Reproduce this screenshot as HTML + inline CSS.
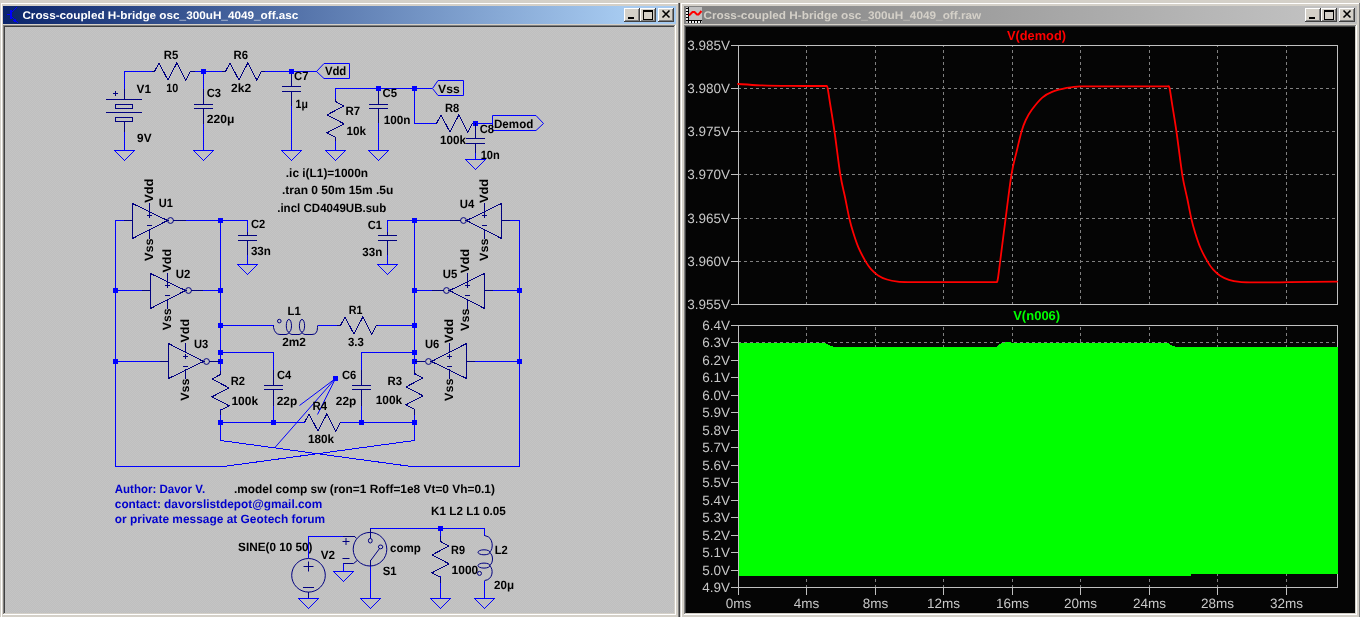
<!DOCTYPE html><html><head><meta charset="utf-8"><style>html,body{margin:0;padding:0;background:#d4d0c8;overflow:hidden}svg{will-change:transform} svg text{text-rendering:geometricPrecision}</style></head><body><svg width="1360" height="617" viewBox="0 0 1360 617" shape-rendering="crispEdges" style="display:block">
<rect x="0" y="0" width="1360" height="617" fill="#d4d0c8"/>
<rect x="1" y="3" width="679" height="1" fill="#ffffff"/>
<rect x="1" y="3" width="1" height="615" fill="#ffffff"/>
<rect x="678" y="3" width="1" height="615" fill="#808080"/>
<rect x="679" y="3" width="1" height="615" fill="#404040"/>
<defs><pattern id="dith" x="0" y="0" width="2" height="2" patternUnits="userSpaceOnUse"><rect width="2" height="2" fill="#bfbfbf"/><rect width="1" height="1" fill="#c4c4c4"/><rect x="1" y="1" width="1" height="1" fill="#c4c4c4"/></pattern><linearGradient id="ga" gradientUnits="userSpaceOnUse" x1="3" x2="622" y1="0" y2="0"><stop offset="0" stop-color="#0a246a"/><stop offset="1" stop-color="#a6caf0"/></linearGradient><linearGradient id="gi" gradientUnits="userSpaceOnUse" x1="684" x2="1303" y1="0" y2="0"><stop offset="0" stop-color="#808080"/><stop offset="1" stop-color="#c0c0c0"/></linearGradient></defs>
<rect x="3" y="6" width="673" height="18" fill="url(#ga)"/>
<rect x="3" y="25" width="673" height="1" fill="#808080"/>
<rect x="3" y="25" width="1" height="590" fill="#808080"/>
<rect x="4" y="26" width="671" height="1" fill="#404040"/>
<rect x="4" y="26" width="1" height="588" fill="#404040"/>
<rect x="3" y="614" width="673" height="1" fill="#ffffff"/>
<rect x="675" y="25" width="1" height="590" fill="#ffffff"/>
<rect x="4" y="613" width="671" height="1" fill="#d4d0c8"/>
<rect x="674" y="26" width="1" height="588" fill="#d4d0c8"/>
<rect x="5" y="27" width="669" height="586" fill="url(#dith)"/>
<rect x="681" y="3" width="680" height="1" fill="#ffffff"/>
<rect x="681" y="3" width="1" height="615" fill="#ffffff"/>
<rect x="684" y="6" width="673" height="18" fill="url(#gi)"/>
<rect x="684" y="25" width="673" height="1" fill="#808080"/>
<rect x="684" y="25" width="1" height="590" fill="#808080"/>
<rect x="685" y="26" width="671" height="1" fill="#404040"/>
<rect x="685" y="26" width="1" height="588" fill="#404040"/>
<rect x="684" y="614" width="673" height="1" fill="#ffffff"/>
<rect x="1356" y="25" width="1" height="590" fill="#ffffff"/>
<rect x="685" y="613" width="671" height="1" fill="#d4d0c8"/>
<rect x="1355" y="26" width="1" height="588" fill="#d4d0c8"/>
<rect x="1359" y="3" width="1" height="615" fill="#808080"/>
<rect x="686" y="27" width="669" height="586" fill="#050505"/>
<rect x="624" y="8" width="16" height="14" fill="#d4d0c8"/>
<rect x="624" y="8" width="16" height="1" fill="#ffffff"/>
<rect x="624" y="8" width="1" height="14" fill="#ffffff"/>
<rect x="624" y="21" width="16" height="1" fill="#404040"/>
<rect x="639" y="8" width="1" height="14" fill="#404040"/>
<rect x="625" y="20" width="14" height="1" fill="#808080"/>
<rect x="638" y="9" width="1" height="12" fill="#808080"/>
<rect x="628" y="17" width="6" height="2" fill="#000"/>
<rect x="640" y="8" width="16" height="14" fill="#d4d0c8"/>
<rect x="640" y="8" width="16" height="1" fill="#ffffff"/>
<rect x="640" y="8" width="1" height="14" fill="#ffffff"/>
<rect x="640" y="21" width="16" height="1" fill="#404040"/>
<rect x="655" y="8" width="1" height="14" fill="#404040"/>
<rect x="641" y="20" width="14" height="1" fill="#808080"/>
<rect x="654" y="9" width="1" height="12" fill="#808080"/>
<rect x="643" y="10" width="9" height="9" fill="none" stroke="#000" stroke-width="1" transform="translate(.5,.5)"/>
<rect x="643" y="11" width="9" height="1" fill="#000"/>
<rect x="658" y="8" width="16" height="14" fill="#d4d0c8"/>
<rect x="658" y="8" width="16" height="1" fill="#ffffff"/>
<rect x="658" y="8" width="1" height="14" fill="#ffffff"/>
<rect x="658" y="21" width="16" height="1" fill="#404040"/>
<rect x="673" y="8" width="1" height="14" fill="#404040"/>
<rect x="659" y="20" width="14" height="1" fill="#808080"/>
<rect x="672" y="9" width="1" height="12" fill="#808080"/>
<path d="M662.5,10.5 L669.5,17.5 M669.5,10.5 L662.5,17.5" stroke="#000" stroke-width="1.6" shape-rendering="geometricPrecision"/>
<rect x="1305" y="8" width="16" height="14" fill="#d4d0c8"/>
<rect x="1305" y="8" width="16" height="1" fill="#ffffff"/>
<rect x="1305" y="8" width="1" height="14" fill="#ffffff"/>
<rect x="1305" y="21" width="16" height="1" fill="#404040"/>
<rect x="1320" y="8" width="1" height="14" fill="#404040"/>
<rect x="1306" y="20" width="14" height="1" fill="#808080"/>
<rect x="1319" y="9" width="1" height="12" fill="#808080"/>
<rect x="1309" y="17" width="6" height="2" fill="#000"/>
<rect x="1321" y="8" width="16" height="14" fill="#d4d0c8"/>
<rect x="1321" y="8" width="16" height="1" fill="#ffffff"/>
<rect x="1321" y="8" width="1" height="14" fill="#ffffff"/>
<rect x="1321" y="21" width="16" height="1" fill="#404040"/>
<rect x="1336" y="8" width="1" height="14" fill="#404040"/>
<rect x="1322" y="20" width="14" height="1" fill="#808080"/>
<rect x="1335" y="9" width="1" height="12" fill="#808080"/>
<rect x="1324" y="10" width="9" height="9" fill="none" stroke="#000" stroke-width="1" transform="translate(.5,.5)"/>
<rect x="1324" y="11" width="9" height="1" fill="#000"/>
<rect x="1339" y="8" width="16" height="14" fill="#d4d0c8"/>
<rect x="1339" y="8" width="16" height="1" fill="#ffffff"/>
<rect x="1339" y="8" width="1" height="14" fill="#ffffff"/>
<rect x="1339" y="21" width="16" height="1" fill="#404040"/>
<rect x="1354" y="8" width="1" height="14" fill="#404040"/>
<rect x="1340" y="20" width="14" height="1" fill="#808080"/>
<rect x="1353" y="9" width="1" height="12" fill="#808080"/>
<path d="M1343.5,10.5 L1350.5,17.5 M1350.5,10.5 L1343.5,17.5" stroke="#000" stroke-width="1.6" shape-rendering="geometricPrecision"/>
<rect x="10" y="10" width="2" height="9" fill="#0000ff"/>
<rect x="7" y="14" width="3" height="1" fill="#0000ff"/>
<rect x="12" y="11" width="1" height="1" fill="#0000ff"/>
<rect x="13" y="10" width="1" height="1" fill="#0000ff"/>
<rect x="14" y="9" width="1" height="1" fill="#0000ff"/>
<rect x="15" y="8" width="1" height="1" fill="#0000ff"/>
<rect x="16" y="7" width="1" height="1" fill="#0000ff"/>
<rect x="12" y="17" width="1" height="1" fill="#0000ff"/>
<rect x="13" y="18" width="1" height="1" fill="#0000ff"/>
<rect x="14" y="19" width="1" height="1" fill="#0000ff"/>
<rect x="15" y="20" width="1" height="1" fill="#0000ff"/>
<rect x="16" y="21" width="1" height="1" fill="#0000ff"/>
<rect x="17" y="22" width="1" height="1" fill="#0000ff"/>
<rect x="13" y="20" width="3" height="1" fill="#0000ff"/>
<rect x="15" y="19" width="1" height="3" fill="#0000ff"/>
<rect x="14" y="21" width="2" height="1" fill="#0000ff"/>
<rect x="686" y="7" width="16" height="16" fill="#c0c0c0"/>
<rect x="688" y="7" width="1" height="16" fill="#000"/>
<rect x="686" y="20" width="16" height="1" fill="#000"/>
<rect x="686" y="8" width="3" height="1" fill="#000"/>
<rect x="686" y="11" width="3" height="1" fill="#000"/>
<rect x="686" y="14" width="3" height="1" fill="#000"/>
<rect x="686" y="17" width="3" height="1" fill="#000"/>
<rect x="686" y="9" width="2" height="2" fill="#f0f0f0"/>
<rect x="686" y="12" width="2" height="2" fill="#f0f0f0"/>
<rect x="686" y="15" width="2" height="2" fill="#f0f0f0"/>
<rect x="686" y="18" width="2" height="2" fill="#f0f0f0"/>
<rect x="688" y="21" width="1" height="2" fill="#000"/>
<rect x="691" y="21" width="1" height="2" fill="#000"/>
<rect x="694" y="21" width="1" height="2" fill="#000"/>
<rect x="697" y="21" width="1" height="2" fill="#000"/>
<rect x="700" y="21" width="1" height="2" fill="#000"/>
<rect x="689" y="21" width="2" height="2" fill="#f0f0f0"/>
<rect x="692" y="21" width="2" height="2" fill="#f0f0f0"/>
<rect x="695" y="21" width="2" height="2" fill="#f0f0f0"/>
<rect x="698" y="21" width="2" height="2" fill="#f0f0f0"/>
<polyline points="689,15.5 692.5,12 694.5,12 697,14.5 698.5,14.5 701.5,11" fill="none" stroke="#ff0000" stroke-width="2" shape-rendering="geometricPrecision"/>
<text x="22.4" y="19.3" font-family="Liberation Sans" font-size="11" font-weight="bold" fill="#ffffff" textLength="276.0" lengthAdjust="spacingAndGlyphs">Cross-coupled H-bridge osc_300uH_4049_off.asc</text>
<text x="703.5" y="19.0" font-family="Liberation Sans" font-size="11" font-weight="bold" fill="#d4d0c8" textLength="277.8" lengthAdjust="spacingAndGlyphs">Cross-coupled H-bridge osc_300uH_4049_off.raw</text>
<rect x="124" y="71" width="1" height="19" fill="#0000ff"/>
<rect x="124" y="71" width="28" height="1" fill="#0000ff"/>
<rect x="194" y="71" width="28" height="1" fill="#0000ff"/>
<rect x="203" y="71" width="1" height="19" fill="#0000ff"/>
<rect x="264" y="71" width="53" height="1" fill="#0000ff"/>
<rect x="203" y="123" width="1" height="28" fill="#0000ff"/>
<rect x="291" y="105" width="1" height="46" fill="#0000ff"/>
<rect x="124" y="131" width="1" height="20" fill="#0000ff"/>
<rect x="201" y="69" width="5" height="5" fill="#0000ff"/>
<rect x="289" y="69" width="5" height="5" fill="#0000ff"/>
<rect x="124" y="89" width="1" height="11" fill="#000080"/>
<rect x="106" y="99" width="36" height="1" fill="#000080"/>
<rect x="115.5" y="104.5" width="17" height="4" fill="none" stroke="#000080"/>
<rect x="106" y="112" width="36" height="1" fill="#000080"/>
<rect x="115.5" y="117.5" width="17" height="4" fill="none" stroke="#000080"/>
<rect x="124" y="121" width="1" height="11" fill="#000080"/>
<rect x="113" y="93" width="5" height="1" fill="#000080"/>
<rect x="115" y="91" width="1" height="5" fill="#000080"/>
<polygon points="114.5,150.5 134.5,150.5 124.5,160.5" fill="none" stroke="#0000ff" stroke-width="1"/>
<polygon points="193.5,150.5 213.5,150.5 203.5,160.5" fill="none" stroke="#0000ff" stroke-width="1"/>
<polygon points="281.5,150.5 301.5,150.5 291.5,160.5" fill="none" stroke="#0000ff" stroke-width="1"/>
<polyline points="151.5,71.5 154.5,71.5 158.97,62.9 167.91,80.1 176.85,62.9 185.79,80.1 190.26,71.5 194.5,71.5" fill="none" stroke="#000080" stroke-width="1"/>
<polyline points="221.5,71.5 225.5,71.5 229.97,62.9 238.91,80.1 247.85,62.9 256.79,80.1 261.26,71.5 264.5,71.5" fill="none" stroke="#000080" stroke-width="1"/>
<rect x="203" y="89" width="1" height="16" fill="#000080"/>
<rect x="203" y="108" width="1" height="16" fill="#000080"/>
<rect x="194" y="104" width="19" height="1" fill="#000080"/>
<rect x="194" y="108" width="19" height="1" fill="#000080"/>
<rect x="291" y="74" width="1" height="13" fill="#000080"/>
<rect x="291" y="91" width="1" height="15" fill="#000080"/>
<rect x="282" y="86" width="19" height="1" fill="#000080"/>
<rect x="282" y="91" width="19" height="1" fill="#000080"/>
<polygon points="316.5,71.5 324,63.5 349.5,63.5 349.5,78.5 324,78.5" fill="none" stroke="#0000ff" stroke-width="1" shape-rendering="geometricPrecision"/>
<rect x="335" y="88" width="1" height="11" fill="#0000ff"/>
<rect x="335" y="88" width="97" height="1" fill="#0000ff"/>
<rect x="414" y="88" width="1" height="36" fill="#0000ff"/>
<rect x="414" y="123" width="22" height="1" fill="#0000ff"/>
<rect x="376" y="86" width="5" height="5" fill="#0000ff"/>
<rect x="412" y="86" width="5" height="5" fill="#0000ff"/>
<rect x="378" y="88" width="1" height="4" fill="#0000ff"/>
<rect x="378" y="122" width="1" height="29" fill="#0000ff"/>
<rect x="335" y="140" width="1" height="11" fill="#0000ff"/>
<polyline points="335.5,98.5 335.5,101.5 344.1,105.97 326.9,114.91 344.1,123.85 326.9,132.79 335.5,137.26 335.5,140.5" fill="none" stroke="#000080" stroke-width="1"/>
<rect x="378" y="91" width="1" height="14" fill="#000080"/>
<rect x="378" y="108" width="1" height="15" fill="#000080"/>
<rect x="369" y="104" width="19" height="1" fill="#000080"/>
<rect x="369" y="108" width="19" height="1" fill="#000080"/>
<polygon points="325.5,150.5 345.5,150.5 335.5,160.5" fill="none" stroke="#0000ff" stroke-width="1"/>
<polygon points="368.5,150.5 388.5,150.5 378.5,160.5" fill="none" stroke="#0000ff" stroke-width="1"/>
<polygon points="432.5,88.5 438,80.5 463.5,80.5 463.5,95.5 438,95.5" fill="none" stroke="#0000ff" stroke-width="1" shape-rendering="geometricPrecision"/>
<polyline points="435.5,123.5 436.5,123.5 440.97,114.9 449.91,132.1 458.85,114.9 467.79,132.1 472.26,123.5 475.5,123.5" fill="none" stroke="#000080" stroke-width="1"/>
<rect x="475" y="123" width="18" height="1" fill="#0000ff"/>
<rect x="473" y="121" width="5" height="5" fill="#0000ff"/>
<rect x="475" y="123" width="1" height="16" fill="#000080"/>
<rect x="475" y="143" width="1" height="11" fill="#000080"/>
<rect x="466" y="138" width="19" height="1" fill="#000080"/>
<rect x="466" y="143" width="19" height="1" fill="#000080"/>
<rect x="475" y="153" width="1" height="7" fill="#0000ff"/>
<polygon points="465.5,159.5 485.5,159.5 475.5,169.5" fill="none" stroke="#0000ff" stroke-width="1"/>
<polygon points="492.5,115.5 536,115.5 543.5,123.5 536,130.5 492.5,130.5" fill="none" stroke="#0000ff" stroke-width="1" shape-rendering="geometricPrecision"/>
<text x="136.6" y="92.6" font-family="Liberation Sans" font-size="12" font-weight="bold" fill="#000" textLength="14.4" lengthAdjust="spacingAndGlyphs">V1</text>
<text x="137.1" y="141.6" font-family="Liberation Sans" font-size="12" font-weight="bold" fill="#000" textLength="14.4" lengthAdjust="spacingAndGlyphs">9V</text>
<text x="163.8" y="58.6" font-family="Liberation Sans" font-size="12" font-weight="bold" fill="#000" textLength="14.5" lengthAdjust="spacingAndGlyphs">R5</text>
<text x="166.3" y="91.8" font-family="Liberation Sans" font-size="12" font-weight="bold" fill="#000" textLength="12.0" lengthAdjust="spacingAndGlyphs">10</text>
<text x="206.8" y="97.4" font-family="Liberation Sans" font-size="12" font-weight="bold" fill="#000" textLength="14.3" lengthAdjust="spacingAndGlyphs">C3</text>
<text x="206.8" y="123.3" font-family="Liberation Sans" font-size="12" font-weight="bold" fill="#000" textLength="27.6" lengthAdjust="spacingAndGlyphs">220μ</text>
<text x="233.5" y="58.6" font-family="Liberation Sans" font-size="12" font-weight="bold" fill="#000" textLength="14.5" lengthAdjust="spacingAndGlyphs">R6</text>
<text x="231" y="91.8" font-family="Liberation Sans" font-size="12" font-weight="bold" fill="#000" textLength="20.1" lengthAdjust="spacingAndGlyphs">2k2</text>
<text x="294" y="79.9" font-family="Liberation Sans" font-size="12" font-weight="bold" fill="#000" textLength="14.4" lengthAdjust="spacingAndGlyphs">C7</text>
<text x="295.6" y="107.6" font-family="Liberation Sans" font-size="12" font-weight="bold" fill="#000" textLength="12.3" lengthAdjust="spacingAndGlyphs">1μ</text>
<text x="324.9" y="75.3" font-family="Liberation Sans" font-size="12" font-weight="bold" fill="#000" textLength="21.4" lengthAdjust="spacingAndGlyphs">Vdd</text>
<text x="345.5" y="114.5" font-family="Liberation Sans" font-size="12" font-weight="bold" fill="#000" textLength="14.7" lengthAdjust="spacingAndGlyphs">R7</text>
<text x="346.5" y="134.6" font-family="Liberation Sans" font-size="12" font-weight="bold" fill="#000" textLength="19.5" lengthAdjust="spacingAndGlyphs">10k</text>
<text x="382.6" y="97.3" font-family="Liberation Sans" font-size="12" font-weight="bold" fill="#000" textLength="14.5" lengthAdjust="spacingAndGlyphs">C5</text>
<text x="383.7" y="123.7" font-family="Liberation Sans" font-size="12" font-weight="bold" fill="#000" textLength="26.8" lengthAdjust="spacingAndGlyphs">100n</text>
<text x="438" y="92.5" font-family="Liberation Sans" font-size="12" font-weight="bold" fill="#000" textLength="21.7" lengthAdjust="spacingAndGlyphs">Vss</text>
<text x="444.9" y="111.6" font-family="Liberation Sans" font-size="12" font-weight="bold" fill="#000" textLength="14.2" lengthAdjust="spacingAndGlyphs">R8</text>
<text x="440" y="143.6" font-family="Liberation Sans" font-size="12" font-weight="bold" fill="#000" textLength="26.0" lengthAdjust="spacingAndGlyphs">100k</text>
<text x="479.7" y="133" font-family="Liberation Sans" font-size="12" font-weight="bold" fill="#000" textLength="14.3" lengthAdjust="spacingAndGlyphs">C8</text>
<text x="480.7" y="158.5" font-family="Liberation Sans" font-size="12" font-weight="bold" fill="#000" textLength="19.1" lengthAdjust="spacingAndGlyphs">10n</text>
<text x="494" y="127.9" font-family="Liberation Sans" font-size="12" font-weight="bold" fill="#000" textLength="39.3" lengthAdjust="spacingAndGlyphs">Demod</text>
<text x="285.8" y="176.7" font-family="Liberation Sans" font-size="12" font-weight="bold" fill="#000" textLength="82.2" lengthAdjust="spacingAndGlyphs">.ic i(L1)=1000n</text>
<text x="282" y="193.5" font-family="Liberation Sans" font-size="12" font-weight="bold" fill="#000" textLength="111.3" lengthAdjust="spacingAndGlyphs">.tran 0 50m 15m .5u</text>
<text x="277.2" y="211.6" font-family="Liberation Sans" font-size="12" font-weight="bold" fill="#000" textLength="109.0" lengthAdjust="spacingAndGlyphs">.incl CD4049UB.sub</text>
<rect x="115" y="220" width="18" height="1" fill="#0000ff"/>
<rect x="115" y="220" width="1" height="247" fill="#0000ff"/>
<rect x="115" y="466" width="109" height="1" fill="#0000ff"/>
<line x1="223.5" y1="466.5" x2="414.5" y2="440.5" stroke="#0000ff" stroke-width="1"/>
<rect x="115" y="290" width="36" height="1" fill="#0000ff"/>
<rect x="115" y="361" width="54" height="1" fill="#0000ff"/>
<rect x="113" y="288" width="5" height="5" fill="#0000ff"/>
<rect x="113" y="359" width="5" height="5" fill="#0000ff"/>
<rect x="220" y="220" width="1" height="155" fill="#0000ff"/>
<rect x="220" y="409" width="1" height="32" fill="#0000ff"/>
<line x1="220.5" y1="440.5" x2="411.5" y2="466.5" stroke="#0000ff" stroke-width="1"/>
<rect x="411" y="466" width="109" height="1" fill="#0000ff"/>
<rect x="519" y="220" width="1" height="247" fill="#0000ff"/>
<rect x="509" y="220" width="11" height="1" fill="#0000ff"/>
<rect x="492" y="290" width="28" height="1" fill="#0000ff"/>
<rect x="474" y="361" width="46" height="1" fill="#0000ff"/>
<rect x="517" y="288" width="5" height="5" fill="#0000ff"/>
<rect x="517" y="359" width="5" height="5" fill="#0000ff"/>
<rect x="185" y="220" width="63" height="1" fill="#0000ff"/>
<rect x="247" y="220" width="1" height="13" fill="#0000ff"/>
<rect x="202" y="290" width="19" height="1" fill="#0000ff"/>
<rect x="209" y="361" width="12" height="1" fill="#0000ff"/>
<rect x="387" y="220" width="64" height="1" fill="#0000ff"/>
<rect x="387" y="220" width="1" height="13" fill="#0000ff"/>
<rect x="414" y="290" width="19" height="1" fill="#0000ff"/>
<rect x="414" y="220" width="1" height="155" fill="#0000ff"/>
<rect x="414" y="409" width="1" height="32" fill="#0000ff"/>
<line x1="414.5" y1="440.5" x2="223.5" y2="466.5" stroke="#0000ff" stroke-width="1"/>
<rect x="218" y="218" width="5" height="5" fill="#0000ff"/>
<rect x="412" y="218" width="5" height="5" fill="#0000ff"/>
<rect x="218" y="288" width="5" height="5" fill="#0000ff"/>
<rect x="412" y="288" width="5" height="5" fill="#0000ff"/>
<rect x="218" y="323" width="5" height="5" fill="#0000ff"/>
<rect x="412" y="323" width="5" height="5" fill="#0000ff"/>
<rect x="218" y="350" width="5" height="5" fill="#0000ff"/>
<rect x="412" y="350" width="5" height="5" fill="#0000ff"/>
<rect x="218" y="359" width="5" height="5" fill="#0000ff"/>
<rect x="412" y="359" width="5" height="5" fill="#0000ff"/>
<rect x="218" y="420" width="5" height="5" fill="#0000ff"/>
<rect x="412" y="420" width="5" height="5" fill="#0000ff"/>
<rect x="220" y="325" width="54" height="1" fill="#0000ff"/>
<rect x="318" y="325" width="19" height="1" fill="#0000ff"/>
<rect x="377" y="325" width="38" height="1" fill="#0000ff"/>
<rect x="220" y="352" width="54" height="1" fill="#0000ff"/>
<rect x="273" y="352" width="1" height="34" fill="#0000ff"/>
<rect x="273" y="389" width="1" height="34" fill="#0000ff"/>
<rect x="361" y="352" width="54" height="1" fill="#0000ff"/>
<rect x="361" y="352" width="1" height="34" fill="#0000ff"/>
<rect x="361" y="389" width="1" height="34" fill="#0000ff"/>
<rect x="220" y="422" width="85" height="1" fill="#0000ff"/>
<rect x="340" y="422" width="75" height="1" fill="#0000ff"/>
<rect x="271" y="420" width="5" height="5" fill="#0000ff"/>
<rect x="359" y="420" width="5" height="5" fill="#0000ff"/>
<rect x="247" y="254" width="1" height="11" fill="#0000ff"/>
<polygon points="237.5,264.5 257.5,264.5 247.5,274.5" fill="none" stroke="#0000ff" stroke-width="1"/>
<rect x="387" y="254" width="1" height="11" fill="#0000ff"/>
<polygon points="377.5,264.5 397.5,264.5 387.5,274.5" fill="none" stroke="#0000ff" stroke-width="1"/>
<rect x="247" y="232" width="1" height="4" fill="#000080"/>
<rect x="247" y="240" width="1" height="15" fill="#000080"/>
<rect x="238" y="235" width="19" height="1" fill="#000080"/>
<rect x="238" y="240" width="19" height="1" fill="#000080"/>
<rect x="387" y="232" width="1" height="4" fill="#000080"/>
<rect x="387" y="240" width="1" height="15" fill="#000080"/>
<rect x="378" y="235" width="19" height="1" fill="#000080"/>
<rect x="378" y="240" width="19" height="1" fill="#000080"/>
<rect x="273" y="370" width="1" height="16" fill="#000080"/>
<rect x="273" y="389" width="1" height="17" fill="#000080"/>
<rect x="264" y="385" width="19" height="1" fill="#000080"/>
<rect x="264" y="389" width="19" height="1" fill="#000080"/>
<rect x="361" y="370" width="1" height="16" fill="#000080"/>
<rect x="361" y="389" width="1" height="17" fill="#000080"/>
<rect x="352" y="385" width="19" height="1" fill="#000080"/>
<rect x="352" y="389" width="19" height="1" fill="#000080"/>
<polygon points="132.5,203.5 167.5,220.5 132.5,238.5" fill="none" stroke="#000080" stroke-width="1"/>
<circle cx="170.5" cy="220.5" r="2.9" fill="none" stroke="#000080" stroke-width="1" shape-rendering="geometricPrecision"/>
<rect x="149" y="203" width="1" height="10" fill="#000080"/>
<rect x="149" y="229" width="1" height="10" fill="#000080"/>
<rect x="147" y="215" width="5" height="1" fill="#000080"/>
<rect x="149" y="213" width="1" height="5" fill="#000080"/>
<rect x="147" y="225" width="5" height="1" fill="#000080"/>
<polygon points="150.5,273.5 185.5,290.5 150.5,308.5" fill="none" stroke="#000080" stroke-width="1"/>
<circle cx="188.5" cy="290.5" r="2.9" fill="none" stroke="#000080" stroke-width="1" shape-rendering="geometricPrecision"/>
<rect x="167" y="273" width="1" height="10" fill="#000080"/>
<rect x="167" y="299" width="1" height="10" fill="#000080"/>
<rect x="165" y="285" width="5" height="1" fill="#000080"/>
<rect x="167" y="283" width="1" height="5" fill="#000080"/>
<rect x="165" y="295" width="5" height="1" fill="#000080"/>
<polygon points="168.5,343.5 203.5,361.5 168.5,378.5" fill="none" stroke="#000080" stroke-width="1"/>
<circle cx="206.5" cy="361.5" r="2.9" fill="none" stroke="#000080" stroke-width="1" shape-rendering="geometricPrecision"/>
<rect x="185" y="343" width="1" height="10" fill="#000080"/>
<rect x="185" y="369" width="1" height="10" fill="#000080"/>
<rect x="183" y="356" width="5" height="1" fill="#000080"/>
<rect x="185" y="354" width="1" height="5" fill="#000080"/>
<rect x="183" y="366" width="5" height="1" fill="#000080"/>
<polygon points="501.5,203.5 466.5,220.5 501.5,238.5" fill="none" stroke="#000080" stroke-width="1"/>
<circle cx="463.5" cy="220.5" r="2.9" fill="none" stroke="#000080" stroke-width="1" shape-rendering="geometricPrecision"/>
<rect x="484" y="203" width="1" height="10" fill="#000080"/>
<rect x="484" y="229" width="1" height="10" fill="#000080"/>
<rect x="482" y="215" width="5" height="1" fill="#000080"/>
<rect x="484" y="213" width="1" height="5" fill="#000080"/>
<rect x="482" y="225" width="5" height="1" fill="#000080"/>
<polygon points="484.5,273.5 449.5,290.5 484.5,308.5" fill="none" stroke="#000080" stroke-width="1"/>
<circle cx="446.5" cy="290.5" r="2.9" fill="none" stroke="#000080" stroke-width="1" shape-rendering="geometricPrecision"/>
<rect x="467" y="273" width="1" height="10" fill="#000080"/>
<rect x="467" y="299" width="1" height="10" fill="#000080"/>
<rect x="465" y="285" width="5" height="1" fill="#000080"/>
<rect x="467" y="283" width="1" height="5" fill="#000080"/>
<rect x="465" y="295" width="5" height="1" fill="#000080"/>
<polygon points="466.5,343.5 431.5,361.5 466.5,378.5" fill="none" stroke="#000080" stroke-width="1"/>
<circle cx="428.5" cy="361.5" r="2.9" fill="none" stroke="#000080" stroke-width="1" shape-rendering="geometricPrecision"/>
<rect x="449" y="343" width="1" height="10" fill="#000080"/>
<rect x="449" y="369" width="1" height="10" fill="#000080"/>
<rect x="447" y="356" width="5" height="1" fill="#000080"/>
<rect x="449" y="354" width="1" height="5" fill="#000080"/>
<rect x="447" y="366" width="5" height="1" fill="#000080"/>
<rect x="124" y="220" width="9" height="1" fill="#000080"/>
<rect x="142" y="290" width="9" height="1" fill="#000080"/>
<rect x="160" y="361" width="9" height="1" fill="#000080"/>
<rect x="173" y="220" width="13" height="1" fill="#000080"/>
<rect x="191" y="290" width="12" height="1" fill="#000080"/>
<rect x="209" y="361" width="11" height="1" fill="#000080"/>
<rect x="501" y="220" width="9" height="1" fill="#000080"/>
<rect x="484" y="290" width="9" height="1" fill="#000080"/>
<rect x="466" y="361" width="9" height="1" fill="#000080"/>
<rect x="450" y="220" width="11" height="1" fill="#000080"/>
<rect x="432" y="290" width="12" height="1" fill="#000080"/>
<rect x="415" y="361" width="10" height="1" fill="#000080"/>
<polyline points="220.5,370.5 220.5,374.5 211.9,378.97 229.1,387.91 211.9,396.85 229.1,405.79 220.5,410.26 220.5,414.5" fill="none" stroke="#000080" stroke-width="1"/>
<polyline points="414.5,369.5 414.5,373.5 423.1,377.97 405.9,386.91 423.1,395.85 405.9,404.79 414.5,409.26 414.5,414.5" fill="none" stroke="#000080" stroke-width="1"/>
<polyline points="336.5,325.5 340.5,325.5 344.97,316.9 353.91,334.1 362.85,316.9 371.79,334.1 376.26,325.5 377.5,325.5" fill="none" stroke="#000080" stroke-width="1"/>
<polyline points="304.5,422.5 304.5,422.5 308.97,413.9 317.91,431.1 326.85,413.9 335.79,431.1 340.26,422.5 340.5,422.5" fill="none" stroke="#000080" stroke-width="1"/>
<g fill="none" stroke="#000080" stroke-width="1" shape-rendering="geometricPrecision"><path d="M273.5,325.5 L273.5,327.5 Q275,334.5 280,334.5 L286,334.5 Q288,334.5 289,332.5 Q290,334.5 292,334.5 L299,334.5 Q301,334.5 302,332.5 Q303,334.5 305,334.5 L312,334.5 Q317.5,334.5 317.5,327.5 L317.5,325.5"/><ellipse cx="288.9" cy="325.8" rx="2.6" ry="6.4"/><ellipse cx="302" cy="325.8" rx="2.6" ry="6.4"/><circle cx="279.3" cy="321.1" r="1.8"/></g>
<rect x="333" y="376" width="5" height="5" fill="#0000ff"/>
<g stroke="#0000ff" stroke-width="1" shape-rendering="geometricPrecision"><line x1="335.5" y1="378.5" x2="299.5" y2="405.5"/><line x1="335.5" y1="378.5" x2="317.5" y2="414.5"/><line x1="335.5" y1="378.5" x2="274.5" y2="448"/></g>
<text transform="translate(153.1,202.7) rotate(-90)" x="0" y="0" font-family="Liberation Sans" font-size="12" font-weight="bold" fill="#000" textLength="24.1" lengthAdjust="spacingAndGlyphs">Vdd</text>
<text transform="translate(153.1,261) rotate(-90)" x="0" y="0" font-family="Liberation Sans" font-size="12" font-weight="bold" fill="#000" textLength="22.6" lengthAdjust="spacingAndGlyphs">Vss</text>
<text transform="translate(171.4,272.4) rotate(-90)" x="0" y="0" font-family="Liberation Sans" font-size="12" font-weight="bold" fill="#000" textLength="23.4" lengthAdjust="spacingAndGlyphs">Vdd</text>
<text transform="translate(171.4,330.2) rotate(-90)" x="0" y="0" font-family="Liberation Sans" font-size="12" font-weight="bold" fill="#000" textLength="21.9" lengthAdjust="spacingAndGlyphs">Vss</text>
<text transform="translate(188.6,342.4) rotate(-90)" x="0" y="0" font-family="Liberation Sans" font-size="12" font-weight="bold" fill="#000" textLength="23.4" lengthAdjust="spacingAndGlyphs">Vdd</text>
<text transform="translate(188.6,400.8) rotate(-90)" x="0" y="0" font-family="Liberation Sans" font-size="12" font-weight="bold" fill="#000" textLength="22.2" lengthAdjust="spacingAndGlyphs">Vss</text>
<text transform="translate(487.5,203.1) rotate(-90)" x="0" y="0" font-family="Liberation Sans" font-size="12" font-weight="bold" fill="#000" textLength="24.2" lengthAdjust="spacingAndGlyphs">Vdd</text>
<text transform="translate(487.5,260.9) rotate(-90)" x="0" y="0" font-family="Liberation Sans" font-size="12" font-weight="bold" fill="#000" textLength="22.4" lengthAdjust="spacingAndGlyphs">Vss</text>
<text transform="translate(469.3,273.1) rotate(-90)" x="0" y="0" font-family="Liberation Sans" font-size="12" font-weight="bold" fill="#000" textLength="24.2" lengthAdjust="spacingAndGlyphs">Vdd</text>
<text transform="translate(469.3,330.9) rotate(-90)" x="0" y="0" font-family="Liberation Sans" font-size="12" font-weight="bold" fill="#000" textLength="22.4" lengthAdjust="spacingAndGlyphs">Vss</text>
<text transform="translate(452.7,343) rotate(-90)" x="0" y="0" font-family="Liberation Sans" font-size="12" font-weight="bold" fill="#000" textLength="24.1" lengthAdjust="spacingAndGlyphs">Vdd</text>
<text transform="translate(452.7,400.9) rotate(-90)" x="0" y="0" font-family="Liberation Sans" font-size="12" font-weight="bold" fill="#000" textLength="22.3" lengthAdjust="spacingAndGlyphs">Vss</text>
<text x="158.7" y="207.4" font-family="Liberation Sans" font-size="12" font-weight="bold" fill="#000" textLength="14.1" lengthAdjust="spacingAndGlyphs">U1</text>
<text x="175.7" y="277.6" font-family="Liberation Sans" font-size="12" font-weight="bold" fill="#000" textLength="14.6" lengthAdjust="spacingAndGlyphs">U2</text>
<text x="194" y="347.6" font-family="Liberation Sans" font-size="12" font-weight="bold" fill="#000" textLength="14.3" lengthAdjust="spacingAndGlyphs">U3</text>
<text x="459.8" y="207.7" font-family="Liberation Sans" font-size="12" font-weight="bold" fill="#000" textLength="14.5" lengthAdjust="spacingAndGlyphs">U4</text>
<text x="442.8" y="277.7" font-family="Liberation Sans" font-size="12" font-weight="bold" fill="#000" textLength="14.5" lengthAdjust="spacingAndGlyphs">U5</text>
<text x="425" y="347.8" font-family="Liberation Sans" font-size="12" font-weight="bold" fill="#000" textLength="14.3" lengthAdjust="spacingAndGlyphs">U6</text>
<text x="250.9" y="228.2" font-family="Liberation Sans" font-size="12" font-weight="bold" fill="#000" textLength="14.3" lengthAdjust="spacingAndGlyphs">C2</text>
<text x="250.9" y="255.2" font-family="Liberation Sans" font-size="12" font-weight="bold" fill="#000" textLength="20.0" lengthAdjust="spacingAndGlyphs">33n</text>
<text x="367.7" y="228.8" font-family="Liberation Sans" font-size="12" font-weight="bold" fill="#000" textLength="14.2" lengthAdjust="spacingAndGlyphs">C1</text>
<text x="362.3" y="255.5" font-family="Liberation Sans" font-size="12" font-weight="bold" fill="#000" textLength="20.0" lengthAdjust="spacingAndGlyphs">33n</text>
<text x="287.5" y="315.4" font-family="Liberation Sans" font-size="12" font-weight="bold" fill="#000" textLength="13.2" lengthAdjust="spacingAndGlyphs">L1</text>
<text x="282.2" y="345.5" font-family="Liberation Sans" font-size="12" font-weight="bold" fill="#000" textLength="23.8" lengthAdjust="spacingAndGlyphs">2m2</text>
<text x="348.8" y="313.7" font-family="Liberation Sans" font-size="12" font-weight="bold" fill="#000" textLength="13.7" lengthAdjust="spacingAndGlyphs">R1</text>
<text x="348" y="345.5" font-family="Liberation Sans" font-size="12" font-weight="bold" fill="#000" textLength="15.9" lengthAdjust="spacingAndGlyphs">3.3</text>
<text x="276.9" y="379.1" font-family="Liberation Sans" font-size="12" font-weight="bold" fill="#000" textLength="14.2" lengthAdjust="spacingAndGlyphs">C4</text>
<text x="276.7" y="404.5" font-family="Liberation Sans" font-size="12" font-weight="bold" fill="#000" textLength="20.5" lengthAdjust="spacingAndGlyphs">22p</text>
<text x="342" y="378.6" font-family="Liberation Sans" font-size="12" font-weight="bold" fill="#000" textLength="14.3" lengthAdjust="spacingAndGlyphs">C6</text>
<text x="335.8" y="404.5" font-family="Liberation Sans" font-size="12" font-weight="bold" fill="#000" textLength="20.5" lengthAdjust="spacingAndGlyphs">22p</text>
<text x="230.7" y="384.6" font-family="Liberation Sans" font-size="12" font-weight="bold" fill="#000" textLength="14.3" lengthAdjust="spacingAndGlyphs">R2</text>
<text x="231.4" y="404.5" font-family="Liberation Sans" font-size="12" font-weight="bold" fill="#000" textLength="26.7" lengthAdjust="spacingAndGlyphs">100k</text>
<text x="387.6" y="384.5" font-family="Liberation Sans" font-size="12" font-weight="bold" fill="#000" textLength="14.6" lengthAdjust="spacingAndGlyphs">R3</text>
<text x="375.7" y="404.4" font-family="Liberation Sans" font-size="12" font-weight="bold" fill="#000" textLength="26.5" lengthAdjust="spacingAndGlyphs">100k</text>
<text x="312.5" y="410" font-family="Liberation Sans" font-size="12" font-weight="bold" fill="#000" textLength="14.6" lengthAdjust="spacingAndGlyphs">R4</text>
<text x="307.9" y="443" font-family="Liberation Sans" font-size="12" font-weight="bold" fill="#000" textLength="26.1" lengthAdjust="spacingAndGlyphs">180k</text>
<text x="114.8" y="492.8" font-family="Liberation Sans" font-size="12" font-weight="bold" fill="#0000cc" textLength="90.3" lengthAdjust="spacingAndGlyphs">Author: Davor V.</text>
<text x="114.8" y="507.5" font-family="Liberation Sans" font-size="12" font-weight="bold" fill="#0000cc" textLength="207.5" lengthAdjust="spacingAndGlyphs">contact: davorslistdepot@gmail.com</text>
<text x="114.8" y="523.3" font-family="Liberation Sans" font-size="12" font-weight="bold" fill="#0000cc" textLength="210.4" lengthAdjust="spacingAndGlyphs">or private message at Geotech forum</text>
<text x="233.9" y="492.8" font-family="Liberation Sans" font-size="12" font-weight="bold" fill="#000" textLength="261.0" lengthAdjust="spacingAndGlyphs">.model comp sw (ron=1 Roff=1e8 Vt=0 Vh=0.1)</text>
<text x="431.1" y="514.8" font-family="Liberation Sans" font-size="12" font-weight="bold" fill="#000" textLength="74.8" lengthAdjust="spacingAndGlyphs">K1 L2 L1 0.05</text>
<text x="238.1" y="550.8" font-family="Liberation Sans" font-size="12" font-weight="bold" fill="#000" textLength="74.4" lengthAdjust="spacingAndGlyphs">SINE(0 10 50)</text>
<text x="320.8" y="558.5" font-family="Liberation Sans" font-size="12" font-weight="bold" fill="#000" textLength="14.3" lengthAdjust="spacingAndGlyphs">V2</text>
<text x="390" y="552" font-family="Liberation Sans" font-size="12" font-weight="bold" fill="#000" textLength="30.8" lengthAdjust="spacingAndGlyphs">comp</text>
<text x="382.8" y="575.4" font-family="Liberation Sans" font-size="12" font-weight="bold" fill="#000" textLength="13.9" lengthAdjust="spacingAndGlyphs">S1</text>
<text x="451.1" y="553.6" font-family="Liberation Sans" font-size="12" font-weight="bold" fill="#000" textLength="13.9" lengthAdjust="spacingAndGlyphs">R9</text>
<text x="451.6" y="573.6" font-family="Liberation Sans" font-size="12" font-weight="bold" fill="#000" textLength="26.6" lengthAdjust="spacingAndGlyphs">1000</text>
<text x="494.7" y="553.6" font-family="Liberation Sans" font-size="12" font-weight="bold" fill="#000" textLength="13.1" lengthAdjust="spacingAndGlyphs">L2</text>
<text x="494" y="588.5" font-family="Liberation Sans" font-size="12" font-weight="bold" fill="#000" textLength="20.0" lengthAdjust="spacingAndGlyphs">20μ</text>
<rect x="308" y="536" width="1" height="22" fill="#0000ff"/>
<rect x="308" y="536" width="36" height="1" fill="#0000ff"/>
<rect x="343" y="536" width="12" height="1" fill="#000080"/>
<rect x="370" y="528" width="1" height="5" fill="#0000ff"/>
<rect x="370" y="528" width="115" height="1" fill="#0000ff"/>
<rect x="484" y="528" width="1" height="8" fill="#0000ff"/>
<rect x="438" y="526" width="5" height="5" fill="#0000ff"/>
<rect x="440" y="528" width="1" height="13" fill="#0000ff"/>
<rect x="370" y="566" width="1" height="33" fill="#0000ff"/>
<rect x="440" y="576" width="1" height="23" fill="#0000ff"/>
<rect x="484" y="581" width="1" height="18" fill="#0000ff"/>
<rect x="343" y="563" width="1" height="9" fill="#0000ff"/>
<polygon points="298.5,598.5 318.5,598.5 308.5,608.5" fill="none" stroke="#0000ff" stroke-width="1"/>
<polygon points="360.5,598.5 380.5,598.5 370.5,608.5" fill="none" stroke="#0000ff" stroke-width="1"/>
<polygon points="430.5,598.5 450.5,598.5 440.5,608.5" fill="none" stroke="#0000ff" stroke-width="1"/>
<polygon points="474.5,598.5 494.5,598.5 484.5,608.5" fill="none" stroke="#0000ff" stroke-width="1"/>
<polygon points="333.5,571.5 353.5,571.5 343.5,581.5" fill="none" stroke="#0000ff" stroke-width="1"/>
<g fill="none" stroke="#000080" stroke-width="1" shape-rendering="geometricPrecision"><circle cx="308.5" cy="575.3" r="16.8"/><path d="M303.5,566.5 L313.5,566.5 M308.5,561.5 L308.5,571.5"/><path d="M303,587.5 L314,587.5"/><path d="M308.5,592 L308.5,598"/><circle cx="370" cy="549.2" r="16.8"/><ellipse cx="370.3" cy="540.7" rx="1.9" ry="2.3"/><ellipse cx="380.6" cy="546.9" rx="2.2" ry="1.9"/><path d="M370.5,528.5 L370.5,538.3"/><path d="M370.7,560.5 L379.2,549"/><path d="M370.5,560 L370.5,566"/><path d="M342.5,541.5 L349.5,541.5 M346,538 L346,545"/><path d="M342.5,558.5 L349.5,558.5"/><path d="M354.5,536.5 L356.5,538.3"/><path d="M357,560.7 L353.6,563.5 L343.5,563.5"/></g>
<polyline points="440.5,535.5 440.5,541.5 449.1,545.97 431.9,554.91 449.1,563.85 431.9,572.79 440.5,577.26 440.5,582.5" fill="none" stroke="#000080" stroke-width="1"/>
<g fill="none" stroke="#000080" stroke-width="1" shape-rendering="geometricPrecision"><path d="M484.5,535.5 L486,536 C493,537 494,549 489.5,552.3 C493.5,555 493.5,563 489.5,565.6 C494,569 493,580 484.5,580.5"/><ellipse cx="484" cy="552.3" rx="6" ry="2.5"/><ellipse cx="484" cy="565.6" rx="6" ry="2.5"/><circle cx="479.5" cy="573.4" r="2"/></g>
<rect x="738" y="88" width="3" height="1" fill="#808080"/>
<rect x="744" y="88" width="3" height="1" fill="#808080"/>
<rect x="750" y="88" width="3" height="1" fill="#808080"/>
<rect x="756" y="88" width="3" height="1" fill="#808080"/>
<rect x="762" y="88" width="3" height="1" fill="#808080"/>
<rect x="768" y="88" width="3" height="1" fill="#808080"/>
<rect x="774" y="88" width="3" height="1" fill="#808080"/>
<rect x="780" y="88" width="3" height="1" fill="#808080"/>
<rect x="786" y="88" width="3" height="1" fill="#808080"/>
<rect x="792" y="88" width="3" height="1" fill="#808080"/>
<rect x="798" y="88" width="3" height="1" fill="#808080"/>
<rect x="804" y="88" width="3" height="1" fill="#808080"/>
<rect x="810" y="88" width="3" height="1" fill="#808080"/>
<rect x="816" y="88" width="3" height="1" fill="#808080"/>
<rect x="822" y="88" width="3" height="1" fill="#808080"/>
<rect x="828" y="88" width="3" height="1" fill="#808080"/>
<rect x="834" y="88" width="3" height="1" fill="#808080"/>
<rect x="840" y="88" width="3" height="1" fill="#808080"/>
<rect x="846" y="88" width="3" height="1" fill="#808080"/>
<rect x="852" y="88" width="3" height="1" fill="#808080"/>
<rect x="858" y="88" width="3" height="1" fill="#808080"/>
<rect x="864" y="88" width="3" height="1" fill="#808080"/>
<rect x="870" y="88" width="3" height="1" fill="#808080"/>
<rect x="876" y="88" width="3" height="1" fill="#808080"/>
<rect x="882" y="88" width="3" height="1" fill="#808080"/>
<rect x="888" y="88" width="3" height="1" fill="#808080"/>
<rect x="894" y="88" width="3" height="1" fill="#808080"/>
<rect x="900" y="88" width="3" height="1" fill="#808080"/>
<rect x="906" y="88" width="3" height="1" fill="#808080"/>
<rect x="912" y="88" width="3" height="1" fill="#808080"/>
<rect x="918" y="88" width="3" height="1" fill="#808080"/>
<rect x="924" y="88" width="3" height="1" fill="#808080"/>
<rect x="930" y="88" width="3" height="1" fill="#808080"/>
<rect x="936" y="88" width="3" height="1" fill="#808080"/>
<rect x="942" y="88" width="3" height="1" fill="#808080"/>
<rect x="948" y="88" width="3" height="1" fill="#808080"/>
<rect x="954" y="88" width="3" height="1" fill="#808080"/>
<rect x="960" y="88" width="3" height="1" fill="#808080"/>
<rect x="966" y="88" width="3" height="1" fill="#808080"/>
<rect x="972" y="88" width="3" height="1" fill="#808080"/>
<rect x="978" y="88" width="3" height="1" fill="#808080"/>
<rect x="984" y="88" width="3" height="1" fill="#808080"/>
<rect x="990" y="88" width="3" height="1" fill="#808080"/>
<rect x="996" y="88" width="3" height="1" fill="#808080"/>
<rect x="1002" y="88" width="3" height="1" fill="#808080"/>
<rect x="1008" y="88" width="3" height="1" fill="#808080"/>
<rect x="1014" y="88" width="3" height="1" fill="#808080"/>
<rect x="1020" y="88" width="3" height="1" fill="#808080"/>
<rect x="1026" y="88" width="3" height="1" fill="#808080"/>
<rect x="1032" y="88" width="3" height="1" fill="#808080"/>
<rect x="1038" y="88" width="3" height="1" fill="#808080"/>
<rect x="1044" y="88" width="3" height="1" fill="#808080"/>
<rect x="1050" y="88" width="3" height="1" fill="#808080"/>
<rect x="1056" y="88" width="3" height="1" fill="#808080"/>
<rect x="1062" y="88" width="3" height="1" fill="#808080"/>
<rect x="1068" y="88" width="3" height="1" fill="#808080"/>
<rect x="1074" y="88" width="3" height="1" fill="#808080"/>
<rect x="1080" y="88" width="3" height="1" fill="#808080"/>
<rect x="1086" y="88" width="3" height="1" fill="#808080"/>
<rect x="1092" y="88" width="3" height="1" fill="#808080"/>
<rect x="1098" y="88" width="3" height="1" fill="#808080"/>
<rect x="1104" y="88" width="3" height="1" fill="#808080"/>
<rect x="1110" y="88" width="3" height="1" fill="#808080"/>
<rect x="1116" y="88" width="3" height="1" fill="#808080"/>
<rect x="1122" y="88" width="3" height="1" fill="#808080"/>
<rect x="1128" y="88" width="3" height="1" fill="#808080"/>
<rect x="1134" y="88" width="3" height="1" fill="#808080"/>
<rect x="1140" y="88" width="3" height="1" fill="#808080"/>
<rect x="1146" y="88" width="3" height="1" fill="#808080"/>
<rect x="1152" y="88" width="3" height="1" fill="#808080"/>
<rect x="1158" y="88" width="3" height="1" fill="#808080"/>
<rect x="1164" y="88" width="3" height="1" fill="#808080"/>
<rect x="1170" y="88" width="3" height="1" fill="#808080"/>
<rect x="1176" y="88" width="3" height="1" fill="#808080"/>
<rect x="1182" y="88" width="3" height="1" fill="#808080"/>
<rect x="1188" y="88" width="3" height="1" fill="#808080"/>
<rect x="1194" y="88" width="3" height="1" fill="#808080"/>
<rect x="1200" y="88" width="3" height="1" fill="#808080"/>
<rect x="1206" y="88" width="3" height="1" fill="#808080"/>
<rect x="1212" y="88" width="3" height="1" fill="#808080"/>
<rect x="1218" y="88" width="3" height="1" fill="#808080"/>
<rect x="1224" y="88" width="3" height="1" fill="#808080"/>
<rect x="1230" y="88" width="3" height="1" fill="#808080"/>
<rect x="1236" y="88" width="3" height="1" fill="#808080"/>
<rect x="1242" y="88" width="3" height="1" fill="#808080"/>
<rect x="1248" y="88" width="3" height="1" fill="#808080"/>
<rect x="1254" y="88" width="3" height="1" fill="#808080"/>
<rect x="1260" y="88" width="3" height="1" fill="#808080"/>
<rect x="1266" y="88" width="3" height="1" fill="#808080"/>
<rect x="1272" y="88" width="3" height="1" fill="#808080"/>
<rect x="1278" y="88" width="3" height="1" fill="#808080"/>
<rect x="1284" y="88" width="3" height="1" fill="#808080"/>
<rect x="1290" y="88" width="3" height="1" fill="#808080"/>
<rect x="1296" y="88" width="3" height="1" fill="#808080"/>
<rect x="1302" y="88" width="3" height="1" fill="#808080"/>
<rect x="1308" y="88" width="3" height="1" fill="#808080"/>
<rect x="1314" y="88" width="3" height="1" fill="#808080"/>
<rect x="1320" y="88" width="3" height="1" fill="#808080"/>
<rect x="1326" y="88" width="3" height="1" fill="#808080"/>
<rect x="1332" y="88" width="3" height="1" fill="#808080"/>
<rect x="738" y="131" width="3" height="1" fill="#808080"/>
<rect x="744" y="131" width="3" height="1" fill="#808080"/>
<rect x="750" y="131" width="3" height="1" fill="#808080"/>
<rect x="756" y="131" width="3" height="1" fill="#808080"/>
<rect x="762" y="131" width="3" height="1" fill="#808080"/>
<rect x="768" y="131" width="3" height="1" fill="#808080"/>
<rect x="774" y="131" width="3" height="1" fill="#808080"/>
<rect x="780" y="131" width="3" height="1" fill="#808080"/>
<rect x="786" y="131" width="3" height="1" fill="#808080"/>
<rect x="792" y="131" width="3" height="1" fill="#808080"/>
<rect x="798" y="131" width="3" height="1" fill="#808080"/>
<rect x="804" y="131" width="3" height="1" fill="#808080"/>
<rect x="810" y="131" width="3" height="1" fill="#808080"/>
<rect x="816" y="131" width="3" height="1" fill="#808080"/>
<rect x="822" y="131" width="3" height="1" fill="#808080"/>
<rect x="828" y="131" width="3" height="1" fill="#808080"/>
<rect x="834" y="131" width="3" height="1" fill="#808080"/>
<rect x="840" y="131" width="3" height="1" fill="#808080"/>
<rect x="846" y="131" width="3" height="1" fill="#808080"/>
<rect x="852" y="131" width="3" height="1" fill="#808080"/>
<rect x="858" y="131" width="3" height="1" fill="#808080"/>
<rect x="864" y="131" width="3" height="1" fill="#808080"/>
<rect x="870" y="131" width="3" height="1" fill="#808080"/>
<rect x="876" y="131" width="3" height="1" fill="#808080"/>
<rect x="882" y="131" width="3" height="1" fill="#808080"/>
<rect x="888" y="131" width="3" height="1" fill="#808080"/>
<rect x="894" y="131" width="3" height="1" fill="#808080"/>
<rect x="900" y="131" width="3" height="1" fill="#808080"/>
<rect x="906" y="131" width="3" height="1" fill="#808080"/>
<rect x="912" y="131" width="3" height="1" fill="#808080"/>
<rect x="918" y="131" width="3" height="1" fill="#808080"/>
<rect x="924" y="131" width="3" height="1" fill="#808080"/>
<rect x="930" y="131" width="3" height="1" fill="#808080"/>
<rect x="936" y="131" width="3" height="1" fill="#808080"/>
<rect x="942" y="131" width="3" height="1" fill="#808080"/>
<rect x="948" y="131" width="3" height="1" fill="#808080"/>
<rect x="954" y="131" width="3" height="1" fill="#808080"/>
<rect x="960" y="131" width="3" height="1" fill="#808080"/>
<rect x="966" y="131" width="3" height="1" fill="#808080"/>
<rect x="972" y="131" width="3" height="1" fill="#808080"/>
<rect x="978" y="131" width="3" height="1" fill="#808080"/>
<rect x="984" y="131" width="3" height="1" fill="#808080"/>
<rect x="990" y="131" width="3" height="1" fill="#808080"/>
<rect x="996" y="131" width="3" height="1" fill="#808080"/>
<rect x="1002" y="131" width="3" height="1" fill="#808080"/>
<rect x="1008" y="131" width="3" height="1" fill="#808080"/>
<rect x="1014" y="131" width="3" height="1" fill="#808080"/>
<rect x="1020" y="131" width="3" height="1" fill="#808080"/>
<rect x="1026" y="131" width="3" height="1" fill="#808080"/>
<rect x="1032" y="131" width="3" height="1" fill="#808080"/>
<rect x="1038" y="131" width="3" height="1" fill="#808080"/>
<rect x="1044" y="131" width="3" height="1" fill="#808080"/>
<rect x="1050" y="131" width="3" height="1" fill="#808080"/>
<rect x="1056" y="131" width="3" height="1" fill="#808080"/>
<rect x="1062" y="131" width="3" height="1" fill="#808080"/>
<rect x="1068" y="131" width="3" height="1" fill="#808080"/>
<rect x="1074" y="131" width="3" height="1" fill="#808080"/>
<rect x="1080" y="131" width="3" height="1" fill="#808080"/>
<rect x="1086" y="131" width="3" height="1" fill="#808080"/>
<rect x="1092" y="131" width="3" height="1" fill="#808080"/>
<rect x="1098" y="131" width="3" height="1" fill="#808080"/>
<rect x="1104" y="131" width="3" height="1" fill="#808080"/>
<rect x="1110" y="131" width="3" height="1" fill="#808080"/>
<rect x="1116" y="131" width="3" height="1" fill="#808080"/>
<rect x="1122" y="131" width="3" height="1" fill="#808080"/>
<rect x="1128" y="131" width="3" height="1" fill="#808080"/>
<rect x="1134" y="131" width="3" height="1" fill="#808080"/>
<rect x="1140" y="131" width="3" height="1" fill="#808080"/>
<rect x="1146" y="131" width="3" height="1" fill="#808080"/>
<rect x="1152" y="131" width="3" height="1" fill="#808080"/>
<rect x="1158" y="131" width="3" height="1" fill="#808080"/>
<rect x="1164" y="131" width="3" height="1" fill="#808080"/>
<rect x="1170" y="131" width="3" height="1" fill="#808080"/>
<rect x="1176" y="131" width="3" height="1" fill="#808080"/>
<rect x="1182" y="131" width="3" height="1" fill="#808080"/>
<rect x="1188" y="131" width="3" height="1" fill="#808080"/>
<rect x="1194" y="131" width="3" height="1" fill="#808080"/>
<rect x="1200" y="131" width="3" height="1" fill="#808080"/>
<rect x="1206" y="131" width="3" height="1" fill="#808080"/>
<rect x="1212" y="131" width="3" height="1" fill="#808080"/>
<rect x="1218" y="131" width="3" height="1" fill="#808080"/>
<rect x="1224" y="131" width="3" height="1" fill="#808080"/>
<rect x="1230" y="131" width="3" height="1" fill="#808080"/>
<rect x="1236" y="131" width="3" height="1" fill="#808080"/>
<rect x="1242" y="131" width="3" height="1" fill="#808080"/>
<rect x="1248" y="131" width="3" height="1" fill="#808080"/>
<rect x="1254" y="131" width="3" height="1" fill="#808080"/>
<rect x="1260" y="131" width="3" height="1" fill="#808080"/>
<rect x="1266" y="131" width="3" height="1" fill="#808080"/>
<rect x="1272" y="131" width="3" height="1" fill="#808080"/>
<rect x="1278" y="131" width="3" height="1" fill="#808080"/>
<rect x="1284" y="131" width="3" height="1" fill="#808080"/>
<rect x="1290" y="131" width="3" height="1" fill="#808080"/>
<rect x="1296" y="131" width="3" height="1" fill="#808080"/>
<rect x="1302" y="131" width="3" height="1" fill="#808080"/>
<rect x="1308" y="131" width="3" height="1" fill="#808080"/>
<rect x="1314" y="131" width="3" height="1" fill="#808080"/>
<rect x="1320" y="131" width="3" height="1" fill="#808080"/>
<rect x="1326" y="131" width="3" height="1" fill="#808080"/>
<rect x="1332" y="131" width="3" height="1" fill="#808080"/>
<rect x="738" y="174" width="3" height="1" fill="#808080"/>
<rect x="744" y="174" width="3" height="1" fill="#808080"/>
<rect x="750" y="174" width="3" height="1" fill="#808080"/>
<rect x="756" y="174" width="3" height="1" fill="#808080"/>
<rect x="762" y="174" width="3" height="1" fill="#808080"/>
<rect x="768" y="174" width="3" height="1" fill="#808080"/>
<rect x="774" y="174" width="3" height="1" fill="#808080"/>
<rect x="780" y="174" width="3" height="1" fill="#808080"/>
<rect x="786" y="174" width="3" height="1" fill="#808080"/>
<rect x="792" y="174" width="3" height="1" fill="#808080"/>
<rect x="798" y="174" width="3" height="1" fill="#808080"/>
<rect x="804" y="174" width="3" height="1" fill="#808080"/>
<rect x="810" y="174" width="3" height="1" fill="#808080"/>
<rect x="816" y="174" width="3" height="1" fill="#808080"/>
<rect x="822" y="174" width="3" height="1" fill="#808080"/>
<rect x="828" y="174" width="3" height="1" fill="#808080"/>
<rect x="834" y="174" width="3" height="1" fill="#808080"/>
<rect x="840" y="174" width="3" height="1" fill="#808080"/>
<rect x="846" y="174" width="3" height="1" fill="#808080"/>
<rect x="852" y="174" width="3" height="1" fill="#808080"/>
<rect x="858" y="174" width="3" height="1" fill="#808080"/>
<rect x="864" y="174" width="3" height="1" fill="#808080"/>
<rect x="870" y="174" width="3" height="1" fill="#808080"/>
<rect x="876" y="174" width="3" height="1" fill="#808080"/>
<rect x="882" y="174" width="3" height="1" fill="#808080"/>
<rect x="888" y="174" width="3" height="1" fill="#808080"/>
<rect x="894" y="174" width="3" height="1" fill="#808080"/>
<rect x="900" y="174" width="3" height="1" fill="#808080"/>
<rect x="906" y="174" width="3" height="1" fill="#808080"/>
<rect x="912" y="174" width="3" height="1" fill="#808080"/>
<rect x="918" y="174" width="3" height="1" fill="#808080"/>
<rect x="924" y="174" width="3" height="1" fill="#808080"/>
<rect x="930" y="174" width="3" height="1" fill="#808080"/>
<rect x="936" y="174" width="3" height="1" fill="#808080"/>
<rect x="942" y="174" width="3" height="1" fill="#808080"/>
<rect x="948" y="174" width="3" height="1" fill="#808080"/>
<rect x="954" y="174" width="3" height="1" fill="#808080"/>
<rect x="960" y="174" width="3" height="1" fill="#808080"/>
<rect x="966" y="174" width="3" height="1" fill="#808080"/>
<rect x="972" y="174" width="3" height="1" fill="#808080"/>
<rect x="978" y="174" width="3" height="1" fill="#808080"/>
<rect x="984" y="174" width="3" height="1" fill="#808080"/>
<rect x="990" y="174" width="3" height="1" fill="#808080"/>
<rect x="996" y="174" width="3" height="1" fill="#808080"/>
<rect x="1002" y="174" width="3" height="1" fill="#808080"/>
<rect x="1008" y="174" width="3" height="1" fill="#808080"/>
<rect x="1014" y="174" width="3" height="1" fill="#808080"/>
<rect x="1020" y="174" width="3" height="1" fill="#808080"/>
<rect x="1026" y="174" width="3" height="1" fill="#808080"/>
<rect x="1032" y="174" width="3" height="1" fill="#808080"/>
<rect x="1038" y="174" width="3" height="1" fill="#808080"/>
<rect x="1044" y="174" width="3" height="1" fill="#808080"/>
<rect x="1050" y="174" width="3" height="1" fill="#808080"/>
<rect x="1056" y="174" width="3" height="1" fill="#808080"/>
<rect x="1062" y="174" width="3" height="1" fill="#808080"/>
<rect x="1068" y="174" width="3" height="1" fill="#808080"/>
<rect x="1074" y="174" width="3" height="1" fill="#808080"/>
<rect x="1080" y="174" width="3" height="1" fill="#808080"/>
<rect x="1086" y="174" width="3" height="1" fill="#808080"/>
<rect x="1092" y="174" width="3" height="1" fill="#808080"/>
<rect x="1098" y="174" width="3" height="1" fill="#808080"/>
<rect x="1104" y="174" width="3" height="1" fill="#808080"/>
<rect x="1110" y="174" width="3" height="1" fill="#808080"/>
<rect x="1116" y="174" width="3" height="1" fill="#808080"/>
<rect x="1122" y="174" width="3" height="1" fill="#808080"/>
<rect x="1128" y="174" width="3" height="1" fill="#808080"/>
<rect x="1134" y="174" width="3" height="1" fill="#808080"/>
<rect x="1140" y="174" width="3" height="1" fill="#808080"/>
<rect x="1146" y="174" width="3" height="1" fill="#808080"/>
<rect x="1152" y="174" width="3" height="1" fill="#808080"/>
<rect x="1158" y="174" width="3" height="1" fill="#808080"/>
<rect x="1164" y="174" width="3" height="1" fill="#808080"/>
<rect x="1170" y="174" width="3" height="1" fill="#808080"/>
<rect x="1176" y="174" width="3" height="1" fill="#808080"/>
<rect x="1182" y="174" width="3" height="1" fill="#808080"/>
<rect x="1188" y="174" width="3" height="1" fill="#808080"/>
<rect x="1194" y="174" width="3" height="1" fill="#808080"/>
<rect x="1200" y="174" width="3" height="1" fill="#808080"/>
<rect x="1206" y="174" width="3" height="1" fill="#808080"/>
<rect x="1212" y="174" width="3" height="1" fill="#808080"/>
<rect x="1218" y="174" width="3" height="1" fill="#808080"/>
<rect x="1224" y="174" width="3" height="1" fill="#808080"/>
<rect x="1230" y="174" width="3" height="1" fill="#808080"/>
<rect x="1236" y="174" width="3" height="1" fill="#808080"/>
<rect x="1242" y="174" width="3" height="1" fill="#808080"/>
<rect x="1248" y="174" width="3" height="1" fill="#808080"/>
<rect x="1254" y="174" width="3" height="1" fill="#808080"/>
<rect x="1260" y="174" width="3" height="1" fill="#808080"/>
<rect x="1266" y="174" width="3" height="1" fill="#808080"/>
<rect x="1272" y="174" width="3" height="1" fill="#808080"/>
<rect x="1278" y="174" width="3" height="1" fill="#808080"/>
<rect x="1284" y="174" width="3" height="1" fill="#808080"/>
<rect x="1290" y="174" width="3" height="1" fill="#808080"/>
<rect x="1296" y="174" width="3" height="1" fill="#808080"/>
<rect x="1302" y="174" width="3" height="1" fill="#808080"/>
<rect x="1308" y="174" width="3" height="1" fill="#808080"/>
<rect x="1314" y="174" width="3" height="1" fill="#808080"/>
<rect x="1320" y="174" width="3" height="1" fill="#808080"/>
<rect x="1326" y="174" width="3" height="1" fill="#808080"/>
<rect x="1332" y="174" width="3" height="1" fill="#808080"/>
<rect x="738" y="218" width="3" height="1" fill="#808080"/>
<rect x="744" y="218" width="3" height="1" fill="#808080"/>
<rect x="750" y="218" width="3" height="1" fill="#808080"/>
<rect x="756" y="218" width="3" height="1" fill="#808080"/>
<rect x="762" y="218" width="3" height="1" fill="#808080"/>
<rect x="768" y="218" width="3" height="1" fill="#808080"/>
<rect x="774" y="218" width="3" height="1" fill="#808080"/>
<rect x="780" y="218" width="3" height="1" fill="#808080"/>
<rect x="786" y="218" width="3" height="1" fill="#808080"/>
<rect x="792" y="218" width="3" height="1" fill="#808080"/>
<rect x="798" y="218" width="3" height="1" fill="#808080"/>
<rect x="804" y="218" width="3" height="1" fill="#808080"/>
<rect x="810" y="218" width="3" height="1" fill="#808080"/>
<rect x="816" y="218" width="3" height="1" fill="#808080"/>
<rect x="822" y="218" width="3" height="1" fill="#808080"/>
<rect x="828" y="218" width="3" height="1" fill="#808080"/>
<rect x="834" y="218" width="3" height="1" fill="#808080"/>
<rect x="840" y="218" width="3" height="1" fill="#808080"/>
<rect x="846" y="218" width="3" height="1" fill="#808080"/>
<rect x="852" y="218" width="3" height="1" fill="#808080"/>
<rect x="858" y="218" width="3" height="1" fill="#808080"/>
<rect x="864" y="218" width="3" height="1" fill="#808080"/>
<rect x="870" y="218" width="3" height="1" fill="#808080"/>
<rect x="876" y="218" width="3" height="1" fill="#808080"/>
<rect x="882" y="218" width="3" height="1" fill="#808080"/>
<rect x="888" y="218" width="3" height="1" fill="#808080"/>
<rect x="894" y="218" width="3" height="1" fill="#808080"/>
<rect x="900" y="218" width="3" height="1" fill="#808080"/>
<rect x="906" y="218" width="3" height="1" fill="#808080"/>
<rect x="912" y="218" width="3" height="1" fill="#808080"/>
<rect x="918" y="218" width="3" height="1" fill="#808080"/>
<rect x="924" y="218" width="3" height="1" fill="#808080"/>
<rect x="930" y="218" width="3" height="1" fill="#808080"/>
<rect x="936" y="218" width="3" height="1" fill="#808080"/>
<rect x="942" y="218" width="3" height="1" fill="#808080"/>
<rect x="948" y="218" width="3" height="1" fill="#808080"/>
<rect x="954" y="218" width="3" height="1" fill="#808080"/>
<rect x="960" y="218" width="3" height="1" fill="#808080"/>
<rect x="966" y="218" width="3" height="1" fill="#808080"/>
<rect x="972" y="218" width="3" height="1" fill="#808080"/>
<rect x="978" y="218" width="3" height="1" fill="#808080"/>
<rect x="984" y="218" width="3" height="1" fill="#808080"/>
<rect x="990" y="218" width="3" height="1" fill="#808080"/>
<rect x="996" y="218" width="3" height="1" fill="#808080"/>
<rect x="1002" y="218" width="3" height="1" fill="#808080"/>
<rect x="1008" y="218" width="3" height="1" fill="#808080"/>
<rect x="1014" y="218" width="3" height="1" fill="#808080"/>
<rect x="1020" y="218" width="3" height="1" fill="#808080"/>
<rect x="1026" y="218" width="3" height="1" fill="#808080"/>
<rect x="1032" y="218" width="3" height="1" fill="#808080"/>
<rect x="1038" y="218" width="3" height="1" fill="#808080"/>
<rect x="1044" y="218" width="3" height="1" fill="#808080"/>
<rect x="1050" y="218" width="3" height="1" fill="#808080"/>
<rect x="1056" y="218" width="3" height="1" fill="#808080"/>
<rect x="1062" y="218" width="3" height="1" fill="#808080"/>
<rect x="1068" y="218" width="3" height="1" fill="#808080"/>
<rect x="1074" y="218" width="3" height="1" fill="#808080"/>
<rect x="1080" y="218" width="3" height="1" fill="#808080"/>
<rect x="1086" y="218" width="3" height="1" fill="#808080"/>
<rect x="1092" y="218" width="3" height="1" fill="#808080"/>
<rect x="1098" y="218" width="3" height="1" fill="#808080"/>
<rect x="1104" y="218" width="3" height="1" fill="#808080"/>
<rect x="1110" y="218" width="3" height="1" fill="#808080"/>
<rect x="1116" y="218" width="3" height="1" fill="#808080"/>
<rect x="1122" y="218" width="3" height="1" fill="#808080"/>
<rect x="1128" y="218" width="3" height="1" fill="#808080"/>
<rect x="1134" y="218" width="3" height="1" fill="#808080"/>
<rect x="1140" y="218" width="3" height="1" fill="#808080"/>
<rect x="1146" y="218" width="3" height="1" fill="#808080"/>
<rect x="1152" y="218" width="3" height="1" fill="#808080"/>
<rect x="1158" y="218" width="3" height="1" fill="#808080"/>
<rect x="1164" y="218" width="3" height="1" fill="#808080"/>
<rect x="1170" y="218" width="3" height="1" fill="#808080"/>
<rect x="1176" y="218" width="3" height="1" fill="#808080"/>
<rect x="1182" y="218" width="3" height="1" fill="#808080"/>
<rect x="1188" y="218" width="3" height="1" fill="#808080"/>
<rect x="1194" y="218" width="3" height="1" fill="#808080"/>
<rect x="1200" y="218" width="3" height="1" fill="#808080"/>
<rect x="1206" y="218" width="3" height="1" fill="#808080"/>
<rect x="1212" y="218" width="3" height="1" fill="#808080"/>
<rect x="1218" y="218" width="3" height="1" fill="#808080"/>
<rect x="1224" y="218" width="3" height="1" fill="#808080"/>
<rect x="1230" y="218" width="3" height="1" fill="#808080"/>
<rect x="1236" y="218" width="3" height="1" fill="#808080"/>
<rect x="1242" y="218" width="3" height="1" fill="#808080"/>
<rect x="1248" y="218" width="3" height="1" fill="#808080"/>
<rect x="1254" y="218" width="3" height="1" fill="#808080"/>
<rect x="1260" y="218" width="3" height="1" fill="#808080"/>
<rect x="1266" y="218" width="3" height="1" fill="#808080"/>
<rect x="1272" y="218" width="3" height="1" fill="#808080"/>
<rect x="1278" y="218" width="3" height="1" fill="#808080"/>
<rect x="1284" y="218" width="3" height="1" fill="#808080"/>
<rect x="1290" y="218" width="3" height="1" fill="#808080"/>
<rect x="1296" y="218" width="3" height="1" fill="#808080"/>
<rect x="1302" y="218" width="3" height="1" fill="#808080"/>
<rect x="1308" y="218" width="3" height="1" fill="#808080"/>
<rect x="1314" y="218" width="3" height="1" fill="#808080"/>
<rect x="1320" y="218" width="3" height="1" fill="#808080"/>
<rect x="1326" y="218" width="3" height="1" fill="#808080"/>
<rect x="1332" y="218" width="3" height="1" fill="#808080"/>
<rect x="738" y="261" width="3" height="1" fill="#808080"/>
<rect x="744" y="261" width="3" height="1" fill="#808080"/>
<rect x="750" y="261" width="3" height="1" fill="#808080"/>
<rect x="756" y="261" width="3" height="1" fill="#808080"/>
<rect x="762" y="261" width="3" height="1" fill="#808080"/>
<rect x="768" y="261" width="3" height="1" fill="#808080"/>
<rect x="774" y="261" width="3" height="1" fill="#808080"/>
<rect x="780" y="261" width="3" height="1" fill="#808080"/>
<rect x="786" y="261" width="3" height="1" fill="#808080"/>
<rect x="792" y="261" width="3" height="1" fill="#808080"/>
<rect x="798" y="261" width="3" height="1" fill="#808080"/>
<rect x="804" y="261" width="3" height="1" fill="#808080"/>
<rect x="810" y="261" width="3" height="1" fill="#808080"/>
<rect x="816" y="261" width="3" height="1" fill="#808080"/>
<rect x="822" y="261" width="3" height="1" fill="#808080"/>
<rect x="828" y="261" width="3" height="1" fill="#808080"/>
<rect x="834" y="261" width="3" height="1" fill="#808080"/>
<rect x="840" y="261" width="3" height="1" fill="#808080"/>
<rect x="846" y="261" width="3" height="1" fill="#808080"/>
<rect x="852" y="261" width="3" height="1" fill="#808080"/>
<rect x="858" y="261" width="3" height="1" fill="#808080"/>
<rect x="864" y="261" width="3" height="1" fill="#808080"/>
<rect x="870" y="261" width="3" height="1" fill="#808080"/>
<rect x="876" y="261" width="3" height="1" fill="#808080"/>
<rect x="882" y="261" width="3" height="1" fill="#808080"/>
<rect x="888" y="261" width="3" height="1" fill="#808080"/>
<rect x="894" y="261" width="3" height="1" fill="#808080"/>
<rect x="900" y="261" width="3" height="1" fill="#808080"/>
<rect x="906" y="261" width="3" height="1" fill="#808080"/>
<rect x="912" y="261" width="3" height="1" fill="#808080"/>
<rect x="918" y="261" width="3" height="1" fill="#808080"/>
<rect x="924" y="261" width="3" height="1" fill="#808080"/>
<rect x="930" y="261" width="3" height="1" fill="#808080"/>
<rect x="936" y="261" width="3" height="1" fill="#808080"/>
<rect x="942" y="261" width="3" height="1" fill="#808080"/>
<rect x="948" y="261" width="3" height="1" fill="#808080"/>
<rect x="954" y="261" width="3" height="1" fill="#808080"/>
<rect x="960" y="261" width="3" height="1" fill="#808080"/>
<rect x="966" y="261" width="3" height="1" fill="#808080"/>
<rect x="972" y="261" width="3" height="1" fill="#808080"/>
<rect x="978" y="261" width="3" height="1" fill="#808080"/>
<rect x="984" y="261" width="3" height="1" fill="#808080"/>
<rect x="990" y="261" width="3" height="1" fill="#808080"/>
<rect x="996" y="261" width="3" height="1" fill="#808080"/>
<rect x="1002" y="261" width="3" height="1" fill="#808080"/>
<rect x="1008" y="261" width="3" height="1" fill="#808080"/>
<rect x="1014" y="261" width="3" height="1" fill="#808080"/>
<rect x="1020" y="261" width="3" height="1" fill="#808080"/>
<rect x="1026" y="261" width="3" height="1" fill="#808080"/>
<rect x="1032" y="261" width="3" height="1" fill="#808080"/>
<rect x="1038" y="261" width="3" height="1" fill="#808080"/>
<rect x="1044" y="261" width="3" height="1" fill="#808080"/>
<rect x="1050" y="261" width="3" height="1" fill="#808080"/>
<rect x="1056" y="261" width="3" height="1" fill="#808080"/>
<rect x="1062" y="261" width="3" height="1" fill="#808080"/>
<rect x="1068" y="261" width="3" height="1" fill="#808080"/>
<rect x="1074" y="261" width="3" height="1" fill="#808080"/>
<rect x="1080" y="261" width="3" height="1" fill="#808080"/>
<rect x="1086" y="261" width="3" height="1" fill="#808080"/>
<rect x="1092" y="261" width="3" height="1" fill="#808080"/>
<rect x="1098" y="261" width="3" height="1" fill="#808080"/>
<rect x="1104" y="261" width="3" height="1" fill="#808080"/>
<rect x="1110" y="261" width="3" height="1" fill="#808080"/>
<rect x="1116" y="261" width="3" height="1" fill="#808080"/>
<rect x="1122" y="261" width="3" height="1" fill="#808080"/>
<rect x="1128" y="261" width="3" height="1" fill="#808080"/>
<rect x="1134" y="261" width="3" height="1" fill="#808080"/>
<rect x="1140" y="261" width="3" height="1" fill="#808080"/>
<rect x="1146" y="261" width="3" height="1" fill="#808080"/>
<rect x="1152" y="261" width="3" height="1" fill="#808080"/>
<rect x="1158" y="261" width="3" height="1" fill="#808080"/>
<rect x="1164" y="261" width="3" height="1" fill="#808080"/>
<rect x="1170" y="261" width="3" height="1" fill="#808080"/>
<rect x="1176" y="261" width="3" height="1" fill="#808080"/>
<rect x="1182" y="261" width="3" height="1" fill="#808080"/>
<rect x="1188" y="261" width="3" height="1" fill="#808080"/>
<rect x="1194" y="261" width="3" height="1" fill="#808080"/>
<rect x="1200" y="261" width="3" height="1" fill="#808080"/>
<rect x="1206" y="261" width="3" height="1" fill="#808080"/>
<rect x="1212" y="261" width="3" height="1" fill="#808080"/>
<rect x="1218" y="261" width="3" height="1" fill="#808080"/>
<rect x="1224" y="261" width="3" height="1" fill="#808080"/>
<rect x="1230" y="261" width="3" height="1" fill="#808080"/>
<rect x="1236" y="261" width="3" height="1" fill="#808080"/>
<rect x="1242" y="261" width="3" height="1" fill="#808080"/>
<rect x="1248" y="261" width="3" height="1" fill="#808080"/>
<rect x="1254" y="261" width="3" height="1" fill="#808080"/>
<rect x="1260" y="261" width="3" height="1" fill="#808080"/>
<rect x="1266" y="261" width="3" height="1" fill="#808080"/>
<rect x="1272" y="261" width="3" height="1" fill="#808080"/>
<rect x="1278" y="261" width="3" height="1" fill="#808080"/>
<rect x="1284" y="261" width="3" height="1" fill="#808080"/>
<rect x="1290" y="261" width="3" height="1" fill="#808080"/>
<rect x="1296" y="261" width="3" height="1" fill="#808080"/>
<rect x="1302" y="261" width="3" height="1" fill="#808080"/>
<rect x="1308" y="261" width="3" height="1" fill="#808080"/>
<rect x="1314" y="261" width="3" height="1" fill="#808080"/>
<rect x="1320" y="261" width="3" height="1" fill="#808080"/>
<rect x="1326" y="261" width="3" height="1" fill="#808080"/>
<rect x="1332" y="261" width="3" height="1" fill="#808080"/>
<rect x="806" y="46" width="1" height="1" fill="#808080"/>
<rect x="806" y="50" width="1" height="3" fill="#808080"/>
<rect x="806" y="56" width="1" height="3" fill="#808080"/>
<rect x="806" y="62" width="1" height="3" fill="#808080"/>
<rect x="806" y="68" width="1" height="3" fill="#808080"/>
<rect x="806" y="74" width="1" height="3" fill="#808080"/>
<rect x="806" y="80" width="1" height="3" fill="#808080"/>
<rect x="806" y="86" width="1" height="3" fill="#808080"/>
<rect x="806" y="92" width="1" height="3" fill="#808080"/>
<rect x="806" y="98" width="1" height="3" fill="#808080"/>
<rect x="806" y="104" width="1" height="3" fill="#808080"/>
<rect x="806" y="110" width="1" height="3" fill="#808080"/>
<rect x="806" y="116" width="1" height="3" fill="#808080"/>
<rect x="806" y="122" width="1" height="3" fill="#808080"/>
<rect x="806" y="128" width="1" height="3" fill="#808080"/>
<rect x="806" y="134" width="1" height="3" fill="#808080"/>
<rect x="806" y="140" width="1" height="3" fill="#808080"/>
<rect x="806" y="146" width="1" height="3" fill="#808080"/>
<rect x="806" y="152" width="1" height="3" fill="#808080"/>
<rect x="806" y="158" width="1" height="3" fill="#808080"/>
<rect x="806" y="164" width="1" height="3" fill="#808080"/>
<rect x="806" y="170" width="1" height="3" fill="#808080"/>
<rect x="806" y="176" width="1" height="3" fill="#808080"/>
<rect x="806" y="182" width="1" height="3" fill="#808080"/>
<rect x="806" y="188" width="1" height="3" fill="#808080"/>
<rect x="806" y="194" width="1" height="3" fill="#808080"/>
<rect x="806" y="200" width="1" height="3" fill="#808080"/>
<rect x="806" y="206" width="1" height="3" fill="#808080"/>
<rect x="806" y="212" width="1" height="3" fill="#808080"/>
<rect x="806" y="218" width="1" height="3" fill="#808080"/>
<rect x="806" y="224" width="1" height="3" fill="#808080"/>
<rect x="806" y="230" width="1" height="3" fill="#808080"/>
<rect x="806" y="236" width="1" height="3" fill="#808080"/>
<rect x="806" y="242" width="1" height="3" fill="#808080"/>
<rect x="806" y="248" width="1" height="3" fill="#808080"/>
<rect x="806" y="254" width="1" height="3" fill="#808080"/>
<rect x="806" y="260" width="1" height="3" fill="#808080"/>
<rect x="806" y="266" width="1" height="3" fill="#808080"/>
<rect x="806" y="272" width="1" height="3" fill="#808080"/>
<rect x="806" y="278" width="1" height="3" fill="#808080"/>
<rect x="806" y="284" width="1" height="3" fill="#808080"/>
<rect x="806" y="290" width="1" height="3" fill="#808080"/>
<rect x="806" y="296" width="1" height="3" fill="#808080"/>
<rect x="806" y="302" width="1" height="2" fill="#808080"/>
<rect x="875" y="46" width="1" height="1" fill="#808080"/>
<rect x="875" y="50" width="1" height="3" fill="#808080"/>
<rect x="875" y="56" width="1" height="3" fill="#808080"/>
<rect x="875" y="62" width="1" height="3" fill="#808080"/>
<rect x="875" y="68" width="1" height="3" fill="#808080"/>
<rect x="875" y="74" width="1" height="3" fill="#808080"/>
<rect x="875" y="80" width="1" height="3" fill="#808080"/>
<rect x="875" y="86" width="1" height="3" fill="#808080"/>
<rect x="875" y="92" width="1" height="3" fill="#808080"/>
<rect x="875" y="98" width="1" height="3" fill="#808080"/>
<rect x="875" y="104" width="1" height="3" fill="#808080"/>
<rect x="875" y="110" width="1" height="3" fill="#808080"/>
<rect x="875" y="116" width="1" height="3" fill="#808080"/>
<rect x="875" y="122" width="1" height="3" fill="#808080"/>
<rect x="875" y="128" width="1" height="3" fill="#808080"/>
<rect x="875" y="134" width="1" height="3" fill="#808080"/>
<rect x="875" y="140" width="1" height="3" fill="#808080"/>
<rect x="875" y="146" width="1" height="3" fill="#808080"/>
<rect x="875" y="152" width="1" height="3" fill="#808080"/>
<rect x="875" y="158" width="1" height="3" fill="#808080"/>
<rect x="875" y="164" width="1" height="3" fill="#808080"/>
<rect x="875" y="170" width="1" height="3" fill="#808080"/>
<rect x="875" y="176" width="1" height="3" fill="#808080"/>
<rect x="875" y="182" width="1" height="3" fill="#808080"/>
<rect x="875" y="188" width="1" height="3" fill="#808080"/>
<rect x="875" y="194" width="1" height="3" fill="#808080"/>
<rect x="875" y="200" width="1" height="3" fill="#808080"/>
<rect x="875" y="206" width="1" height="3" fill="#808080"/>
<rect x="875" y="212" width="1" height="3" fill="#808080"/>
<rect x="875" y="218" width="1" height="3" fill="#808080"/>
<rect x="875" y="224" width="1" height="3" fill="#808080"/>
<rect x="875" y="230" width="1" height="3" fill="#808080"/>
<rect x="875" y="236" width="1" height="3" fill="#808080"/>
<rect x="875" y="242" width="1" height="3" fill="#808080"/>
<rect x="875" y="248" width="1" height="3" fill="#808080"/>
<rect x="875" y="254" width="1" height="3" fill="#808080"/>
<rect x="875" y="260" width="1" height="3" fill="#808080"/>
<rect x="875" y="266" width="1" height="3" fill="#808080"/>
<rect x="875" y="272" width="1" height="3" fill="#808080"/>
<rect x="875" y="278" width="1" height="3" fill="#808080"/>
<rect x="875" y="284" width="1" height="3" fill="#808080"/>
<rect x="875" y="290" width="1" height="3" fill="#808080"/>
<rect x="875" y="296" width="1" height="3" fill="#808080"/>
<rect x="875" y="302" width="1" height="2" fill="#808080"/>
<rect x="943" y="46" width="1" height="1" fill="#808080"/>
<rect x="943" y="50" width="1" height="3" fill="#808080"/>
<rect x="943" y="56" width="1" height="3" fill="#808080"/>
<rect x="943" y="62" width="1" height="3" fill="#808080"/>
<rect x="943" y="68" width="1" height="3" fill="#808080"/>
<rect x="943" y="74" width="1" height="3" fill="#808080"/>
<rect x="943" y="80" width="1" height="3" fill="#808080"/>
<rect x="943" y="86" width="1" height="3" fill="#808080"/>
<rect x="943" y="92" width="1" height="3" fill="#808080"/>
<rect x="943" y="98" width="1" height="3" fill="#808080"/>
<rect x="943" y="104" width="1" height="3" fill="#808080"/>
<rect x="943" y="110" width="1" height="3" fill="#808080"/>
<rect x="943" y="116" width="1" height="3" fill="#808080"/>
<rect x="943" y="122" width="1" height="3" fill="#808080"/>
<rect x="943" y="128" width="1" height="3" fill="#808080"/>
<rect x="943" y="134" width="1" height="3" fill="#808080"/>
<rect x="943" y="140" width="1" height="3" fill="#808080"/>
<rect x="943" y="146" width="1" height="3" fill="#808080"/>
<rect x="943" y="152" width="1" height="3" fill="#808080"/>
<rect x="943" y="158" width="1" height="3" fill="#808080"/>
<rect x="943" y="164" width="1" height="3" fill="#808080"/>
<rect x="943" y="170" width="1" height="3" fill="#808080"/>
<rect x="943" y="176" width="1" height="3" fill="#808080"/>
<rect x="943" y="182" width="1" height="3" fill="#808080"/>
<rect x="943" y="188" width="1" height="3" fill="#808080"/>
<rect x="943" y="194" width="1" height="3" fill="#808080"/>
<rect x="943" y="200" width="1" height="3" fill="#808080"/>
<rect x="943" y="206" width="1" height="3" fill="#808080"/>
<rect x="943" y="212" width="1" height="3" fill="#808080"/>
<rect x="943" y="218" width="1" height="3" fill="#808080"/>
<rect x="943" y="224" width="1" height="3" fill="#808080"/>
<rect x="943" y="230" width="1" height="3" fill="#808080"/>
<rect x="943" y="236" width="1" height="3" fill="#808080"/>
<rect x="943" y="242" width="1" height="3" fill="#808080"/>
<rect x="943" y="248" width="1" height="3" fill="#808080"/>
<rect x="943" y="254" width="1" height="3" fill="#808080"/>
<rect x="943" y="260" width="1" height="3" fill="#808080"/>
<rect x="943" y="266" width="1" height="3" fill="#808080"/>
<rect x="943" y="272" width="1" height="3" fill="#808080"/>
<rect x="943" y="278" width="1" height="3" fill="#808080"/>
<rect x="943" y="284" width="1" height="3" fill="#808080"/>
<rect x="943" y="290" width="1" height="3" fill="#808080"/>
<rect x="943" y="296" width="1" height="3" fill="#808080"/>
<rect x="943" y="302" width="1" height="2" fill="#808080"/>
<rect x="1012" y="46" width="1" height="1" fill="#808080"/>
<rect x="1012" y="50" width="1" height="3" fill="#808080"/>
<rect x="1012" y="56" width="1" height="3" fill="#808080"/>
<rect x="1012" y="62" width="1" height="3" fill="#808080"/>
<rect x="1012" y="68" width="1" height="3" fill="#808080"/>
<rect x="1012" y="74" width="1" height="3" fill="#808080"/>
<rect x="1012" y="80" width="1" height="3" fill="#808080"/>
<rect x="1012" y="86" width="1" height="3" fill="#808080"/>
<rect x="1012" y="92" width="1" height="3" fill="#808080"/>
<rect x="1012" y="98" width="1" height="3" fill="#808080"/>
<rect x="1012" y="104" width="1" height="3" fill="#808080"/>
<rect x="1012" y="110" width="1" height="3" fill="#808080"/>
<rect x="1012" y="116" width="1" height="3" fill="#808080"/>
<rect x="1012" y="122" width="1" height="3" fill="#808080"/>
<rect x="1012" y="128" width="1" height="3" fill="#808080"/>
<rect x="1012" y="134" width="1" height="3" fill="#808080"/>
<rect x="1012" y="140" width="1" height="3" fill="#808080"/>
<rect x="1012" y="146" width="1" height="3" fill="#808080"/>
<rect x="1012" y="152" width="1" height="3" fill="#808080"/>
<rect x="1012" y="158" width="1" height="3" fill="#808080"/>
<rect x="1012" y="164" width="1" height="3" fill="#808080"/>
<rect x="1012" y="170" width="1" height="3" fill="#808080"/>
<rect x="1012" y="176" width="1" height="3" fill="#808080"/>
<rect x="1012" y="182" width="1" height="3" fill="#808080"/>
<rect x="1012" y="188" width="1" height="3" fill="#808080"/>
<rect x="1012" y="194" width="1" height="3" fill="#808080"/>
<rect x="1012" y="200" width="1" height="3" fill="#808080"/>
<rect x="1012" y="206" width="1" height="3" fill="#808080"/>
<rect x="1012" y="212" width="1" height="3" fill="#808080"/>
<rect x="1012" y="218" width="1" height="3" fill="#808080"/>
<rect x="1012" y="224" width="1" height="3" fill="#808080"/>
<rect x="1012" y="230" width="1" height="3" fill="#808080"/>
<rect x="1012" y="236" width="1" height="3" fill="#808080"/>
<rect x="1012" y="242" width="1" height="3" fill="#808080"/>
<rect x="1012" y="248" width="1" height="3" fill="#808080"/>
<rect x="1012" y="254" width="1" height="3" fill="#808080"/>
<rect x="1012" y="260" width="1" height="3" fill="#808080"/>
<rect x="1012" y="266" width="1" height="3" fill="#808080"/>
<rect x="1012" y="272" width="1" height="3" fill="#808080"/>
<rect x="1012" y="278" width="1" height="3" fill="#808080"/>
<rect x="1012" y="284" width="1" height="3" fill="#808080"/>
<rect x="1012" y="290" width="1" height="3" fill="#808080"/>
<rect x="1012" y="296" width="1" height="3" fill="#808080"/>
<rect x="1012" y="302" width="1" height="2" fill="#808080"/>
<rect x="1080" y="46" width="1" height="1" fill="#808080"/>
<rect x="1080" y="50" width="1" height="3" fill="#808080"/>
<rect x="1080" y="56" width="1" height="3" fill="#808080"/>
<rect x="1080" y="62" width="1" height="3" fill="#808080"/>
<rect x="1080" y="68" width="1" height="3" fill="#808080"/>
<rect x="1080" y="74" width="1" height="3" fill="#808080"/>
<rect x="1080" y="80" width="1" height="3" fill="#808080"/>
<rect x="1080" y="86" width="1" height="3" fill="#808080"/>
<rect x="1080" y="92" width="1" height="3" fill="#808080"/>
<rect x="1080" y="98" width="1" height="3" fill="#808080"/>
<rect x="1080" y="104" width="1" height="3" fill="#808080"/>
<rect x="1080" y="110" width="1" height="3" fill="#808080"/>
<rect x="1080" y="116" width="1" height="3" fill="#808080"/>
<rect x="1080" y="122" width="1" height="3" fill="#808080"/>
<rect x="1080" y="128" width="1" height="3" fill="#808080"/>
<rect x="1080" y="134" width="1" height="3" fill="#808080"/>
<rect x="1080" y="140" width="1" height="3" fill="#808080"/>
<rect x="1080" y="146" width="1" height="3" fill="#808080"/>
<rect x="1080" y="152" width="1" height="3" fill="#808080"/>
<rect x="1080" y="158" width="1" height="3" fill="#808080"/>
<rect x="1080" y="164" width="1" height="3" fill="#808080"/>
<rect x="1080" y="170" width="1" height="3" fill="#808080"/>
<rect x="1080" y="176" width="1" height="3" fill="#808080"/>
<rect x="1080" y="182" width="1" height="3" fill="#808080"/>
<rect x="1080" y="188" width="1" height="3" fill="#808080"/>
<rect x="1080" y="194" width="1" height="3" fill="#808080"/>
<rect x="1080" y="200" width="1" height="3" fill="#808080"/>
<rect x="1080" y="206" width="1" height="3" fill="#808080"/>
<rect x="1080" y="212" width="1" height="3" fill="#808080"/>
<rect x="1080" y="218" width="1" height="3" fill="#808080"/>
<rect x="1080" y="224" width="1" height="3" fill="#808080"/>
<rect x="1080" y="230" width="1" height="3" fill="#808080"/>
<rect x="1080" y="236" width="1" height="3" fill="#808080"/>
<rect x="1080" y="242" width="1" height="3" fill="#808080"/>
<rect x="1080" y="248" width="1" height="3" fill="#808080"/>
<rect x="1080" y="254" width="1" height="3" fill="#808080"/>
<rect x="1080" y="260" width="1" height="3" fill="#808080"/>
<rect x="1080" y="266" width="1" height="3" fill="#808080"/>
<rect x="1080" y="272" width="1" height="3" fill="#808080"/>
<rect x="1080" y="278" width="1" height="3" fill="#808080"/>
<rect x="1080" y="284" width="1" height="3" fill="#808080"/>
<rect x="1080" y="290" width="1" height="3" fill="#808080"/>
<rect x="1080" y="296" width="1" height="3" fill="#808080"/>
<rect x="1080" y="302" width="1" height="2" fill="#808080"/>
<rect x="1149" y="46" width="1" height="1" fill="#808080"/>
<rect x="1149" y="50" width="1" height="3" fill="#808080"/>
<rect x="1149" y="56" width="1" height="3" fill="#808080"/>
<rect x="1149" y="62" width="1" height="3" fill="#808080"/>
<rect x="1149" y="68" width="1" height="3" fill="#808080"/>
<rect x="1149" y="74" width="1" height="3" fill="#808080"/>
<rect x="1149" y="80" width="1" height="3" fill="#808080"/>
<rect x="1149" y="86" width="1" height="3" fill="#808080"/>
<rect x="1149" y="92" width="1" height="3" fill="#808080"/>
<rect x="1149" y="98" width="1" height="3" fill="#808080"/>
<rect x="1149" y="104" width="1" height="3" fill="#808080"/>
<rect x="1149" y="110" width="1" height="3" fill="#808080"/>
<rect x="1149" y="116" width="1" height="3" fill="#808080"/>
<rect x="1149" y="122" width="1" height="3" fill="#808080"/>
<rect x="1149" y="128" width="1" height="3" fill="#808080"/>
<rect x="1149" y="134" width="1" height="3" fill="#808080"/>
<rect x="1149" y="140" width="1" height="3" fill="#808080"/>
<rect x="1149" y="146" width="1" height="3" fill="#808080"/>
<rect x="1149" y="152" width="1" height="3" fill="#808080"/>
<rect x="1149" y="158" width="1" height="3" fill="#808080"/>
<rect x="1149" y="164" width="1" height="3" fill="#808080"/>
<rect x="1149" y="170" width="1" height="3" fill="#808080"/>
<rect x="1149" y="176" width="1" height="3" fill="#808080"/>
<rect x="1149" y="182" width="1" height="3" fill="#808080"/>
<rect x="1149" y="188" width="1" height="3" fill="#808080"/>
<rect x="1149" y="194" width="1" height="3" fill="#808080"/>
<rect x="1149" y="200" width="1" height="3" fill="#808080"/>
<rect x="1149" y="206" width="1" height="3" fill="#808080"/>
<rect x="1149" y="212" width="1" height="3" fill="#808080"/>
<rect x="1149" y="218" width="1" height="3" fill="#808080"/>
<rect x="1149" y="224" width="1" height="3" fill="#808080"/>
<rect x="1149" y="230" width="1" height="3" fill="#808080"/>
<rect x="1149" y="236" width="1" height="3" fill="#808080"/>
<rect x="1149" y="242" width="1" height="3" fill="#808080"/>
<rect x="1149" y="248" width="1" height="3" fill="#808080"/>
<rect x="1149" y="254" width="1" height="3" fill="#808080"/>
<rect x="1149" y="260" width="1" height="3" fill="#808080"/>
<rect x="1149" y="266" width="1" height="3" fill="#808080"/>
<rect x="1149" y="272" width="1" height="3" fill="#808080"/>
<rect x="1149" y="278" width="1" height="3" fill="#808080"/>
<rect x="1149" y="284" width="1" height="3" fill="#808080"/>
<rect x="1149" y="290" width="1" height="3" fill="#808080"/>
<rect x="1149" y="296" width="1" height="3" fill="#808080"/>
<rect x="1149" y="302" width="1" height="2" fill="#808080"/>
<rect x="1217" y="46" width="1" height="1" fill="#808080"/>
<rect x="1217" y="50" width="1" height="3" fill="#808080"/>
<rect x="1217" y="56" width="1" height="3" fill="#808080"/>
<rect x="1217" y="62" width="1" height="3" fill="#808080"/>
<rect x="1217" y="68" width="1" height="3" fill="#808080"/>
<rect x="1217" y="74" width="1" height="3" fill="#808080"/>
<rect x="1217" y="80" width="1" height="3" fill="#808080"/>
<rect x="1217" y="86" width="1" height="3" fill="#808080"/>
<rect x="1217" y="92" width="1" height="3" fill="#808080"/>
<rect x="1217" y="98" width="1" height="3" fill="#808080"/>
<rect x="1217" y="104" width="1" height="3" fill="#808080"/>
<rect x="1217" y="110" width="1" height="3" fill="#808080"/>
<rect x="1217" y="116" width="1" height="3" fill="#808080"/>
<rect x="1217" y="122" width="1" height="3" fill="#808080"/>
<rect x="1217" y="128" width="1" height="3" fill="#808080"/>
<rect x="1217" y="134" width="1" height="3" fill="#808080"/>
<rect x="1217" y="140" width="1" height="3" fill="#808080"/>
<rect x="1217" y="146" width="1" height="3" fill="#808080"/>
<rect x="1217" y="152" width="1" height="3" fill="#808080"/>
<rect x="1217" y="158" width="1" height="3" fill="#808080"/>
<rect x="1217" y="164" width="1" height="3" fill="#808080"/>
<rect x="1217" y="170" width="1" height="3" fill="#808080"/>
<rect x="1217" y="176" width="1" height="3" fill="#808080"/>
<rect x="1217" y="182" width="1" height="3" fill="#808080"/>
<rect x="1217" y="188" width="1" height="3" fill="#808080"/>
<rect x="1217" y="194" width="1" height="3" fill="#808080"/>
<rect x="1217" y="200" width="1" height="3" fill="#808080"/>
<rect x="1217" y="206" width="1" height="3" fill="#808080"/>
<rect x="1217" y="212" width="1" height="3" fill="#808080"/>
<rect x="1217" y="218" width="1" height="3" fill="#808080"/>
<rect x="1217" y="224" width="1" height="3" fill="#808080"/>
<rect x="1217" y="230" width="1" height="3" fill="#808080"/>
<rect x="1217" y="236" width="1" height="3" fill="#808080"/>
<rect x="1217" y="242" width="1" height="3" fill="#808080"/>
<rect x="1217" y="248" width="1" height="3" fill="#808080"/>
<rect x="1217" y="254" width="1" height="3" fill="#808080"/>
<rect x="1217" y="260" width="1" height="3" fill="#808080"/>
<rect x="1217" y="266" width="1" height="3" fill="#808080"/>
<rect x="1217" y="272" width="1" height="3" fill="#808080"/>
<rect x="1217" y="278" width="1" height="3" fill="#808080"/>
<rect x="1217" y="284" width="1" height="3" fill="#808080"/>
<rect x="1217" y="290" width="1" height="3" fill="#808080"/>
<rect x="1217" y="296" width="1" height="3" fill="#808080"/>
<rect x="1217" y="302" width="1" height="2" fill="#808080"/>
<rect x="1286" y="46" width="1" height="1" fill="#808080"/>
<rect x="1286" y="50" width="1" height="3" fill="#808080"/>
<rect x="1286" y="56" width="1" height="3" fill="#808080"/>
<rect x="1286" y="62" width="1" height="3" fill="#808080"/>
<rect x="1286" y="68" width="1" height="3" fill="#808080"/>
<rect x="1286" y="74" width="1" height="3" fill="#808080"/>
<rect x="1286" y="80" width="1" height="3" fill="#808080"/>
<rect x="1286" y="86" width="1" height="3" fill="#808080"/>
<rect x="1286" y="92" width="1" height="3" fill="#808080"/>
<rect x="1286" y="98" width="1" height="3" fill="#808080"/>
<rect x="1286" y="104" width="1" height="3" fill="#808080"/>
<rect x="1286" y="110" width="1" height="3" fill="#808080"/>
<rect x="1286" y="116" width="1" height="3" fill="#808080"/>
<rect x="1286" y="122" width="1" height="3" fill="#808080"/>
<rect x="1286" y="128" width="1" height="3" fill="#808080"/>
<rect x="1286" y="134" width="1" height="3" fill="#808080"/>
<rect x="1286" y="140" width="1" height="3" fill="#808080"/>
<rect x="1286" y="146" width="1" height="3" fill="#808080"/>
<rect x="1286" y="152" width="1" height="3" fill="#808080"/>
<rect x="1286" y="158" width="1" height="3" fill="#808080"/>
<rect x="1286" y="164" width="1" height="3" fill="#808080"/>
<rect x="1286" y="170" width="1" height="3" fill="#808080"/>
<rect x="1286" y="176" width="1" height="3" fill="#808080"/>
<rect x="1286" y="182" width="1" height="3" fill="#808080"/>
<rect x="1286" y="188" width="1" height="3" fill="#808080"/>
<rect x="1286" y="194" width="1" height="3" fill="#808080"/>
<rect x="1286" y="200" width="1" height="3" fill="#808080"/>
<rect x="1286" y="206" width="1" height="3" fill="#808080"/>
<rect x="1286" y="212" width="1" height="3" fill="#808080"/>
<rect x="1286" y="218" width="1" height="3" fill="#808080"/>
<rect x="1286" y="224" width="1" height="3" fill="#808080"/>
<rect x="1286" y="230" width="1" height="3" fill="#808080"/>
<rect x="1286" y="236" width="1" height="3" fill="#808080"/>
<rect x="1286" y="242" width="1" height="3" fill="#808080"/>
<rect x="1286" y="248" width="1" height="3" fill="#808080"/>
<rect x="1286" y="254" width="1" height="3" fill="#808080"/>
<rect x="1286" y="260" width="1" height="3" fill="#808080"/>
<rect x="1286" y="266" width="1" height="3" fill="#808080"/>
<rect x="1286" y="272" width="1" height="3" fill="#808080"/>
<rect x="1286" y="278" width="1" height="3" fill="#808080"/>
<rect x="1286" y="284" width="1" height="3" fill="#808080"/>
<rect x="1286" y="290" width="1" height="3" fill="#808080"/>
<rect x="1286" y="296" width="1" height="3" fill="#808080"/>
<rect x="1286" y="302" width="1" height="2" fill="#808080"/>
<rect x="731" y="45" width="607" height="1" fill="#c0c0c0"/>
<rect x="738" y="304" width="600" height="1" fill="#c0c0c0"/>
<rect x="738" y="45" width="1" height="260" fill="#c0c0c0"/>
<rect x="1337" y="45" width="1" height="260" fill="#c0c0c0"/>
<rect x="731" y="45" width="8" height="1" fill="#c0c0c0"/>
<text x="730" y="50" text-anchor="end" font-family="Liberation Sans" font-size="13.5" fill="#c8c8c8">3.985V</text>
<rect x="731" y="88" width="8" height="1" fill="#c0c0c0"/>
<text x="730" y="93" text-anchor="end" font-family="Liberation Sans" font-size="13.5" fill="#c8c8c8">3.980V</text>
<rect x="731" y="131" width="8" height="1" fill="#c0c0c0"/>
<text x="730" y="136" text-anchor="end" font-family="Liberation Sans" font-size="13.5" fill="#c8c8c8">3.975V</text>
<rect x="731" y="174" width="8" height="1" fill="#c0c0c0"/>
<text x="730" y="179" text-anchor="end" font-family="Liberation Sans" font-size="13.5" fill="#c8c8c8">3.970V</text>
<rect x="731" y="218" width="8" height="1" fill="#c0c0c0"/>
<text x="730" y="223" text-anchor="end" font-family="Liberation Sans" font-size="13.5" fill="#c8c8c8">3.965V</text>
<rect x="731" y="261" width="8" height="1" fill="#c0c0c0"/>
<text x="730" y="266" text-anchor="end" font-family="Liberation Sans" font-size="13.5" fill="#c8c8c8">3.960V</text>
<rect x="731" y="304" width="8" height="1" fill="#c0c0c0"/>
<text x="730" y="309" text-anchor="end" font-family="Liberation Sans" font-size="13.5" fill="#c8c8c8">3.955V</text>
<rect x="738" y="342" width="3" height="1" fill="#808080"/>
<rect x="744" y="342" width="3" height="1" fill="#808080"/>
<rect x="750" y="342" width="3" height="1" fill="#808080"/>
<rect x="756" y="342" width="3" height="1" fill="#808080"/>
<rect x="762" y="342" width="3" height="1" fill="#808080"/>
<rect x="768" y="342" width="3" height="1" fill="#808080"/>
<rect x="774" y="342" width="3" height="1" fill="#808080"/>
<rect x="780" y="342" width="3" height="1" fill="#808080"/>
<rect x="786" y="342" width="3" height="1" fill="#808080"/>
<rect x="792" y="342" width="3" height="1" fill="#808080"/>
<rect x="798" y="342" width="3" height="1" fill="#808080"/>
<rect x="804" y="342" width="3" height="1" fill="#808080"/>
<rect x="810" y="342" width="3" height="1" fill="#808080"/>
<rect x="816" y="342" width="3" height="1" fill="#808080"/>
<rect x="822" y="342" width="3" height="1" fill="#808080"/>
<rect x="828" y="342" width="3" height="1" fill="#808080"/>
<rect x="834" y="342" width="3" height="1" fill="#808080"/>
<rect x="840" y="342" width="3" height="1" fill="#808080"/>
<rect x="846" y="342" width="3" height="1" fill="#808080"/>
<rect x="852" y="342" width="3" height="1" fill="#808080"/>
<rect x="858" y="342" width="3" height="1" fill="#808080"/>
<rect x="864" y="342" width="3" height="1" fill="#808080"/>
<rect x="870" y="342" width="3" height="1" fill="#808080"/>
<rect x="876" y="342" width="3" height="1" fill="#808080"/>
<rect x="882" y="342" width="3" height="1" fill="#808080"/>
<rect x="888" y="342" width="3" height="1" fill="#808080"/>
<rect x="894" y="342" width="3" height="1" fill="#808080"/>
<rect x="900" y="342" width="3" height="1" fill="#808080"/>
<rect x="906" y="342" width="3" height="1" fill="#808080"/>
<rect x="912" y="342" width="3" height="1" fill="#808080"/>
<rect x="918" y="342" width="3" height="1" fill="#808080"/>
<rect x="924" y="342" width="3" height="1" fill="#808080"/>
<rect x="930" y="342" width="3" height="1" fill="#808080"/>
<rect x="936" y="342" width="3" height="1" fill="#808080"/>
<rect x="942" y="342" width="3" height="1" fill="#808080"/>
<rect x="948" y="342" width="3" height="1" fill="#808080"/>
<rect x="954" y="342" width="3" height="1" fill="#808080"/>
<rect x="960" y="342" width="3" height="1" fill="#808080"/>
<rect x="966" y="342" width="3" height="1" fill="#808080"/>
<rect x="972" y="342" width="3" height="1" fill="#808080"/>
<rect x="978" y="342" width="3" height="1" fill="#808080"/>
<rect x="984" y="342" width="3" height="1" fill="#808080"/>
<rect x="990" y="342" width="3" height="1" fill="#808080"/>
<rect x="996" y="342" width="3" height="1" fill="#808080"/>
<rect x="1002" y="342" width="3" height="1" fill="#808080"/>
<rect x="1008" y="342" width="3" height="1" fill="#808080"/>
<rect x="1014" y="342" width="3" height="1" fill="#808080"/>
<rect x="1020" y="342" width="3" height="1" fill="#808080"/>
<rect x="1026" y="342" width="3" height="1" fill="#808080"/>
<rect x="1032" y="342" width="3" height="1" fill="#808080"/>
<rect x="1038" y="342" width="3" height="1" fill="#808080"/>
<rect x="1044" y="342" width="3" height="1" fill="#808080"/>
<rect x="1050" y="342" width="3" height="1" fill="#808080"/>
<rect x="1056" y="342" width="3" height="1" fill="#808080"/>
<rect x="1062" y="342" width="3" height="1" fill="#808080"/>
<rect x="1068" y="342" width="3" height="1" fill="#808080"/>
<rect x="1074" y="342" width="3" height="1" fill="#808080"/>
<rect x="1080" y="342" width="3" height="1" fill="#808080"/>
<rect x="1086" y="342" width="3" height="1" fill="#808080"/>
<rect x="1092" y="342" width="3" height="1" fill="#808080"/>
<rect x="1098" y="342" width="3" height="1" fill="#808080"/>
<rect x="1104" y="342" width="3" height="1" fill="#808080"/>
<rect x="1110" y="342" width="3" height="1" fill="#808080"/>
<rect x="1116" y="342" width="3" height="1" fill="#808080"/>
<rect x="1122" y="342" width="3" height="1" fill="#808080"/>
<rect x="1128" y="342" width="3" height="1" fill="#808080"/>
<rect x="1134" y="342" width="3" height="1" fill="#808080"/>
<rect x="1140" y="342" width="3" height="1" fill="#808080"/>
<rect x="1146" y="342" width="3" height="1" fill="#808080"/>
<rect x="1152" y="342" width="3" height="1" fill="#808080"/>
<rect x="1158" y="342" width="3" height="1" fill="#808080"/>
<rect x="1164" y="342" width="3" height="1" fill="#808080"/>
<rect x="1170" y="342" width="3" height="1" fill="#808080"/>
<rect x="1176" y="342" width="3" height="1" fill="#808080"/>
<rect x="1182" y="342" width="3" height="1" fill="#808080"/>
<rect x="1188" y="342" width="3" height="1" fill="#808080"/>
<rect x="1194" y="342" width="3" height="1" fill="#808080"/>
<rect x="1200" y="342" width="3" height="1" fill="#808080"/>
<rect x="1206" y="342" width="3" height="1" fill="#808080"/>
<rect x="1212" y="342" width="3" height="1" fill="#808080"/>
<rect x="1218" y="342" width="3" height="1" fill="#808080"/>
<rect x="1224" y="342" width="3" height="1" fill="#808080"/>
<rect x="1230" y="342" width="3" height="1" fill="#808080"/>
<rect x="1236" y="342" width="3" height="1" fill="#808080"/>
<rect x="1242" y="342" width="3" height="1" fill="#808080"/>
<rect x="1248" y="342" width="3" height="1" fill="#808080"/>
<rect x="1254" y="342" width="3" height="1" fill="#808080"/>
<rect x="1260" y="342" width="3" height="1" fill="#808080"/>
<rect x="1266" y="342" width="3" height="1" fill="#808080"/>
<rect x="1272" y="342" width="3" height="1" fill="#808080"/>
<rect x="1278" y="342" width="3" height="1" fill="#808080"/>
<rect x="1284" y="342" width="3" height="1" fill="#808080"/>
<rect x="1290" y="342" width="3" height="1" fill="#808080"/>
<rect x="1296" y="342" width="3" height="1" fill="#808080"/>
<rect x="1302" y="342" width="3" height="1" fill="#808080"/>
<rect x="1308" y="342" width="3" height="1" fill="#808080"/>
<rect x="1314" y="342" width="3" height="1" fill="#808080"/>
<rect x="1320" y="342" width="3" height="1" fill="#808080"/>
<rect x="1326" y="342" width="3" height="1" fill="#808080"/>
<rect x="1332" y="342" width="3" height="1" fill="#808080"/>
<rect x="738" y="360" width="3" height="1" fill="#808080"/>
<rect x="744" y="360" width="3" height="1" fill="#808080"/>
<rect x="750" y="360" width="3" height="1" fill="#808080"/>
<rect x="756" y="360" width="3" height="1" fill="#808080"/>
<rect x="762" y="360" width="3" height="1" fill="#808080"/>
<rect x="768" y="360" width="3" height="1" fill="#808080"/>
<rect x="774" y="360" width="3" height="1" fill="#808080"/>
<rect x="780" y="360" width="3" height="1" fill="#808080"/>
<rect x="786" y="360" width="3" height="1" fill="#808080"/>
<rect x="792" y="360" width="3" height="1" fill="#808080"/>
<rect x="798" y="360" width="3" height="1" fill="#808080"/>
<rect x="804" y="360" width="3" height="1" fill="#808080"/>
<rect x="810" y="360" width="3" height="1" fill="#808080"/>
<rect x="816" y="360" width="3" height="1" fill="#808080"/>
<rect x="822" y="360" width="3" height="1" fill="#808080"/>
<rect x="828" y="360" width="3" height="1" fill="#808080"/>
<rect x="834" y="360" width="3" height="1" fill="#808080"/>
<rect x="840" y="360" width="3" height="1" fill="#808080"/>
<rect x="846" y="360" width="3" height="1" fill="#808080"/>
<rect x="852" y="360" width="3" height="1" fill="#808080"/>
<rect x="858" y="360" width="3" height="1" fill="#808080"/>
<rect x="864" y="360" width="3" height="1" fill="#808080"/>
<rect x="870" y="360" width="3" height="1" fill="#808080"/>
<rect x="876" y="360" width="3" height="1" fill="#808080"/>
<rect x="882" y="360" width="3" height="1" fill="#808080"/>
<rect x="888" y="360" width="3" height="1" fill="#808080"/>
<rect x="894" y="360" width="3" height="1" fill="#808080"/>
<rect x="900" y="360" width="3" height="1" fill="#808080"/>
<rect x="906" y="360" width="3" height="1" fill="#808080"/>
<rect x="912" y="360" width="3" height="1" fill="#808080"/>
<rect x="918" y="360" width="3" height="1" fill="#808080"/>
<rect x="924" y="360" width="3" height="1" fill="#808080"/>
<rect x="930" y="360" width="3" height="1" fill="#808080"/>
<rect x="936" y="360" width="3" height="1" fill="#808080"/>
<rect x="942" y="360" width="3" height="1" fill="#808080"/>
<rect x="948" y="360" width="3" height="1" fill="#808080"/>
<rect x="954" y="360" width="3" height="1" fill="#808080"/>
<rect x="960" y="360" width="3" height="1" fill="#808080"/>
<rect x="966" y="360" width="3" height="1" fill="#808080"/>
<rect x="972" y="360" width="3" height="1" fill="#808080"/>
<rect x="978" y="360" width="3" height="1" fill="#808080"/>
<rect x="984" y="360" width="3" height="1" fill="#808080"/>
<rect x="990" y="360" width="3" height="1" fill="#808080"/>
<rect x="996" y="360" width="3" height="1" fill="#808080"/>
<rect x="1002" y="360" width="3" height="1" fill="#808080"/>
<rect x="1008" y="360" width="3" height="1" fill="#808080"/>
<rect x="1014" y="360" width="3" height="1" fill="#808080"/>
<rect x="1020" y="360" width="3" height="1" fill="#808080"/>
<rect x="1026" y="360" width="3" height="1" fill="#808080"/>
<rect x="1032" y="360" width="3" height="1" fill="#808080"/>
<rect x="1038" y="360" width="3" height="1" fill="#808080"/>
<rect x="1044" y="360" width="3" height="1" fill="#808080"/>
<rect x="1050" y="360" width="3" height="1" fill="#808080"/>
<rect x="1056" y="360" width="3" height="1" fill="#808080"/>
<rect x="1062" y="360" width="3" height="1" fill="#808080"/>
<rect x="1068" y="360" width="3" height="1" fill="#808080"/>
<rect x="1074" y="360" width="3" height="1" fill="#808080"/>
<rect x="1080" y="360" width="3" height="1" fill="#808080"/>
<rect x="1086" y="360" width="3" height="1" fill="#808080"/>
<rect x="1092" y="360" width="3" height="1" fill="#808080"/>
<rect x="1098" y="360" width="3" height="1" fill="#808080"/>
<rect x="1104" y="360" width="3" height="1" fill="#808080"/>
<rect x="1110" y="360" width="3" height="1" fill="#808080"/>
<rect x="1116" y="360" width="3" height="1" fill="#808080"/>
<rect x="1122" y="360" width="3" height="1" fill="#808080"/>
<rect x="1128" y="360" width="3" height="1" fill="#808080"/>
<rect x="1134" y="360" width="3" height="1" fill="#808080"/>
<rect x="1140" y="360" width="3" height="1" fill="#808080"/>
<rect x="1146" y="360" width="3" height="1" fill="#808080"/>
<rect x="1152" y="360" width="3" height="1" fill="#808080"/>
<rect x="1158" y="360" width="3" height="1" fill="#808080"/>
<rect x="1164" y="360" width="3" height="1" fill="#808080"/>
<rect x="1170" y="360" width="3" height="1" fill="#808080"/>
<rect x="1176" y="360" width="3" height="1" fill="#808080"/>
<rect x="1182" y="360" width="3" height="1" fill="#808080"/>
<rect x="1188" y="360" width="3" height="1" fill="#808080"/>
<rect x="1194" y="360" width="3" height="1" fill="#808080"/>
<rect x="1200" y="360" width="3" height="1" fill="#808080"/>
<rect x="1206" y="360" width="3" height="1" fill="#808080"/>
<rect x="1212" y="360" width="3" height="1" fill="#808080"/>
<rect x="1218" y="360" width="3" height="1" fill="#808080"/>
<rect x="1224" y="360" width="3" height="1" fill="#808080"/>
<rect x="1230" y="360" width="3" height="1" fill="#808080"/>
<rect x="1236" y="360" width="3" height="1" fill="#808080"/>
<rect x="1242" y="360" width="3" height="1" fill="#808080"/>
<rect x="1248" y="360" width="3" height="1" fill="#808080"/>
<rect x="1254" y="360" width="3" height="1" fill="#808080"/>
<rect x="1260" y="360" width="3" height="1" fill="#808080"/>
<rect x="1266" y="360" width="3" height="1" fill="#808080"/>
<rect x="1272" y="360" width="3" height="1" fill="#808080"/>
<rect x="1278" y="360" width="3" height="1" fill="#808080"/>
<rect x="1284" y="360" width="3" height="1" fill="#808080"/>
<rect x="1290" y="360" width="3" height="1" fill="#808080"/>
<rect x="1296" y="360" width="3" height="1" fill="#808080"/>
<rect x="1302" y="360" width="3" height="1" fill="#808080"/>
<rect x="1308" y="360" width="3" height="1" fill="#808080"/>
<rect x="1314" y="360" width="3" height="1" fill="#808080"/>
<rect x="1320" y="360" width="3" height="1" fill="#808080"/>
<rect x="1326" y="360" width="3" height="1" fill="#808080"/>
<rect x="1332" y="360" width="3" height="1" fill="#808080"/>
<rect x="738" y="377" width="3" height="1" fill="#808080"/>
<rect x="744" y="377" width="3" height="1" fill="#808080"/>
<rect x="750" y="377" width="3" height="1" fill="#808080"/>
<rect x="756" y="377" width="3" height="1" fill="#808080"/>
<rect x="762" y="377" width="3" height="1" fill="#808080"/>
<rect x="768" y="377" width="3" height="1" fill="#808080"/>
<rect x="774" y="377" width="3" height="1" fill="#808080"/>
<rect x="780" y="377" width="3" height="1" fill="#808080"/>
<rect x="786" y="377" width="3" height="1" fill="#808080"/>
<rect x="792" y="377" width="3" height="1" fill="#808080"/>
<rect x="798" y="377" width="3" height="1" fill="#808080"/>
<rect x="804" y="377" width="3" height="1" fill="#808080"/>
<rect x="810" y="377" width="3" height="1" fill="#808080"/>
<rect x="816" y="377" width="3" height="1" fill="#808080"/>
<rect x="822" y="377" width="3" height="1" fill="#808080"/>
<rect x="828" y="377" width="3" height="1" fill="#808080"/>
<rect x="834" y="377" width="3" height="1" fill="#808080"/>
<rect x="840" y="377" width="3" height="1" fill="#808080"/>
<rect x="846" y="377" width="3" height="1" fill="#808080"/>
<rect x="852" y="377" width="3" height="1" fill="#808080"/>
<rect x="858" y="377" width="3" height="1" fill="#808080"/>
<rect x="864" y="377" width="3" height="1" fill="#808080"/>
<rect x="870" y="377" width="3" height="1" fill="#808080"/>
<rect x="876" y="377" width="3" height="1" fill="#808080"/>
<rect x="882" y="377" width="3" height="1" fill="#808080"/>
<rect x="888" y="377" width="3" height="1" fill="#808080"/>
<rect x="894" y="377" width="3" height="1" fill="#808080"/>
<rect x="900" y="377" width="3" height="1" fill="#808080"/>
<rect x="906" y="377" width="3" height="1" fill="#808080"/>
<rect x="912" y="377" width="3" height="1" fill="#808080"/>
<rect x="918" y="377" width="3" height="1" fill="#808080"/>
<rect x="924" y="377" width="3" height="1" fill="#808080"/>
<rect x="930" y="377" width="3" height="1" fill="#808080"/>
<rect x="936" y="377" width="3" height="1" fill="#808080"/>
<rect x="942" y="377" width="3" height="1" fill="#808080"/>
<rect x="948" y="377" width="3" height="1" fill="#808080"/>
<rect x="954" y="377" width="3" height="1" fill="#808080"/>
<rect x="960" y="377" width="3" height="1" fill="#808080"/>
<rect x="966" y="377" width="3" height="1" fill="#808080"/>
<rect x="972" y="377" width="3" height="1" fill="#808080"/>
<rect x="978" y="377" width="3" height="1" fill="#808080"/>
<rect x="984" y="377" width="3" height="1" fill="#808080"/>
<rect x="990" y="377" width="3" height="1" fill="#808080"/>
<rect x="996" y="377" width="3" height="1" fill="#808080"/>
<rect x="1002" y="377" width="3" height="1" fill="#808080"/>
<rect x="1008" y="377" width="3" height="1" fill="#808080"/>
<rect x="1014" y="377" width="3" height="1" fill="#808080"/>
<rect x="1020" y="377" width="3" height="1" fill="#808080"/>
<rect x="1026" y="377" width="3" height="1" fill="#808080"/>
<rect x="1032" y="377" width="3" height="1" fill="#808080"/>
<rect x="1038" y="377" width="3" height="1" fill="#808080"/>
<rect x="1044" y="377" width="3" height="1" fill="#808080"/>
<rect x="1050" y="377" width="3" height="1" fill="#808080"/>
<rect x="1056" y="377" width="3" height="1" fill="#808080"/>
<rect x="1062" y="377" width="3" height="1" fill="#808080"/>
<rect x="1068" y="377" width="3" height="1" fill="#808080"/>
<rect x="1074" y="377" width="3" height="1" fill="#808080"/>
<rect x="1080" y="377" width="3" height="1" fill="#808080"/>
<rect x="1086" y="377" width="3" height="1" fill="#808080"/>
<rect x="1092" y="377" width="3" height="1" fill="#808080"/>
<rect x="1098" y="377" width="3" height="1" fill="#808080"/>
<rect x="1104" y="377" width="3" height="1" fill="#808080"/>
<rect x="1110" y="377" width="3" height="1" fill="#808080"/>
<rect x="1116" y="377" width="3" height="1" fill="#808080"/>
<rect x="1122" y="377" width="3" height="1" fill="#808080"/>
<rect x="1128" y="377" width="3" height="1" fill="#808080"/>
<rect x="1134" y="377" width="3" height="1" fill="#808080"/>
<rect x="1140" y="377" width="3" height="1" fill="#808080"/>
<rect x="1146" y="377" width="3" height="1" fill="#808080"/>
<rect x="1152" y="377" width="3" height="1" fill="#808080"/>
<rect x="1158" y="377" width="3" height="1" fill="#808080"/>
<rect x="1164" y="377" width="3" height="1" fill="#808080"/>
<rect x="1170" y="377" width="3" height="1" fill="#808080"/>
<rect x="1176" y="377" width="3" height="1" fill="#808080"/>
<rect x="1182" y="377" width="3" height="1" fill="#808080"/>
<rect x="1188" y="377" width="3" height="1" fill="#808080"/>
<rect x="1194" y="377" width="3" height="1" fill="#808080"/>
<rect x="1200" y="377" width="3" height="1" fill="#808080"/>
<rect x="1206" y="377" width="3" height="1" fill="#808080"/>
<rect x="1212" y="377" width="3" height="1" fill="#808080"/>
<rect x="1218" y="377" width="3" height="1" fill="#808080"/>
<rect x="1224" y="377" width="3" height="1" fill="#808080"/>
<rect x="1230" y="377" width="3" height="1" fill="#808080"/>
<rect x="1236" y="377" width="3" height="1" fill="#808080"/>
<rect x="1242" y="377" width="3" height="1" fill="#808080"/>
<rect x="1248" y="377" width="3" height="1" fill="#808080"/>
<rect x="1254" y="377" width="3" height="1" fill="#808080"/>
<rect x="1260" y="377" width="3" height="1" fill="#808080"/>
<rect x="1266" y="377" width="3" height="1" fill="#808080"/>
<rect x="1272" y="377" width="3" height="1" fill="#808080"/>
<rect x="1278" y="377" width="3" height="1" fill="#808080"/>
<rect x="1284" y="377" width="3" height="1" fill="#808080"/>
<rect x="1290" y="377" width="3" height="1" fill="#808080"/>
<rect x="1296" y="377" width="3" height="1" fill="#808080"/>
<rect x="1302" y="377" width="3" height="1" fill="#808080"/>
<rect x="1308" y="377" width="3" height="1" fill="#808080"/>
<rect x="1314" y="377" width="3" height="1" fill="#808080"/>
<rect x="1320" y="377" width="3" height="1" fill="#808080"/>
<rect x="1326" y="377" width="3" height="1" fill="#808080"/>
<rect x="1332" y="377" width="3" height="1" fill="#808080"/>
<rect x="738" y="395" width="3" height="1" fill="#808080"/>
<rect x="744" y="395" width="3" height="1" fill="#808080"/>
<rect x="750" y="395" width="3" height="1" fill="#808080"/>
<rect x="756" y="395" width="3" height="1" fill="#808080"/>
<rect x="762" y="395" width="3" height="1" fill="#808080"/>
<rect x="768" y="395" width="3" height="1" fill="#808080"/>
<rect x="774" y="395" width="3" height="1" fill="#808080"/>
<rect x="780" y="395" width="3" height="1" fill="#808080"/>
<rect x="786" y="395" width="3" height="1" fill="#808080"/>
<rect x="792" y="395" width="3" height="1" fill="#808080"/>
<rect x="798" y="395" width="3" height="1" fill="#808080"/>
<rect x="804" y="395" width="3" height="1" fill="#808080"/>
<rect x="810" y="395" width="3" height="1" fill="#808080"/>
<rect x="816" y="395" width="3" height="1" fill="#808080"/>
<rect x="822" y="395" width="3" height="1" fill="#808080"/>
<rect x="828" y="395" width="3" height="1" fill="#808080"/>
<rect x="834" y="395" width="3" height="1" fill="#808080"/>
<rect x="840" y="395" width="3" height="1" fill="#808080"/>
<rect x="846" y="395" width="3" height="1" fill="#808080"/>
<rect x="852" y="395" width="3" height="1" fill="#808080"/>
<rect x="858" y="395" width="3" height="1" fill="#808080"/>
<rect x="864" y="395" width="3" height="1" fill="#808080"/>
<rect x="870" y="395" width="3" height="1" fill="#808080"/>
<rect x="876" y="395" width="3" height="1" fill="#808080"/>
<rect x="882" y="395" width="3" height="1" fill="#808080"/>
<rect x="888" y="395" width="3" height="1" fill="#808080"/>
<rect x="894" y="395" width="3" height="1" fill="#808080"/>
<rect x="900" y="395" width="3" height="1" fill="#808080"/>
<rect x="906" y="395" width="3" height="1" fill="#808080"/>
<rect x="912" y="395" width="3" height="1" fill="#808080"/>
<rect x="918" y="395" width="3" height="1" fill="#808080"/>
<rect x="924" y="395" width="3" height="1" fill="#808080"/>
<rect x="930" y="395" width="3" height="1" fill="#808080"/>
<rect x="936" y="395" width="3" height="1" fill="#808080"/>
<rect x="942" y="395" width="3" height="1" fill="#808080"/>
<rect x="948" y="395" width="3" height="1" fill="#808080"/>
<rect x="954" y="395" width="3" height="1" fill="#808080"/>
<rect x="960" y="395" width="3" height="1" fill="#808080"/>
<rect x="966" y="395" width="3" height="1" fill="#808080"/>
<rect x="972" y="395" width="3" height="1" fill="#808080"/>
<rect x="978" y="395" width="3" height="1" fill="#808080"/>
<rect x="984" y="395" width="3" height="1" fill="#808080"/>
<rect x="990" y="395" width="3" height="1" fill="#808080"/>
<rect x="996" y="395" width="3" height="1" fill="#808080"/>
<rect x="1002" y="395" width="3" height="1" fill="#808080"/>
<rect x="1008" y="395" width="3" height="1" fill="#808080"/>
<rect x="1014" y="395" width="3" height="1" fill="#808080"/>
<rect x="1020" y="395" width="3" height="1" fill="#808080"/>
<rect x="1026" y="395" width="3" height="1" fill="#808080"/>
<rect x="1032" y="395" width="3" height="1" fill="#808080"/>
<rect x="1038" y="395" width="3" height="1" fill="#808080"/>
<rect x="1044" y="395" width="3" height="1" fill="#808080"/>
<rect x="1050" y="395" width="3" height="1" fill="#808080"/>
<rect x="1056" y="395" width="3" height="1" fill="#808080"/>
<rect x="1062" y="395" width="3" height="1" fill="#808080"/>
<rect x="1068" y="395" width="3" height="1" fill="#808080"/>
<rect x="1074" y="395" width="3" height="1" fill="#808080"/>
<rect x="1080" y="395" width="3" height="1" fill="#808080"/>
<rect x="1086" y="395" width="3" height="1" fill="#808080"/>
<rect x="1092" y="395" width="3" height="1" fill="#808080"/>
<rect x="1098" y="395" width="3" height="1" fill="#808080"/>
<rect x="1104" y="395" width="3" height="1" fill="#808080"/>
<rect x="1110" y="395" width="3" height="1" fill="#808080"/>
<rect x="1116" y="395" width="3" height="1" fill="#808080"/>
<rect x="1122" y="395" width="3" height="1" fill="#808080"/>
<rect x="1128" y="395" width="3" height="1" fill="#808080"/>
<rect x="1134" y="395" width="3" height="1" fill="#808080"/>
<rect x="1140" y="395" width="3" height="1" fill="#808080"/>
<rect x="1146" y="395" width="3" height="1" fill="#808080"/>
<rect x="1152" y="395" width="3" height="1" fill="#808080"/>
<rect x="1158" y="395" width="3" height="1" fill="#808080"/>
<rect x="1164" y="395" width="3" height="1" fill="#808080"/>
<rect x="1170" y="395" width="3" height="1" fill="#808080"/>
<rect x="1176" y="395" width="3" height="1" fill="#808080"/>
<rect x="1182" y="395" width="3" height="1" fill="#808080"/>
<rect x="1188" y="395" width="3" height="1" fill="#808080"/>
<rect x="1194" y="395" width="3" height="1" fill="#808080"/>
<rect x="1200" y="395" width="3" height="1" fill="#808080"/>
<rect x="1206" y="395" width="3" height="1" fill="#808080"/>
<rect x="1212" y="395" width="3" height="1" fill="#808080"/>
<rect x="1218" y="395" width="3" height="1" fill="#808080"/>
<rect x="1224" y="395" width="3" height="1" fill="#808080"/>
<rect x="1230" y="395" width="3" height="1" fill="#808080"/>
<rect x="1236" y="395" width="3" height="1" fill="#808080"/>
<rect x="1242" y="395" width="3" height="1" fill="#808080"/>
<rect x="1248" y="395" width="3" height="1" fill="#808080"/>
<rect x="1254" y="395" width="3" height="1" fill="#808080"/>
<rect x="1260" y="395" width="3" height="1" fill="#808080"/>
<rect x="1266" y="395" width="3" height="1" fill="#808080"/>
<rect x="1272" y="395" width="3" height="1" fill="#808080"/>
<rect x="1278" y="395" width="3" height="1" fill="#808080"/>
<rect x="1284" y="395" width="3" height="1" fill="#808080"/>
<rect x="1290" y="395" width="3" height="1" fill="#808080"/>
<rect x="1296" y="395" width="3" height="1" fill="#808080"/>
<rect x="1302" y="395" width="3" height="1" fill="#808080"/>
<rect x="1308" y="395" width="3" height="1" fill="#808080"/>
<rect x="1314" y="395" width="3" height="1" fill="#808080"/>
<rect x="1320" y="395" width="3" height="1" fill="#808080"/>
<rect x="1326" y="395" width="3" height="1" fill="#808080"/>
<rect x="1332" y="395" width="3" height="1" fill="#808080"/>
<rect x="738" y="412" width="3" height="1" fill="#808080"/>
<rect x="744" y="412" width="3" height="1" fill="#808080"/>
<rect x="750" y="412" width="3" height="1" fill="#808080"/>
<rect x="756" y="412" width="3" height="1" fill="#808080"/>
<rect x="762" y="412" width="3" height="1" fill="#808080"/>
<rect x="768" y="412" width="3" height="1" fill="#808080"/>
<rect x="774" y="412" width="3" height="1" fill="#808080"/>
<rect x="780" y="412" width="3" height="1" fill="#808080"/>
<rect x="786" y="412" width="3" height="1" fill="#808080"/>
<rect x="792" y="412" width="3" height="1" fill="#808080"/>
<rect x="798" y="412" width="3" height="1" fill="#808080"/>
<rect x="804" y="412" width="3" height="1" fill="#808080"/>
<rect x="810" y="412" width="3" height="1" fill="#808080"/>
<rect x="816" y="412" width="3" height="1" fill="#808080"/>
<rect x="822" y="412" width="3" height="1" fill="#808080"/>
<rect x="828" y="412" width="3" height="1" fill="#808080"/>
<rect x="834" y="412" width="3" height="1" fill="#808080"/>
<rect x="840" y="412" width="3" height="1" fill="#808080"/>
<rect x="846" y="412" width="3" height="1" fill="#808080"/>
<rect x="852" y="412" width="3" height="1" fill="#808080"/>
<rect x="858" y="412" width="3" height="1" fill="#808080"/>
<rect x="864" y="412" width="3" height="1" fill="#808080"/>
<rect x="870" y="412" width="3" height="1" fill="#808080"/>
<rect x="876" y="412" width="3" height="1" fill="#808080"/>
<rect x="882" y="412" width="3" height="1" fill="#808080"/>
<rect x="888" y="412" width="3" height="1" fill="#808080"/>
<rect x="894" y="412" width="3" height="1" fill="#808080"/>
<rect x="900" y="412" width="3" height="1" fill="#808080"/>
<rect x="906" y="412" width="3" height="1" fill="#808080"/>
<rect x="912" y="412" width="3" height="1" fill="#808080"/>
<rect x="918" y="412" width="3" height="1" fill="#808080"/>
<rect x="924" y="412" width="3" height="1" fill="#808080"/>
<rect x="930" y="412" width="3" height="1" fill="#808080"/>
<rect x="936" y="412" width="3" height="1" fill="#808080"/>
<rect x="942" y="412" width="3" height="1" fill="#808080"/>
<rect x="948" y="412" width="3" height="1" fill="#808080"/>
<rect x="954" y="412" width="3" height="1" fill="#808080"/>
<rect x="960" y="412" width="3" height="1" fill="#808080"/>
<rect x="966" y="412" width="3" height="1" fill="#808080"/>
<rect x="972" y="412" width="3" height="1" fill="#808080"/>
<rect x="978" y="412" width="3" height="1" fill="#808080"/>
<rect x="984" y="412" width="3" height="1" fill="#808080"/>
<rect x="990" y="412" width="3" height="1" fill="#808080"/>
<rect x="996" y="412" width="3" height="1" fill="#808080"/>
<rect x="1002" y="412" width="3" height="1" fill="#808080"/>
<rect x="1008" y="412" width="3" height="1" fill="#808080"/>
<rect x="1014" y="412" width="3" height="1" fill="#808080"/>
<rect x="1020" y="412" width="3" height="1" fill="#808080"/>
<rect x="1026" y="412" width="3" height="1" fill="#808080"/>
<rect x="1032" y="412" width="3" height="1" fill="#808080"/>
<rect x="1038" y="412" width="3" height="1" fill="#808080"/>
<rect x="1044" y="412" width="3" height="1" fill="#808080"/>
<rect x="1050" y="412" width="3" height="1" fill="#808080"/>
<rect x="1056" y="412" width="3" height="1" fill="#808080"/>
<rect x="1062" y="412" width="3" height="1" fill="#808080"/>
<rect x="1068" y="412" width="3" height="1" fill="#808080"/>
<rect x="1074" y="412" width="3" height="1" fill="#808080"/>
<rect x="1080" y="412" width="3" height="1" fill="#808080"/>
<rect x="1086" y="412" width="3" height="1" fill="#808080"/>
<rect x="1092" y="412" width="3" height="1" fill="#808080"/>
<rect x="1098" y="412" width="3" height="1" fill="#808080"/>
<rect x="1104" y="412" width="3" height="1" fill="#808080"/>
<rect x="1110" y="412" width="3" height="1" fill="#808080"/>
<rect x="1116" y="412" width="3" height="1" fill="#808080"/>
<rect x="1122" y="412" width="3" height="1" fill="#808080"/>
<rect x="1128" y="412" width="3" height="1" fill="#808080"/>
<rect x="1134" y="412" width="3" height="1" fill="#808080"/>
<rect x="1140" y="412" width="3" height="1" fill="#808080"/>
<rect x="1146" y="412" width="3" height="1" fill="#808080"/>
<rect x="1152" y="412" width="3" height="1" fill="#808080"/>
<rect x="1158" y="412" width="3" height="1" fill="#808080"/>
<rect x="1164" y="412" width="3" height="1" fill="#808080"/>
<rect x="1170" y="412" width="3" height="1" fill="#808080"/>
<rect x="1176" y="412" width="3" height="1" fill="#808080"/>
<rect x="1182" y="412" width="3" height="1" fill="#808080"/>
<rect x="1188" y="412" width="3" height="1" fill="#808080"/>
<rect x="1194" y="412" width="3" height="1" fill="#808080"/>
<rect x="1200" y="412" width="3" height="1" fill="#808080"/>
<rect x="1206" y="412" width="3" height="1" fill="#808080"/>
<rect x="1212" y="412" width="3" height="1" fill="#808080"/>
<rect x="1218" y="412" width="3" height="1" fill="#808080"/>
<rect x="1224" y="412" width="3" height="1" fill="#808080"/>
<rect x="1230" y="412" width="3" height="1" fill="#808080"/>
<rect x="1236" y="412" width="3" height="1" fill="#808080"/>
<rect x="1242" y="412" width="3" height="1" fill="#808080"/>
<rect x="1248" y="412" width="3" height="1" fill="#808080"/>
<rect x="1254" y="412" width="3" height="1" fill="#808080"/>
<rect x="1260" y="412" width="3" height="1" fill="#808080"/>
<rect x="1266" y="412" width="3" height="1" fill="#808080"/>
<rect x="1272" y="412" width="3" height="1" fill="#808080"/>
<rect x="1278" y="412" width="3" height="1" fill="#808080"/>
<rect x="1284" y="412" width="3" height="1" fill="#808080"/>
<rect x="1290" y="412" width="3" height="1" fill="#808080"/>
<rect x="1296" y="412" width="3" height="1" fill="#808080"/>
<rect x="1302" y="412" width="3" height="1" fill="#808080"/>
<rect x="1308" y="412" width="3" height="1" fill="#808080"/>
<rect x="1314" y="412" width="3" height="1" fill="#808080"/>
<rect x="1320" y="412" width="3" height="1" fill="#808080"/>
<rect x="1326" y="412" width="3" height="1" fill="#808080"/>
<rect x="1332" y="412" width="3" height="1" fill="#808080"/>
<rect x="738" y="430" width="3" height="1" fill="#808080"/>
<rect x="744" y="430" width="3" height="1" fill="#808080"/>
<rect x="750" y="430" width="3" height="1" fill="#808080"/>
<rect x="756" y="430" width="3" height="1" fill="#808080"/>
<rect x="762" y="430" width="3" height="1" fill="#808080"/>
<rect x="768" y="430" width="3" height="1" fill="#808080"/>
<rect x="774" y="430" width="3" height="1" fill="#808080"/>
<rect x="780" y="430" width="3" height="1" fill="#808080"/>
<rect x="786" y="430" width="3" height="1" fill="#808080"/>
<rect x="792" y="430" width="3" height="1" fill="#808080"/>
<rect x="798" y="430" width="3" height="1" fill="#808080"/>
<rect x="804" y="430" width="3" height="1" fill="#808080"/>
<rect x="810" y="430" width="3" height="1" fill="#808080"/>
<rect x="816" y="430" width="3" height="1" fill="#808080"/>
<rect x="822" y="430" width="3" height="1" fill="#808080"/>
<rect x="828" y="430" width="3" height="1" fill="#808080"/>
<rect x="834" y="430" width="3" height="1" fill="#808080"/>
<rect x="840" y="430" width="3" height="1" fill="#808080"/>
<rect x="846" y="430" width="3" height="1" fill="#808080"/>
<rect x="852" y="430" width="3" height="1" fill="#808080"/>
<rect x="858" y="430" width="3" height="1" fill="#808080"/>
<rect x="864" y="430" width="3" height="1" fill="#808080"/>
<rect x="870" y="430" width="3" height="1" fill="#808080"/>
<rect x="876" y="430" width="3" height="1" fill="#808080"/>
<rect x="882" y="430" width="3" height="1" fill="#808080"/>
<rect x="888" y="430" width="3" height="1" fill="#808080"/>
<rect x="894" y="430" width="3" height="1" fill="#808080"/>
<rect x="900" y="430" width="3" height="1" fill="#808080"/>
<rect x="906" y="430" width="3" height="1" fill="#808080"/>
<rect x="912" y="430" width="3" height="1" fill="#808080"/>
<rect x="918" y="430" width="3" height="1" fill="#808080"/>
<rect x="924" y="430" width="3" height="1" fill="#808080"/>
<rect x="930" y="430" width="3" height="1" fill="#808080"/>
<rect x="936" y="430" width="3" height="1" fill="#808080"/>
<rect x="942" y="430" width="3" height="1" fill="#808080"/>
<rect x="948" y="430" width="3" height="1" fill="#808080"/>
<rect x="954" y="430" width="3" height="1" fill="#808080"/>
<rect x="960" y="430" width="3" height="1" fill="#808080"/>
<rect x="966" y="430" width="3" height="1" fill="#808080"/>
<rect x="972" y="430" width="3" height="1" fill="#808080"/>
<rect x="978" y="430" width="3" height="1" fill="#808080"/>
<rect x="984" y="430" width="3" height="1" fill="#808080"/>
<rect x="990" y="430" width="3" height="1" fill="#808080"/>
<rect x="996" y="430" width="3" height="1" fill="#808080"/>
<rect x="1002" y="430" width="3" height="1" fill="#808080"/>
<rect x="1008" y="430" width="3" height="1" fill="#808080"/>
<rect x="1014" y="430" width="3" height="1" fill="#808080"/>
<rect x="1020" y="430" width="3" height="1" fill="#808080"/>
<rect x="1026" y="430" width="3" height="1" fill="#808080"/>
<rect x="1032" y="430" width="3" height="1" fill="#808080"/>
<rect x="1038" y="430" width="3" height="1" fill="#808080"/>
<rect x="1044" y="430" width="3" height="1" fill="#808080"/>
<rect x="1050" y="430" width="3" height="1" fill="#808080"/>
<rect x="1056" y="430" width="3" height="1" fill="#808080"/>
<rect x="1062" y="430" width="3" height="1" fill="#808080"/>
<rect x="1068" y="430" width="3" height="1" fill="#808080"/>
<rect x="1074" y="430" width="3" height="1" fill="#808080"/>
<rect x="1080" y="430" width="3" height="1" fill="#808080"/>
<rect x="1086" y="430" width="3" height="1" fill="#808080"/>
<rect x="1092" y="430" width="3" height="1" fill="#808080"/>
<rect x="1098" y="430" width="3" height="1" fill="#808080"/>
<rect x="1104" y="430" width="3" height="1" fill="#808080"/>
<rect x="1110" y="430" width="3" height="1" fill="#808080"/>
<rect x="1116" y="430" width="3" height="1" fill="#808080"/>
<rect x="1122" y="430" width="3" height="1" fill="#808080"/>
<rect x="1128" y="430" width="3" height="1" fill="#808080"/>
<rect x="1134" y="430" width="3" height="1" fill="#808080"/>
<rect x="1140" y="430" width="3" height="1" fill="#808080"/>
<rect x="1146" y="430" width="3" height="1" fill="#808080"/>
<rect x="1152" y="430" width="3" height="1" fill="#808080"/>
<rect x="1158" y="430" width="3" height="1" fill="#808080"/>
<rect x="1164" y="430" width="3" height="1" fill="#808080"/>
<rect x="1170" y="430" width="3" height="1" fill="#808080"/>
<rect x="1176" y="430" width="3" height="1" fill="#808080"/>
<rect x="1182" y="430" width="3" height="1" fill="#808080"/>
<rect x="1188" y="430" width="3" height="1" fill="#808080"/>
<rect x="1194" y="430" width="3" height="1" fill="#808080"/>
<rect x="1200" y="430" width="3" height="1" fill="#808080"/>
<rect x="1206" y="430" width="3" height="1" fill="#808080"/>
<rect x="1212" y="430" width="3" height="1" fill="#808080"/>
<rect x="1218" y="430" width="3" height="1" fill="#808080"/>
<rect x="1224" y="430" width="3" height="1" fill="#808080"/>
<rect x="1230" y="430" width="3" height="1" fill="#808080"/>
<rect x="1236" y="430" width="3" height="1" fill="#808080"/>
<rect x="1242" y="430" width="3" height="1" fill="#808080"/>
<rect x="1248" y="430" width="3" height="1" fill="#808080"/>
<rect x="1254" y="430" width="3" height="1" fill="#808080"/>
<rect x="1260" y="430" width="3" height="1" fill="#808080"/>
<rect x="1266" y="430" width="3" height="1" fill="#808080"/>
<rect x="1272" y="430" width="3" height="1" fill="#808080"/>
<rect x="1278" y="430" width="3" height="1" fill="#808080"/>
<rect x="1284" y="430" width="3" height="1" fill="#808080"/>
<rect x="1290" y="430" width="3" height="1" fill="#808080"/>
<rect x="1296" y="430" width="3" height="1" fill="#808080"/>
<rect x="1302" y="430" width="3" height="1" fill="#808080"/>
<rect x="1308" y="430" width="3" height="1" fill="#808080"/>
<rect x="1314" y="430" width="3" height="1" fill="#808080"/>
<rect x="1320" y="430" width="3" height="1" fill="#808080"/>
<rect x="1326" y="430" width="3" height="1" fill="#808080"/>
<rect x="1332" y="430" width="3" height="1" fill="#808080"/>
<rect x="738" y="447" width="3" height="1" fill="#808080"/>
<rect x="744" y="447" width="3" height="1" fill="#808080"/>
<rect x="750" y="447" width="3" height="1" fill="#808080"/>
<rect x="756" y="447" width="3" height="1" fill="#808080"/>
<rect x="762" y="447" width="3" height="1" fill="#808080"/>
<rect x="768" y="447" width="3" height="1" fill="#808080"/>
<rect x="774" y="447" width="3" height="1" fill="#808080"/>
<rect x="780" y="447" width="3" height="1" fill="#808080"/>
<rect x="786" y="447" width="3" height="1" fill="#808080"/>
<rect x="792" y="447" width="3" height="1" fill="#808080"/>
<rect x="798" y="447" width="3" height="1" fill="#808080"/>
<rect x="804" y="447" width="3" height="1" fill="#808080"/>
<rect x="810" y="447" width="3" height="1" fill="#808080"/>
<rect x="816" y="447" width="3" height="1" fill="#808080"/>
<rect x="822" y="447" width="3" height="1" fill="#808080"/>
<rect x="828" y="447" width="3" height="1" fill="#808080"/>
<rect x="834" y="447" width="3" height="1" fill="#808080"/>
<rect x="840" y="447" width="3" height="1" fill="#808080"/>
<rect x="846" y="447" width="3" height="1" fill="#808080"/>
<rect x="852" y="447" width="3" height="1" fill="#808080"/>
<rect x="858" y="447" width="3" height="1" fill="#808080"/>
<rect x="864" y="447" width="3" height="1" fill="#808080"/>
<rect x="870" y="447" width="3" height="1" fill="#808080"/>
<rect x="876" y="447" width="3" height="1" fill="#808080"/>
<rect x="882" y="447" width="3" height="1" fill="#808080"/>
<rect x="888" y="447" width="3" height="1" fill="#808080"/>
<rect x="894" y="447" width="3" height="1" fill="#808080"/>
<rect x="900" y="447" width="3" height="1" fill="#808080"/>
<rect x="906" y="447" width="3" height="1" fill="#808080"/>
<rect x="912" y="447" width="3" height="1" fill="#808080"/>
<rect x="918" y="447" width="3" height="1" fill="#808080"/>
<rect x="924" y="447" width="3" height="1" fill="#808080"/>
<rect x="930" y="447" width="3" height="1" fill="#808080"/>
<rect x="936" y="447" width="3" height="1" fill="#808080"/>
<rect x="942" y="447" width="3" height="1" fill="#808080"/>
<rect x="948" y="447" width="3" height="1" fill="#808080"/>
<rect x="954" y="447" width="3" height="1" fill="#808080"/>
<rect x="960" y="447" width="3" height="1" fill="#808080"/>
<rect x="966" y="447" width="3" height="1" fill="#808080"/>
<rect x="972" y="447" width="3" height="1" fill="#808080"/>
<rect x="978" y="447" width="3" height="1" fill="#808080"/>
<rect x="984" y="447" width="3" height="1" fill="#808080"/>
<rect x="990" y="447" width="3" height="1" fill="#808080"/>
<rect x="996" y="447" width="3" height="1" fill="#808080"/>
<rect x="1002" y="447" width="3" height="1" fill="#808080"/>
<rect x="1008" y="447" width="3" height="1" fill="#808080"/>
<rect x="1014" y="447" width="3" height="1" fill="#808080"/>
<rect x="1020" y="447" width="3" height="1" fill="#808080"/>
<rect x="1026" y="447" width="3" height="1" fill="#808080"/>
<rect x="1032" y="447" width="3" height="1" fill="#808080"/>
<rect x="1038" y="447" width="3" height="1" fill="#808080"/>
<rect x="1044" y="447" width="3" height="1" fill="#808080"/>
<rect x="1050" y="447" width="3" height="1" fill="#808080"/>
<rect x="1056" y="447" width="3" height="1" fill="#808080"/>
<rect x="1062" y="447" width="3" height="1" fill="#808080"/>
<rect x="1068" y="447" width="3" height="1" fill="#808080"/>
<rect x="1074" y="447" width="3" height="1" fill="#808080"/>
<rect x="1080" y="447" width="3" height="1" fill="#808080"/>
<rect x="1086" y="447" width="3" height="1" fill="#808080"/>
<rect x="1092" y="447" width="3" height="1" fill="#808080"/>
<rect x="1098" y="447" width="3" height="1" fill="#808080"/>
<rect x="1104" y="447" width="3" height="1" fill="#808080"/>
<rect x="1110" y="447" width="3" height="1" fill="#808080"/>
<rect x="1116" y="447" width="3" height="1" fill="#808080"/>
<rect x="1122" y="447" width="3" height="1" fill="#808080"/>
<rect x="1128" y="447" width="3" height="1" fill="#808080"/>
<rect x="1134" y="447" width="3" height="1" fill="#808080"/>
<rect x="1140" y="447" width="3" height="1" fill="#808080"/>
<rect x="1146" y="447" width="3" height="1" fill="#808080"/>
<rect x="1152" y="447" width="3" height="1" fill="#808080"/>
<rect x="1158" y="447" width="3" height="1" fill="#808080"/>
<rect x="1164" y="447" width="3" height="1" fill="#808080"/>
<rect x="1170" y="447" width="3" height="1" fill="#808080"/>
<rect x="1176" y="447" width="3" height="1" fill="#808080"/>
<rect x="1182" y="447" width="3" height="1" fill="#808080"/>
<rect x="1188" y="447" width="3" height="1" fill="#808080"/>
<rect x="1194" y="447" width="3" height="1" fill="#808080"/>
<rect x="1200" y="447" width="3" height="1" fill="#808080"/>
<rect x="1206" y="447" width="3" height="1" fill="#808080"/>
<rect x="1212" y="447" width="3" height="1" fill="#808080"/>
<rect x="1218" y="447" width="3" height="1" fill="#808080"/>
<rect x="1224" y="447" width="3" height="1" fill="#808080"/>
<rect x="1230" y="447" width="3" height="1" fill="#808080"/>
<rect x="1236" y="447" width="3" height="1" fill="#808080"/>
<rect x="1242" y="447" width="3" height="1" fill="#808080"/>
<rect x="1248" y="447" width="3" height="1" fill="#808080"/>
<rect x="1254" y="447" width="3" height="1" fill="#808080"/>
<rect x="1260" y="447" width="3" height="1" fill="#808080"/>
<rect x="1266" y="447" width="3" height="1" fill="#808080"/>
<rect x="1272" y="447" width="3" height="1" fill="#808080"/>
<rect x="1278" y="447" width="3" height="1" fill="#808080"/>
<rect x="1284" y="447" width="3" height="1" fill="#808080"/>
<rect x="1290" y="447" width="3" height="1" fill="#808080"/>
<rect x="1296" y="447" width="3" height="1" fill="#808080"/>
<rect x="1302" y="447" width="3" height="1" fill="#808080"/>
<rect x="1308" y="447" width="3" height="1" fill="#808080"/>
<rect x="1314" y="447" width="3" height="1" fill="#808080"/>
<rect x="1320" y="447" width="3" height="1" fill="#808080"/>
<rect x="1326" y="447" width="3" height="1" fill="#808080"/>
<rect x="1332" y="447" width="3" height="1" fill="#808080"/>
<rect x="738" y="465" width="3" height="1" fill="#808080"/>
<rect x="744" y="465" width="3" height="1" fill="#808080"/>
<rect x="750" y="465" width="3" height="1" fill="#808080"/>
<rect x="756" y="465" width="3" height="1" fill="#808080"/>
<rect x="762" y="465" width="3" height="1" fill="#808080"/>
<rect x="768" y="465" width="3" height="1" fill="#808080"/>
<rect x="774" y="465" width="3" height="1" fill="#808080"/>
<rect x="780" y="465" width="3" height="1" fill="#808080"/>
<rect x="786" y="465" width="3" height="1" fill="#808080"/>
<rect x="792" y="465" width="3" height="1" fill="#808080"/>
<rect x="798" y="465" width="3" height="1" fill="#808080"/>
<rect x="804" y="465" width="3" height="1" fill="#808080"/>
<rect x="810" y="465" width="3" height="1" fill="#808080"/>
<rect x="816" y="465" width="3" height="1" fill="#808080"/>
<rect x="822" y="465" width="3" height="1" fill="#808080"/>
<rect x="828" y="465" width="3" height="1" fill="#808080"/>
<rect x="834" y="465" width="3" height="1" fill="#808080"/>
<rect x="840" y="465" width="3" height="1" fill="#808080"/>
<rect x="846" y="465" width="3" height="1" fill="#808080"/>
<rect x="852" y="465" width="3" height="1" fill="#808080"/>
<rect x="858" y="465" width="3" height="1" fill="#808080"/>
<rect x="864" y="465" width="3" height="1" fill="#808080"/>
<rect x="870" y="465" width="3" height="1" fill="#808080"/>
<rect x="876" y="465" width="3" height="1" fill="#808080"/>
<rect x="882" y="465" width="3" height="1" fill="#808080"/>
<rect x="888" y="465" width="3" height="1" fill="#808080"/>
<rect x="894" y="465" width="3" height="1" fill="#808080"/>
<rect x="900" y="465" width="3" height="1" fill="#808080"/>
<rect x="906" y="465" width="3" height="1" fill="#808080"/>
<rect x="912" y="465" width="3" height="1" fill="#808080"/>
<rect x="918" y="465" width="3" height="1" fill="#808080"/>
<rect x="924" y="465" width="3" height="1" fill="#808080"/>
<rect x="930" y="465" width="3" height="1" fill="#808080"/>
<rect x="936" y="465" width="3" height="1" fill="#808080"/>
<rect x="942" y="465" width="3" height="1" fill="#808080"/>
<rect x="948" y="465" width="3" height="1" fill="#808080"/>
<rect x="954" y="465" width="3" height="1" fill="#808080"/>
<rect x="960" y="465" width="3" height="1" fill="#808080"/>
<rect x="966" y="465" width="3" height="1" fill="#808080"/>
<rect x="972" y="465" width="3" height="1" fill="#808080"/>
<rect x="978" y="465" width="3" height="1" fill="#808080"/>
<rect x="984" y="465" width="3" height="1" fill="#808080"/>
<rect x="990" y="465" width="3" height="1" fill="#808080"/>
<rect x="996" y="465" width="3" height="1" fill="#808080"/>
<rect x="1002" y="465" width="3" height="1" fill="#808080"/>
<rect x="1008" y="465" width="3" height="1" fill="#808080"/>
<rect x="1014" y="465" width="3" height="1" fill="#808080"/>
<rect x="1020" y="465" width="3" height="1" fill="#808080"/>
<rect x="1026" y="465" width="3" height="1" fill="#808080"/>
<rect x="1032" y="465" width="3" height="1" fill="#808080"/>
<rect x="1038" y="465" width="3" height="1" fill="#808080"/>
<rect x="1044" y="465" width="3" height="1" fill="#808080"/>
<rect x="1050" y="465" width="3" height="1" fill="#808080"/>
<rect x="1056" y="465" width="3" height="1" fill="#808080"/>
<rect x="1062" y="465" width="3" height="1" fill="#808080"/>
<rect x="1068" y="465" width="3" height="1" fill="#808080"/>
<rect x="1074" y="465" width="3" height="1" fill="#808080"/>
<rect x="1080" y="465" width="3" height="1" fill="#808080"/>
<rect x="1086" y="465" width="3" height="1" fill="#808080"/>
<rect x="1092" y="465" width="3" height="1" fill="#808080"/>
<rect x="1098" y="465" width="3" height="1" fill="#808080"/>
<rect x="1104" y="465" width="3" height="1" fill="#808080"/>
<rect x="1110" y="465" width="3" height="1" fill="#808080"/>
<rect x="1116" y="465" width="3" height="1" fill="#808080"/>
<rect x="1122" y="465" width="3" height="1" fill="#808080"/>
<rect x="1128" y="465" width="3" height="1" fill="#808080"/>
<rect x="1134" y="465" width="3" height="1" fill="#808080"/>
<rect x="1140" y="465" width="3" height="1" fill="#808080"/>
<rect x="1146" y="465" width="3" height="1" fill="#808080"/>
<rect x="1152" y="465" width="3" height="1" fill="#808080"/>
<rect x="1158" y="465" width="3" height="1" fill="#808080"/>
<rect x="1164" y="465" width="3" height="1" fill="#808080"/>
<rect x="1170" y="465" width="3" height="1" fill="#808080"/>
<rect x="1176" y="465" width="3" height="1" fill="#808080"/>
<rect x="1182" y="465" width="3" height="1" fill="#808080"/>
<rect x="1188" y="465" width="3" height="1" fill="#808080"/>
<rect x="1194" y="465" width="3" height="1" fill="#808080"/>
<rect x="1200" y="465" width="3" height="1" fill="#808080"/>
<rect x="1206" y="465" width="3" height="1" fill="#808080"/>
<rect x="1212" y="465" width="3" height="1" fill="#808080"/>
<rect x="1218" y="465" width="3" height="1" fill="#808080"/>
<rect x="1224" y="465" width="3" height="1" fill="#808080"/>
<rect x="1230" y="465" width="3" height="1" fill="#808080"/>
<rect x="1236" y="465" width="3" height="1" fill="#808080"/>
<rect x="1242" y="465" width="3" height="1" fill="#808080"/>
<rect x="1248" y="465" width="3" height="1" fill="#808080"/>
<rect x="1254" y="465" width="3" height="1" fill="#808080"/>
<rect x="1260" y="465" width="3" height="1" fill="#808080"/>
<rect x="1266" y="465" width="3" height="1" fill="#808080"/>
<rect x="1272" y="465" width="3" height="1" fill="#808080"/>
<rect x="1278" y="465" width="3" height="1" fill="#808080"/>
<rect x="1284" y="465" width="3" height="1" fill="#808080"/>
<rect x="1290" y="465" width="3" height="1" fill="#808080"/>
<rect x="1296" y="465" width="3" height="1" fill="#808080"/>
<rect x="1302" y="465" width="3" height="1" fill="#808080"/>
<rect x="1308" y="465" width="3" height="1" fill="#808080"/>
<rect x="1314" y="465" width="3" height="1" fill="#808080"/>
<rect x="1320" y="465" width="3" height="1" fill="#808080"/>
<rect x="1326" y="465" width="3" height="1" fill="#808080"/>
<rect x="1332" y="465" width="3" height="1" fill="#808080"/>
<rect x="738" y="482" width="3" height="1" fill="#808080"/>
<rect x="744" y="482" width="3" height="1" fill="#808080"/>
<rect x="750" y="482" width="3" height="1" fill="#808080"/>
<rect x="756" y="482" width="3" height="1" fill="#808080"/>
<rect x="762" y="482" width="3" height="1" fill="#808080"/>
<rect x="768" y="482" width="3" height="1" fill="#808080"/>
<rect x="774" y="482" width="3" height="1" fill="#808080"/>
<rect x="780" y="482" width="3" height="1" fill="#808080"/>
<rect x="786" y="482" width="3" height="1" fill="#808080"/>
<rect x="792" y="482" width="3" height="1" fill="#808080"/>
<rect x="798" y="482" width="3" height="1" fill="#808080"/>
<rect x="804" y="482" width="3" height="1" fill="#808080"/>
<rect x="810" y="482" width="3" height="1" fill="#808080"/>
<rect x="816" y="482" width="3" height="1" fill="#808080"/>
<rect x="822" y="482" width="3" height="1" fill="#808080"/>
<rect x="828" y="482" width="3" height="1" fill="#808080"/>
<rect x="834" y="482" width="3" height="1" fill="#808080"/>
<rect x="840" y="482" width="3" height="1" fill="#808080"/>
<rect x="846" y="482" width="3" height="1" fill="#808080"/>
<rect x="852" y="482" width="3" height="1" fill="#808080"/>
<rect x="858" y="482" width="3" height="1" fill="#808080"/>
<rect x="864" y="482" width="3" height="1" fill="#808080"/>
<rect x="870" y="482" width="3" height="1" fill="#808080"/>
<rect x="876" y="482" width="3" height="1" fill="#808080"/>
<rect x="882" y="482" width="3" height="1" fill="#808080"/>
<rect x="888" y="482" width="3" height="1" fill="#808080"/>
<rect x="894" y="482" width="3" height="1" fill="#808080"/>
<rect x="900" y="482" width="3" height="1" fill="#808080"/>
<rect x="906" y="482" width="3" height="1" fill="#808080"/>
<rect x="912" y="482" width="3" height="1" fill="#808080"/>
<rect x="918" y="482" width="3" height="1" fill="#808080"/>
<rect x="924" y="482" width="3" height="1" fill="#808080"/>
<rect x="930" y="482" width="3" height="1" fill="#808080"/>
<rect x="936" y="482" width="3" height="1" fill="#808080"/>
<rect x="942" y="482" width="3" height="1" fill="#808080"/>
<rect x="948" y="482" width="3" height="1" fill="#808080"/>
<rect x="954" y="482" width="3" height="1" fill="#808080"/>
<rect x="960" y="482" width="3" height="1" fill="#808080"/>
<rect x="966" y="482" width="3" height="1" fill="#808080"/>
<rect x="972" y="482" width="3" height="1" fill="#808080"/>
<rect x="978" y="482" width="3" height="1" fill="#808080"/>
<rect x="984" y="482" width="3" height="1" fill="#808080"/>
<rect x="990" y="482" width="3" height="1" fill="#808080"/>
<rect x="996" y="482" width="3" height="1" fill="#808080"/>
<rect x="1002" y="482" width="3" height="1" fill="#808080"/>
<rect x="1008" y="482" width="3" height="1" fill="#808080"/>
<rect x="1014" y="482" width="3" height="1" fill="#808080"/>
<rect x="1020" y="482" width="3" height="1" fill="#808080"/>
<rect x="1026" y="482" width="3" height="1" fill="#808080"/>
<rect x="1032" y="482" width="3" height="1" fill="#808080"/>
<rect x="1038" y="482" width="3" height="1" fill="#808080"/>
<rect x="1044" y="482" width="3" height="1" fill="#808080"/>
<rect x="1050" y="482" width="3" height="1" fill="#808080"/>
<rect x="1056" y="482" width="3" height="1" fill="#808080"/>
<rect x="1062" y="482" width="3" height="1" fill="#808080"/>
<rect x="1068" y="482" width="3" height="1" fill="#808080"/>
<rect x="1074" y="482" width="3" height="1" fill="#808080"/>
<rect x="1080" y="482" width="3" height="1" fill="#808080"/>
<rect x="1086" y="482" width="3" height="1" fill="#808080"/>
<rect x="1092" y="482" width="3" height="1" fill="#808080"/>
<rect x="1098" y="482" width="3" height="1" fill="#808080"/>
<rect x="1104" y="482" width="3" height="1" fill="#808080"/>
<rect x="1110" y="482" width="3" height="1" fill="#808080"/>
<rect x="1116" y="482" width="3" height="1" fill="#808080"/>
<rect x="1122" y="482" width="3" height="1" fill="#808080"/>
<rect x="1128" y="482" width="3" height="1" fill="#808080"/>
<rect x="1134" y="482" width="3" height="1" fill="#808080"/>
<rect x="1140" y="482" width="3" height="1" fill="#808080"/>
<rect x="1146" y="482" width="3" height="1" fill="#808080"/>
<rect x="1152" y="482" width="3" height="1" fill="#808080"/>
<rect x="1158" y="482" width="3" height="1" fill="#808080"/>
<rect x="1164" y="482" width="3" height="1" fill="#808080"/>
<rect x="1170" y="482" width="3" height="1" fill="#808080"/>
<rect x="1176" y="482" width="3" height="1" fill="#808080"/>
<rect x="1182" y="482" width="3" height="1" fill="#808080"/>
<rect x="1188" y="482" width="3" height="1" fill="#808080"/>
<rect x="1194" y="482" width="3" height="1" fill="#808080"/>
<rect x="1200" y="482" width="3" height="1" fill="#808080"/>
<rect x="1206" y="482" width="3" height="1" fill="#808080"/>
<rect x="1212" y="482" width="3" height="1" fill="#808080"/>
<rect x="1218" y="482" width="3" height="1" fill="#808080"/>
<rect x="1224" y="482" width="3" height="1" fill="#808080"/>
<rect x="1230" y="482" width="3" height="1" fill="#808080"/>
<rect x="1236" y="482" width="3" height="1" fill="#808080"/>
<rect x="1242" y="482" width="3" height="1" fill="#808080"/>
<rect x="1248" y="482" width="3" height="1" fill="#808080"/>
<rect x="1254" y="482" width="3" height="1" fill="#808080"/>
<rect x="1260" y="482" width="3" height="1" fill="#808080"/>
<rect x="1266" y="482" width="3" height="1" fill="#808080"/>
<rect x="1272" y="482" width="3" height="1" fill="#808080"/>
<rect x="1278" y="482" width="3" height="1" fill="#808080"/>
<rect x="1284" y="482" width="3" height="1" fill="#808080"/>
<rect x="1290" y="482" width="3" height="1" fill="#808080"/>
<rect x="1296" y="482" width="3" height="1" fill="#808080"/>
<rect x="1302" y="482" width="3" height="1" fill="#808080"/>
<rect x="1308" y="482" width="3" height="1" fill="#808080"/>
<rect x="1314" y="482" width="3" height="1" fill="#808080"/>
<rect x="1320" y="482" width="3" height="1" fill="#808080"/>
<rect x="1326" y="482" width="3" height="1" fill="#808080"/>
<rect x="1332" y="482" width="3" height="1" fill="#808080"/>
<rect x="738" y="500" width="3" height="1" fill="#808080"/>
<rect x="744" y="500" width="3" height="1" fill="#808080"/>
<rect x="750" y="500" width="3" height="1" fill="#808080"/>
<rect x="756" y="500" width="3" height="1" fill="#808080"/>
<rect x="762" y="500" width="3" height="1" fill="#808080"/>
<rect x="768" y="500" width="3" height="1" fill="#808080"/>
<rect x="774" y="500" width="3" height="1" fill="#808080"/>
<rect x="780" y="500" width="3" height="1" fill="#808080"/>
<rect x="786" y="500" width="3" height="1" fill="#808080"/>
<rect x="792" y="500" width="3" height="1" fill="#808080"/>
<rect x="798" y="500" width="3" height="1" fill="#808080"/>
<rect x="804" y="500" width="3" height="1" fill="#808080"/>
<rect x="810" y="500" width="3" height="1" fill="#808080"/>
<rect x="816" y="500" width="3" height="1" fill="#808080"/>
<rect x="822" y="500" width="3" height="1" fill="#808080"/>
<rect x="828" y="500" width="3" height="1" fill="#808080"/>
<rect x="834" y="500" width="3" height="1" fill="#808080"/>
<rect x="840" y="500" width="3" height="1" fill="#808080"/>
<rect x="846" y="500" width="3" height="1" fill="#808080"/>
<rect x="852" y="500" width="3" height="1" fill="#808080"/>
<rect x="858" y="500" width="3" height="1" fill="#808080"/>
<rect x="864" y="500" width="3" height="1" fill="#808080"/>
<rect x="870" y="500" width="3" height="1" fill="#808080"/>
<rect x="876" y="500" width="3" height="1" fill="#808080"/>
<rect x="882" y="500" width="3" height="1" fill="#808080"/>
<rect x="888" y="500" width="3" height="1" fill="#808080"/>
<rect x="894" y="500" width="3" height="1" fill="#808080"/>
<rect x="900" y="500" width="3" height="1" fill="#808080"/>
<rect x="906" y="500" width="3" height="1" fill="#808080"/>
<rect x="912" y="500" width="3" height="1" fill="#808080"/>
<rect x="918" y="500" width="3" height="1" fill="#808080"/>
<rect x="924" y="500" width="3" height="1" fill="#808080"/>
<rect x="930" y="500" width="3" height="1" fill="#808080"/>
<rect x="936" y="500" width="3" height="1" fill="#808080"/>
<rect x="942" y="500" width="3" height="1" fill="#808080"/>
<rect x="948" y="500" width="3" height="1" fill="#808080"/>
<rect x="954" y="500" width="3" height="1" fill="#808080"/>
<rect x="960" y="500" width="3" height="1" fill="#808080"/>
<rect x="966" y="500" width="3" height="1" fill="#808080"/>
<rect x="972" y="500" width="3" height="1" fill="#808080"/>
<rect x="978" y="500" width="3" height="1" fill="#808080"/>
<rect x="984" y="500" width="3" height="1" fill="#808080"/>
<rect x="990" y="500" width="3" height="1" fill="#808080"/>
<rect x="996" y="500" width="3" height="1" fill="#808080"/>
<rect x="1002" y="500" width="3" height="1" fill="#808080"/>
<rect x="1008" y="500" width="3" height="1" fill="#808080"/>
<rect x="1014" y="500" width="3" height="1" fill="#808080"/>
<rect x="1020" y="500" width="3" height="1" fill="#808080"/>
<rect x="1026" y="500" width="3" height="1" fill="#808080"/>
<rect x="1032" y="500" width="3" height="1" fill="#808080"/>
<rect x="1038" y="500" width="3" height="1" fill="#808080"/>
<rect x="1044" y="500" width="3" height="1" fill="#808080"/>
<rect x="1050" y="500" width="3" height="1" fill="#808080"/>
<rect x="1056" y="500" width="3" height="1" fill="#808080"/>
<rect x="1062" y="500" width="3" height="1" fill="#808080"/>
<rect x="1068" y="500" width="3" height="1" fill="#808080"/>
<rect x="1074" y="500" width="3" height="1" fill="#808080"/>
<rect x="1080" y="500" width="3" height="1" fill="#808080"/>
<rect x="1086" y="500" width="3" height="1" fill="#808080"/>
<rect x="1092" y="500" width="3" height="1" fill="#808080"/>
<rect x="1098" y="500" width="3" height="1" fill="#808080"/>
<rect x="1104" y="500" width="3" height="1" fill="#808080"/>
<rect x="1110" y="500" width="3" height="1" fill="#808080"/>
<rect x="1116" y="500" width="3" height="1" fill="#808080"/>
<rect x="1122" y="500" width="3" height="1" fill="#808080"/>
<rect x="1128" y="500" width="3" height="1" fill="#808080"/>
<rect x="1134" y="500" width="3" height="1" fill="#808080"/>
<rect x="1140" y="500" width="3" height="1" fill="#808080"/>
<rect x="1146" y="500" width="3" height="1" fill="#808080"/>
<rect x="1152" y="500" width="3" height="1" fill="#808080"/>
<rect x="1158" y="500" width="3" height="1" fill="#808080"/>
<rect x="1164" y="500" width="3" height="1" fill="#808080"/>
<rect x="1170" y="500" width="3" height="1" fill="#808080"/>
<rect x="1176" y="500" width="3" height="1" fill="#808080"/>
<rect x="1182" y="500" width="3" height="1" fill="#808080"/>
<rect x="1188" y="500" width="3" height="1" fill="#808080"/>
<rect x="1194" y="500" width="3" height="1" fill="#808080"/>
<rect x="1200" y="500" width="3" height="1" fill="#808080"/>
<rect x="1206" y="500" width="3" height="1" fill="#808080"/>
<rect x="1212" y="500" width="3" height="1" fill="#808080"/>
<rect x="1218" y="500" width="3" height="1" fill="#808080"/>
<rect x="1224" y="500" width="3" height="1" fill="#808080"/>
<rect x="1230" y="500" width="3" height="1" fill="#808080"/>
<rect x="1236" y="500" width="3" height="1" fill="#808080"/>
<rect x="1242" y="500" width="3" height="1" fill="#808080"/>
<rect x="1248" y="500" width="3" height="1" fill="#808080"/>
<rect x="1254" y="500" width="3" height="1" fill="#808080"/>
<rect x="1260" y="500" width="3" height="1" fill="#808080"/>
<rect x="1266" y="500" width="3" height="1" fill="#808080"/>
<rect x="1272" y="500" width="3" height="1" fill="#808080"/>
<rect x="1278" y="500" width="3" height="1" fill="#808080"/>
<rect x="1284" y="500" width="3" height="1" fill="#808080"/>
<rect x="1290" y="500" width="3" height="1" fill="#808080"/>
<rect x="1296" y="500" width="3" height="1" fill="#808080"/>
<rect x="1302" y="500" width="3" height="1" fill="#808080"/>
<rect x="1308" y="500" width="3" height="1" fill="#808080"/>
<rect x="1314" y="500" width="3" height="1" fill="#808080"/>
<rect x="1320" y="500" width="3" height="1" fill="#808080"/>
<rect x="1326" y="500" width="3" height="1" fill="#808080"/>
<rect x="1332" y="500" width="3" height="1" fill="#808080"/>
<rect x="738" y="517" width="3" height="1" fill="#808080"/>
<rect x="744" y="517" width="3" height="1" fill="#808080"/>
<rect x="750" y="517" width="3" height="1" fill="#808080"/>
<rect x="756" y="517" width="3" height="1" fill="#808080"/>
<rect x="762" y="517" width="3" height="1" fill="#808080"/>
<rect x="768" y="517" width="3" height="1" fill="#808080"/>
<rect x="774" y="517" width="3" height="1" fill="#808080"/>
<rect x="780" y="517" width="3" height="1" fill="#808080"/>
<rect x="786" y="517" width="3" height="1" fill="#808080"/>
<rect x="792" y="517" width="3" height="1" fill="#808080"/>
<rect x="798" y="517" width="3" height="1" fill="#808080"/>
<rect x="804" y="517" width="3" height="1" fill="#808080"/>
<rect x="810" y="517" width="3" height="1" fill="#808080"/>
<rect x="816" y="517" width="3" height="1" fill="#808080"/>
<rect x="822" y="517" width="3" height="1" fill="#808080"/>
<rect x="828" y="517" width="3" height="1" fill="#808080"/>
<rect x="834" y="517" width="3" height="1" fill="#808080"/>
<rect x="840" y="517" width="3" height="1" fill="#808080"/>
<rect x="846" y="517" width="3" height="1" fill="#808080"/>
<rect x="852" y="517" width="3" height="1" fill="#808080"/>
<rect x="858" y="517" width="3" height="1" fill="#808080"/>
<rect x="864" y="517" width="3" height="1" fill="#808080"/>
<rect x="870" y="517" width="3" height="1" fill="#808080"/>
<rect x="876" y="517" width="3" height="1" fill="#808080"/>
<rect x="882" y="517" width="3" height="1" fill="#808080"/>
<rect x="888" y="517" width="3" height="1" fill="#808080"/>
<rect x="894" y="517" width="3" height="1" fill="#808080"/>
<rect x="900" y="517" width="3" height="1" fill="#808080"/>
<rect x="906" y="517" width="3" height="1" fill="#808080"/>
<rect x="912" y="517" width="3" height="1" fill="#808080"/>
<rect x="918" y="517" width="3" height="1" fill="#808080"/>
<rect x="924" y="517" width="3" height="1" fill="#808080"/>
<rect x="930" y="517" width="3" height="1" fill="#808080"/>
<rect x="936" y="517" width="3" height="1" fill="#808080"/>
<rect x="942" y="517" width="3" height="1" fill="#808080"/>
<rect x="948" y="517" width="3" height="1" fill="#808080"/>
<rect x="954" y="517" width="3" height="1" fill="#808080"/>
<rect x="960" y="517" width="3" height="1" fill="#808080"/>
<rect x="966" y="517" width="3" height="1" fill="#808080"/>
<rect x="972" y="517" width="3" height="1" fill="#808080"/>
<rect x="978" y="517" width="3" height="1" fill="#808080"/>
<rect x="984" y="517" width="3" height="1" fill="#808080"/>
<rect x="990" y="517" width="3" height="1" fill="#808080"/>
<rect x="996" y="517" width="3" height="1" fill="#808080"/>
<rect x="1002" y="517" width="3" height="1" fill="#808080"/>
<rect x="1008" y="517" width="3" height="1" fill="#808080"/>
<rect x="1014" y="517" width="3" height="1" fill="#808080"/>
<rect x="1020" y="517" width="3" height="1" fill="#808080"/>
<rect x="1026" y="517" width="3" height="1" fill="#808080"/>
<rect x="1032" y="517" width="3" height="1" fill="#808080"/>
<rect x="1038" y="517" width="3" height="1" fill="#808080"/>
<rect x="1044" y="517" width="3" height="1" fill="#808080"/>
<rect x="1050" y="517" width="3" height="1" fill="#808080"/>
<rect x="1056" y="517" width="3" height="1" fill="#808080"/>
<rect x="1062" y="517" width="3" height="1" fill="#808080"/>
<rect x="1068" y="517" width="3" height="1" fill="#808080"/>
<rect x="1074" y="517" width="3" height="1" fill="#808080"/>
<rect x="1080" y="517" width="3" height="1" fill="#808080"/>
<rect x="1086" y="517" width="3" height="1" fill="#808080"/>
<rect x="1092" y="517" width="3" height="1" fill="#808080"/>
<rect x="1098" y="517" width="3" height="1" fill="#808080"/>
<rect x="1104" y="517" width="3" height="1" fill="#808080"/>
<rect x="1110" y="517" width="3" height="1" fill="#808080"/>
<rect x="1116" y="517" width="3" height="1" fill="#808080"/>
<rect x="1122" y="517" width="3" height="1" fill="#808080"/>
<rect x="1128" y="517" width="3" height="1" fill="#808080"/>
<rect x="1134" y="517" width="3" height="1" fill="#808080"/>
<rect x="1140" y="517" width="3" height="1" fill="#808080"/>
<rect x="1146" y="517" width="3" height="1" fill="#808080"/>
<rect x="1152" y="517" width="3" height="1" fill="#808080"/>
<rect x="1158" y="517" width="3" height="1" fill="#808080"/>
<rect x="1164" y="517" width="3" height="1" fill="#808080"/>
<rect x="1170" y="517" width="3" height="1" fill="#808080"/>
<rect x="1176" y="517" width="3" height="1" fill="#808080"/>
<rect x="1182" y="517" width="3" height="1" fill="#808080"/>
<rect x="1188" y="517" width="3" height="1" fill="#808080"/>
<rect x="1194" y="517" width="3" height="1" fill="#808080"/>
<rect x="1200" y="517" width="3" height="1" fill="#808080"/>
<rect x="1206" y="517" width="3" height="1" fill="#808080"/>
<rect x="1212" y="517" width="3" height="1" fill="#808080"/>
<rect x="1218" y="517" width="3" height="1" fill="#808080"/>
<rect x="1224" y="517" width="3" height="1" fill="#808080"/>
<rect x="1230" y="517" width="3" height="1" fill="#808080"/>
<rect x="1236" y="517" width="3" height="1" fill="#808080"/>
<rect x="1242" y="517" width="3" height="1" fill="#808080"/>
<rect x="1248" y="517" width="3" height="1" fill="#808080"/>
<rect x="1254" y="517" width="3" height="1" fill="#808080"/>
<rect x="1260" y="517" width="3" height="1" fill="#808080"/>
<rect x="1266" y="517" width="3" height="1" fill="#808080"/>
<rect x="1272" y="517" width="3" height="1" fill="#808080"/>
<rect x="1278" y="517" width="3" height="1" fill="#808080"/>
<rect x="1284" y="517" width="3" height="1" fill="#808080"/>
<rect x="1290" y="517" width="3" height="1" fill="#808080"/>
<rect x="1296" y="517" width="3" height="1" fill="#808080"/>
<rect x="1302" y="517" width="3" height="1" fill="#808080"/>
<rect x="1308" y="517" width="3" height="1" fill="#808080"/>
<rect x="1314" y="517" width="3" height="1" fill="#808080"/>
<rect x="1320" y="517" width="3" height="1" fill="#808080"/>
<rect x="1326" y="517" width="3" height="1" fill="#808080"/>
<rect x="1332" y="517" width="3" height="1" fill="#808080"/>
<rect x="738" y="535" width="3" height="1" fill="#808080"/>
<rect x="744" y="535" width="3" height="1" fill="#808080"/>
<rect x="750" y="535" width="3" height="1" fill="#808080"/>
<rect x="756" y="535" width="3" height="1" fill="#808080"/>
<rect x="762" y="535" width="3" height="1" fill="#808080"/>
<rect x="768" y="535" width="3" height="1" fill="#808080"/>
<rect x="774" y="535" width="3" height="1" fill="#808080"/>
<rect x="780" y="535" width="3" height="1" fill="#808080"/>
<rect x="786" y="535" width="3" height="1" fill="#808080"/>
<rect x="792" y="535" width="3" height="1" fill="#808080"/>
<rect x="798" y="535" width="3" height="1" fill="#808080"/>
<rect x="804" y="535" width="3" height="1" fill="#808080"/>
<rect x="810" y="535" width="3" height="1" fill="#808080"/>
<rect x="816" y="535" width="3" height="1" fill="#808080"/>
<rect x="822" y="535" width="3" height="1" fill="#808080"/>
<rect x="828" y="535" width="3" height="1" fill="#808080"/>
<rect x="834" y="535" width="3" height="1" fill="#808080"/>
<rect x="840" y="535" width="3" height="1" fill="#808080"/>
<rect x="846" y="535" width="3" height="1" fill="#808080"/>
<rect x="852" y="535" width="3" height="1" fill="#808080"/>
<rect x="858" y="535" width="3" height="1" fill="#808080"/>
<rect x="864" y="535" width="3" height="1" fill="#808080"/>
<rect x="870" y="535" width="3" height="1" fill="#808080"/>
<rect x="876" y="535" width="3" height="1" fill="#808080"/>
<rect x="882" y="535" width="3" height="1" fill="#808080"/>
<rect x="888" y="535" width="3" height="1" fill="#808080"/>
<rect x="894" y="535" width="3" height="1" fill="#808080"/>
<rect x="900" y="535" width="3" height="1" fill="#808080"/>
<rect x="906" y="535" width="3" height="1" fill="#808080"/>
<rect x="912" y="535" width="3" height="1" fill="#808080"/>
<rect x="918" y="535" width="3" height="1" fill="#808080"/>
<rect x="924" y="535" width="3" height="1" fill="#808080"/>
<rect x="930" y="535" width="3" height="1" fill="#808080"/>
<rect x="936" y="535" width="3" height="1" fill="#808080"/>
<rect x="942" y="535" width="3" height="1" fill="#808080"/>
<rect x="948" y="535" width="3" height="1" fill="#808080"/>
<rect x="954" y="535" width="3" height="1" fill="#808080"/>
<rect x="960" y="535" width="3" height="1" fill="#808080"/>
<rect x="966" y="535" width="3" height="1" fill="#808080"/>
<rect x="972" y="535" width="3" height="1" fill="#808080"/>
<rect x="978" y="535" width="3" height="1" fill="#808080"/>
<rect x="984" y="535" width="3" height="1" fill="#808080"/>
<rect x="990" y="535" width="3" height="1" fill="#808080"/>
<rect x="996" y="535" width="3" height="1" fill="#808080"/>
<rect x="1002" y="535" width="3" height="1" fill="#808080"/>
<rect x="1008" y="535" width="3" height="1" fill="#808080"/>
<rect x="1014" y="535" width="3" height="1" fill="#808080"/>
<rect x="1020" y="535" width="3" height="1" fill="#808080"/>
<rect x="1026" y="535" width="3" height="1" fill="#808080"/>
<rect x="1032" y="535" width="3" height="1" fill="#808080"/>
<rect x="1038" y="535" width="3" height="1" fill="#808080"/>
<rect x="1044" y="535" width="3" height="1" fill="#808080"/>
<rect x="1050" y="535" width="3" height="1" fill="#808080"/>
<rect x="1056" y="535" width="3" height="1" fill="#808080"/>
<rect x="1062" y="535" width="3" height="1" fill="#808080"/>
<rect x="1068" y="535" width="3" height="1" fill="#808080"/>
<rect x="1074" y="535" width="3" height="1" fill="#808080"/>
<rect x="1080" y="535" width="3" height="1" fill="#808080"/>
<rect x="1086" y="535" width="3" height="1" fill="#808080"/>
<rect x="1092" y="535" width="3" height="1" fill="#808080"/>
<rect x="1098" y="535" width="3" height="1" fill="#808080"/>
<rect x="1104" y="535" width="3" height="1" fill="#808080"/>
<rect x="1110" y="535" width="3" height="1" fill="#808080"/>
<rect x="1116" y="535" width="3" height="1" fill="#808080"/>
<rect x="1122" y="535" width="3" height="1" fill="#808080"/>
<rect x="1128" y="535" width="3" height="1" fill="#808080"/>
<rect x="1134" y="535" width="3" height="1" fill="#808080"/>
<rect x="1140" y="535" width="3" height="1" fill="#808080"/>
<rect x="1146" y="535" width="3" height="1" fill="#808080"/>
<rect x="1152" y="535" width="3" height="1" fill="#808080"/>
<rect x="1158" y="535" width="3" height="1" fill="#808080"/>
<rect x="1164" y="535" width="3" height="1" fill="#808080"/>
<rect x="1170" y="535" width="3" height="1" fill="#808080"/>
<rect x="1176" y="535" width="3" height="1" fill="#808080"/>
<rect x="1182" y="535" width="3" height="1" fill="#808080"/>
<rect x="1188" y="535" width="3" height="1" fill="#808080"/>
<rect x="1194" y="535" width="3" height="1" fill="#808080"/>
<rect x="1200" y="535" width="3" height="1" fill="#808080"/>
<rect x="1206" y="535" width="3" height="1" fill="#808080"/>
<rect x="1212" y="535" width="3" height="1" fill="#808080"/>
<rect x="1218" y="535" width="3" height="1" fill="#808080"/>
<rect x="1224" y="535" width="3" height="1" fill="#808080"/>
<rect x="1230" y="535" width="3" height="1" fill="#808080"/>
<rect x="1236" y="535" width="3" height="1" fill="#808080"/>
<rect x="1242" y="535" width="3" height="1" fill="#808080"/>
<rect x="1248" y="535" width="3" height="1" fill="#808080"/>
<rect x="1254" y="535" width="3" height="1" fill="#808080"/>
<rect x="1260" y="535" width="3" height="1" fill="#808080"/>
<rect x="1266" y="535" width="3" height="1" fill="#808080"/>
<rect x="1272" y="535" width="3" height="1" fill="#808080"/>
<rect x="1278" y="535" width="3" height="1" fill="#808080"/>
<rect x="1284" y="535" width="3" height="1" fill="#808080"/>
<rect x="1290" y="535" width="3" height="1" fill="#808080"/>
<rect x="1296" y="535" width="3" height="1" fill="#808080"/>
<rect x="1302" y="535" width="3" height="1" fill="#808080"/>
<rect x="1308" y="535" width="3" height="1" fill="#808080"/>
<rect x="1314" y="535" width="3" height="1" fill="#808080"/>
<rect x="1320" y="535" width="3" height="1" fill="#808080"/>
<rect x="1326" y="535" width="3" height="1" fill="#808080"/>
<rect x="1332" y="535" width="3" height="1" fill="#808080"/>
<rect x="738" y="552" width="3" height="1" fill="#808080"/>
<rect x="744" y="552" width="3" height="1" fill="#808080"/>
<rect x="750" y="552" width="3" height="1" fill="#808080"/>
<rect x="756" y="552" width="3" height="1" fill="#808080"/>
<rect x="762" y="552" width="3" height="1" fill="#808080"/>
<rect x="768" y="552" width="3" height="1" fill="#808080"/>
<rect x="774" y="552" width="3" height="1" fill="#808080"/>
<rect x="780" y="552" width="3" height="1" fill="#808080"/>
<rect x="786" y="552" width="3" height="1" fill="#808080"/>
<rect x="792" y="552" width="3" height="1" fill="#808080"/>
<rect x="798" y="552" width="3" height="1" fill="#808080"/>
<rect x="804" y="552" width="3" height="1" fill="#808080"/>
<rect x="810" y="552" width="3" height="1" fill="#808080"/>
<rect x="816" y="552" width="3" height="1" fill="#808080"/>
<rect x="822" y="552" width="3" height="1" fill="#808080"/>
<rect x="828" y="552" width="3" height="1" fill="#808080"/>
<rect x="834" y="552" width="3" height="1" fill="#808080"/>
<rect x="840" y="552" width="3" height="1" fill="#808080"/>
<rect x="846" y="552" width="3" height="1" fill="#808080"/>
<rect x="852" y="552" width="3" height="1" fill="#808080"/>
<rect x="858" y="552" width="3" height="1" fill="#808080"/>
<rect x="864" y="552" width="3" height="1" fill="#808080"/>
<rect x="870" y="552" width="3" height="1" fill="#808080"/>
<rect x="876" y="552" width="3" height="1" fill="#808080"/>
<rect x="882" y="552" width="3" height="1" fill="#808080"/>
<rect x="888" y="552" width="3" height="1" fill="#808080"/>
<rect x="894" y="552" width="3" height="1" fill="#808080"/>
<rect x="900" y="552" width="3" height="1" fill="#808080"/>
<rect x="906" y="552" width="3" height="1" fill="#808080"/>
<rect x="912" y="552" width="3" height="1" fill="#808080"/>
<rect x="918" y="552" width="3" height="1" fill="#808080"/>
<rect x="924" y="552" width="3" height="1" fill="#808080"/>
<rect x="930" y="552" width="3" height="1" fill="#808080"/>
<rect x="936" y="552" width="3" height="1" fill="#808080"/>
<rect x="942" y="552" width="3" height="1" fill="#808080"/>
<rect x="948" y="552" width="3" height="1" fill="#808080"/>
<rect x="954" y="552" width="3" height="1" fill="#808080"/>
<rect x="960" y="552" width="3" height="1" fill="#808080"/>
<rect x="966" y="552" width="3" height="1" fill="#808080"/>
<rect x="972" y="552" width="3" height="1" fill="#808080"/>
<rect x="978" y="552" width="3" height="1" fill="#808080"/>
<rect x="984" y="552" width="3" height="1" fill="#808080"/>
<rect x="990" y="552" width="3" height="1" fill="#808080"/>
<rect x="996" y="552" width="3" height="1" fill="#808080"/>
<rect x="1002" y="552" width="3" height="1" fill="#808080"/>
<rect x="1008" y="552" width="3" height="1" fill="#808080"/>
<rect x="1014" y="552" width="3" height="1" fill="#808080"/>
<rect x="1020" y="552" width="3" height="1" fill="#808080"/>
<rect x="1026" y="552" width="3" height="1" fill="#808080"/>
<rect x="1032" y="552" width="3" height="1" fill="#808080"/>
<rect x="1038" y="552" width="3" height="1" fill="#808080"/>
<rect x="1044" y="552" width="3" height="1" fill="#808080"/>
<rect x="1050" y="552" width="3" height="1" fill="#808080"/>
<rect x="1056" y="552" width="3" height="1" fill="#808080"/>
<rect x="1062" y="552" width="3" height="1" fill="#808080"/>
<rect x="1068" y="552" width="3" height="1" fill="#808080"/>
<rect x="1074" y="552" width="3" height="1" fill="#808080"/>
<rect x="1080" y="552" width="3" height="1" fill="#808080"/>
<rect x="1086" y="552" width="3" height="1" fill="#808080"/>
<rect x="1092" y="552" width="3" height="1" fill="#808080"/>
<rect x="1098" y="552" width="3" height="1" fill="#808080"/>
<rect x="1104" y="552" width="3" height="1" fill="#808080"/>
<rect x="1110" y="552" width="3" height="1" fill="#808080"/>
<rect x="1116" y="552" width="3" height="1" fill="#808080"/>
<rect x="1122" y="552" width="3" height="1" fill="#808080"/>
<rect x="1128" y="552" width="3" height="1" fill="#808080"/>
<rect x="1134" y="552" width="3" height="1" fill="#808080"/>
<rect x="1140" y="552" width="3" height="1" fill="#808080"/>
<rect x="1146" y="552" width="3" height="1" fill="#808080"/>
<rect x="1152" y="552" width="3" height="1" fill="#808080"/>
<rect x="1158" y="552" width="3" height="1" fill="#808080"/>
<rect x="1164" y="552" width="3" height="1" fill="#808080"/>
<rect x="1170" y="552" width="3" height="1" fill="#808080"/>
<rect x="1176" y="552" width="3" height="1" fill="#808080"/>
<rect x="1182" y="552" width="3" height="1" fill="#808080"/>
<rect x="1188" y="552" width="3" height="1" fill="#808080"/>
<rect x="1194" y="552" width="3" height="1" fill="#808080"/>
<rect x="1200" y="552" width="3" height="1" fill="#808080"/>
<rect x="1206" y="552" width="3" height="1" fill="#808080"/>
<rect x="1212" y="552" width="3" height="1" fill="#808080"/>
<rect x="1218" y="552" width="3" height="1" fill="#808080"/>
<rect x="1224" y="552" width="3" height="1" fill="#808080"/>
<rect x="1230" y="552" width="3" height="1" fill="#808080"/>
<rect x="1236" y="552" width="3" height="1" fill="#808080"/>
<rect x="1242" y="552" width="3" height="1" fill="#808080"/>
<rect x="1248" y="552" width="3" height="1" fill="#808080"/>
<rect x="1254" y="552" width="3" height="1" fill="#808080"/>
<rect x="1260" y="552" width="3" height="1" fill="#808080"/>
<rect x="1266" y="552" width="3" height="1" fill="#808080"/>
<rect x="1272" y="552" width="3" height="1" fill="#808080"/>
<rect x="1278" y="552" width="3" height="1" fill="#808080"/>
<rect x="1284" y="552" width="3" height="1" fill="#808080"/>
<rect x="1290" y="552" width="3" height="1" fill="#808080"/>
<rect x="1296" y="552" width="3" height="1" fill="#808080"/>
<rect x="1302" y="552" width="3" height="1" fill="#808080"/>
<rect x="1308" y="552" width="3" height="1" fill="#808080"/>
<rect x="1314" y="552" width="3" height="1" fill="#808080"/>
<rect x="1320" y="552" width="3" height="1" fill="#808080"/>
<rect x="1326" y="552" width="3" height="1" fill="#808080"/>
<rect x="1332" y="552" width="3" height="1" fill="#808080"/>
<rect x="738" y="570" width="3" height="1" fill="#808080"/>
<rect x="744" y="570" width="3" height="1" fill="#808080"/>
<rect x="750" y="570" width="3" height="1" fill="#808080"/>
<rect x="756" y="570" width="3" height="1" fill="#808080"/>
<rect x="762" y="570" width="3" height="1" fill="#808080"/>
<rect x="768" y="570" width="3" height="1" fill="#808080"/>
<rect x="774" y="570" width="3" height="1" fill="#808080"/>
<rect x="780" y="570" width="3" height="1" fill="#808080"/>
<rect x="786" y="570" width="3" height="1" fill="#808080"/>
<rect x="792" y="570" width="3" height="1" fill="#808080"/>
<rect x="798" y="570" width="3" height="1" fill="#808080"/>
<rect x="804" y="570" width="3" height="1" fill="#808080"/>
<rect x="810" y="570" width="3" height="1" fill="#808080"/>
<rect x="816" y="570" width="3" height="1" fill="#808080"/>
<rect x="822" y="570" width="3" height="1" fill="#808080"/>
<rect x="828" y="570" width="3" height="1" fill="#808080"/>
<rect x="834" y="570" width="3" height="1" fill="#808080"/>
<rect x="840" y="570" width="3" height="1" fill="#808080"/>
<rect x="846" y="570" width="3" height="1" fill="#808080"/>
<rect x="852" y="570" width="3" height="1" fill="#808080"/>
<rect x="858" y="570" width="3" height="1" fill="#808080"/>
<rect x="864" y="570" width="3" height="1" fill="#808080"/>
<rect x="870" y="570" width="3" height="1" fill="#808080"/>
<rect x="876" y="570" width="3" height="1" fill="#808080"/>
<rect x="882" y="570" width="3" height="1" fill="#808080"/>
<rect x="888" y="570" width="3" height="1" fill="#808080"/>
<rect x="894" y="570" width="3" height="1" fill="#808080"/>
<rect x="900" y="570" width="3" height="1" fill="#808080"/>
<rect x="906" y="570" width="3" height="1" fill="#808080"/>
<rect x="912" y="570" width="3" height="1" fill="#808080"/>
<rect x="918" y="570" width="3" height="1" fill="#808080"/>
<rect x="924" y="570" width="3" height="1" fill="#808080"/>
<rect x="930" y="570" width="3" height="1" fill="#808080"/>
<rect x="936" y="570" width="3" height="1" fill="#808080"/>
<rect x="942" y="570" width="3" height="1" fill="#808080"/>
<rect x="948" y="570" width="3" height="1" fill="#808080"/>
<rect x="954" y="570" width="3" height="1" fill="#808080"/>
<rect x="960" y="570" width="3" height="1" fill="#808080"/>
<rect x="966" y="570" width="3" height="1" fill="#808080"/>
<rect x="972" y="570" width="3" height="1" fill="#808080"/>
<rect x="978" y="570" width="3" height="1" fill="#808080"/>
<rect x="984" y="570" width="3" height="1" fill="#808080"/>
<rect x="990" y="570" width="3" height="1" fill="#808080"/>
<rect x="996" y="570" width="3" height="1" fill="#808080"/>
<rect x="1002" y="570" width="3" height="1" fill="#808080"/>
<rect x="1008" y="570" width="3" height="1" fill="#808080"/>
<rect x="1014" y="570" width="3" height="1" fill="#808080"/>
<rect x="1020" y="570" width="3" height="1" fill="#808080"/>
<rect x="1026" y="570" width="3" height="1" fill="#808080"/>
<rect x="1032" y="570" width="3" height="1" fill="#808080"/>
<rect x="1038" y="570" width="3" height="1" fill="#808080"/>
<rect x="1044" y="570" width="3" height="1" fill="#808080"/>
<rect x="1050" y="570" width="3" height="1" fill="#808080"/>
<rect x="1056" y="570" width="3" height="1" fill="#808080"/>
<rect x="1062" y="570" width="3" height="1" fill="#808080"/>
<rect x="1068" y="570" width="3" height="1" fill="#808080"/>
<rect x="1074" y="570" width="3" height="1" fill="#808080"/>
<rect x="1080" y="570" width="3" height="1" fill="#808080"/>
<rect x="1086" y="570" width="3" height="1" fill="#808080"/>
<rect x="1092" y="570" width="3" height="1" fill="#808080"/>
<rect x="1098" y="570" width="3" height="1" fill="#808080"/>
<rect x="1104" y="570" width="3" height="1" fill="#808080"/>
<rect x="1110" y="570" width="3" height="1" fill="#808080"/>
<rect x="1116" y="570" width="3" height="1" fill="#808080"/>
<rect x="1122" y="570" width="3" height="1" fill="#808080"/>
<rect x="1128" y="570" width="3" height="1" fill="#808080"/>
<rect x="1134" y="570" width="3" height="1" fill="#808080"/>
<rect x="1140" y="570" width="3" height="1" fill="#808080"/>
<rect x="1146" y="570" width="3" height="1" fill="#808080"/>
<rect x="1152" y="570" width="3" height="1" fill="#808080"/>
<rect x="1158" y="570" width="3" height="1" fill="#808080"/>
<rect x="1164" y="570" width="3" height="1" fill="#808080"/>
<rect x="1170" y="570" width="3" height="1" fill="#808080"/>
<rect x="1176" y="570" width="3" height="1" fill="#808080"/>
<rect x="1182" y="570" width="3" height="1" fill="#808080"/>
<rect x="1188" y="570" width="3" height="1" fill="#808080"/>
<rect x="1194" y="570" width="3" height="1" fill="#808080"/>
<rect x="1200" y="570" width="3" height="1" fill="#808080"/>
<rect x="1206" y="570" width="3" height="1" fill="#808080"/>
<rect x="1212" y="570" width="3" height="1" fill="#808080"/>
<rect x="1218" y="570" width="3" height="1" fill="#808080"/>
<rect x="1224" y="570" width="3" height="1" fill="#808080"/>
<rect x="1230" y="570" width="3" height="1" fill="#808080"/>
<rect x="1236" y="570" width="3" height="1" fill="#808080"/>
<rect x="1242" y="570" width="3" height="1" fill="#808080"/>
<rect x="1248" y="570" width="3" height="1" fill="#808080"/>
<rect x="1254" y="570" width="3" height="1" fill="#808080"/>
<rect x="1260" y="570" width="3" height="1" fill="#808080"/>
<rect x="1266" y="570" width="3" height="1" fill="#808080"/>
<rect x="1272" y="570" width="3" height="1" fill="#808080"/>
<rect x="1278" y="570" width="3" height="1" fill="#808080"/>
<rect x="1284" y="570" width="3" height="1" fill="#808080"/>
<rect x="1290" y="570" width="3" height="1" fill="#808080"/>
<rect x="1296" y="570" width="3" height="1" fill="#808080"/>
<rect x="1302" y="570" width="3" height="1" fill="#808080"/>
<rect x="1308" y="570" width="3" height="1" fill="#808080"/>
<rect x="1314" y="570" width="3" height="1" fill="#808080"/>
<rect x="1320" y="570" width="3" height="1" fill="#808080"/>
<rect x="1326" y="570" width="3" height="1" fill="#808080"/>
<rect x="1332" y="570" width="3" height="1" fill="#808080"/>
<rect x="806" y="327" width="1" height="3" fill="#808080"/>
<rect x="806" y="333" width="1" height="3" fill="#808080"/>
<rect x="806" y="339" width="1" height="3" fill="#808080"/>
<rect x="806" y="345" width="1" height="3" fill="#808080"/>
<rect x="806" y="351" width="1" height="3" fill="#808080"/>
<rect x="806" y="357" width="1" height="3" fill="#808080"/>
<rect x="806" y="363" width="1" height="3" fill="#808080"/>
<rect x="806" y="369" width="1" height="3" fill="#808080"/>
<rect x="806" y="375" width="1" height="3" fill="#808080"/>
<rect x="806" y="381" width="1" height="3" fill="#808080"/>
<rect x="806" y="387" width="1" height="3" fill="#808080"/>
<rect x="806" y="393" width="1" height="3" fill="#808080"/>
<rect x="806" y="399" width="1" height="3" fill="#808080"/>
<rect x="806" y="405" width="1" height="3" fill="#808080"/>
<rect x="806" y="411" width="1" height="3" fill="#808080"/>
<rect x="806" y="417" width="1" height="3" fill="#808080"/>
<rect x="806" y="423" width="1" height="3" fill="#808080"/>
<rect x="806" y="429" width="1" height="3" fill="#808080"/>
<rect x="806" y="435" width="1" height="3" fill="#808080"/>
<rect x="806" y="441" width="1" height="3" fill="#808080"/>
<rect x="806" y="447" width="1" height="3" fill="#808080"/>
<rect x="806" y="453" width="1" height="3" fill="#808080"/>
<rect x="806" y="459" width="1" height="3" fill="#808080"/>
<rect x="806" y="465" width="1" height="3" fill="#808080"/>
<rect x="806" y="471" width="1" height="3" fill="#808080"/>
<rect x="806" y="477" width="1" height="3" fill="#808080"/>
<rect x="806" y="483" width="1" height="3" fill="#808080"/>
<rect x="806" y="489" width="1" height="3" fill="#808080"/>
<rect x="806" y="495" width="1" height="3" fill="#808080"/>
<rect x="806" y="501" width="1" height="3" fill="#808080"/>
<rect x="806" y="507" width="1" height="3" fill="#808080"/>
<rect x="806" y="513" width="1" height="3" fill="#808080"/>
<rect x="806" y="519" width="1" height="3" fill="#808080"/>
<rect x="806" y="525" width="1" height="3" fill="#808080"/>
<rect x="806" y="531" width="1" height="3" fill="#808080"/>
<rect x="806" y="537" width="1" height="3" fill="#808080"/>
<rect x="806" y="543" width="1" height="3" fill="#808080"/>
<rect x="806" y="549" width="1" height="3" fill="#808080"/>
<rect x="806" y="555" width="1" height="3" fill="#808080"/>
<rect x="806" y="561" width="1" height="3" fill="#808080"/>
<rect x="806" y="567" width="1" height="3" fill="#808080"/>
<rect x="806" y="573" width="1" height="3" fill="#808080"/>
<rect x="806" y="579" width="1" height="3" fill="#808080"/>
<rect x="806" y="585" width="1" height="2" fill="#808080"/>
<rect x="875" y="327" width="1" height="3" fill="#808080"/>
<rect x="875" y="333" width="1" height="3" fill="#808080"/>
<rect x="875" y="339" width="1" height="3" fill="#808080"/>
<rect x="875" y="345" width="1" height="3" fill="#808080"/>
<rect x="875" y="351" width="1" height="3" fill="#808080"/>
<rect x="875" y="357" width="1" height="3" fill="#808080"/>
<rect x="875" y="363" width="1" height="3" fill="#808080"/>
<rect x="875" y="369" width="1" height="3" fill="#808080"/>
<rect x="875" y="375" width="1" height="3" fill="#808080"/>
<rect x="875" y="381" width="1" height="3" fill="#808080"/>
<rect x="875" y="387" width="1" height="3" fill="#808080"/>
<rect x="875" y="393" width="1" height="3" fill="#808080"/>
<rect x="875" y="399" width="1" height="3" fill="#808080"/>
<rect x="875" y="405" width="1" height="3" fill="#808080"/>
<rect x="875" y="411" width="1" height="3" fill="#808080"/>
<rect x="875" y="417" width="1" height="3" fill="#808080"/>
<rect x="875" y="423" width="1" height="3" fill="#808080"/>
<rect x="875" y="429" width="1" height="3" fill="#808080"/>
<rect x="875" y="435" width="1" height="3" fill="#808080"/>
<rect x="875" y="441" width="1" height="3" fill="#808080"/>
<rect x="875" y="447" width="1" height="3" fill="#808080"/>
<rect x="875" y="453" width="1" height="3" fill="#808080"/>
<rect x="875" y="459" width="1" height="3" fill="#808080"/>
<rect x="875" y="465" width="1" height="3" fill="#808080"/>
<rect x="875" y="471" width="1" height="3" fill="#808080"/>
<rect x="875" y="477" width="1" height="3" fill="#808080"/>
<rect x="875" y="483" width="1" height="3" fill="#808080"/>
<rect x="875" y="489" width="1" height="3" fill="#808080"/>
<rect x="875" y="495" width="1" height="3" fill="#808080"/>
<rect x="875" y="501" width="1" height="3" fill="#808080"/>
<rect x="875" y="507" width="1" height="3" fill="#808080"/>
<rect x="875" y="513" width="1" height="3" fill="#808080"/>
<rect x="875" y="519" width="1" height="3" fill="#808080"/>
<rect x="875" y="525" width="1" height="3" fill="#808080"/>
<rect x="875" y="531" width="1" height="3" fill="#808080"/>
<rect x="875" y="537" width="1" height="3" fill="#808080"/>
<rect x="875" y="543" width="1" height="3" fill="#808080"/>
<rect x="875" y="549" width="1" height="3" fill="#808080"/>
<rect x="875" y="555" width="1" height="3" fill="#808080"/>
<rect x="875" y="561" width="1" height="3" fill="#808080"/>
<rect x="875" y="567" width="1" height="3" fill="#808080"/>
<rect x="875" y="573" width="1" height="3" fill="#808080"/>
<rect x="875" y="579" width="1" height="3" fill="#808080"/>
<rect x="875" y="585" width="1" height="2" fill="#808080"/>
<rect x="943" y="327" width="1" height="3" fill="#808080"/>
<rect x="943" y="333" width="1" height="3" fill="#808080"/>
<rect x="943" y="339" width="1" height="3" fill="#808080"/>
<rect x="943" y="345" width="1" height="3" fill="#808080"/>
<rect x="943" y="351" width="1" height="3" fill="#808080"/>
<rect x="943" y="357" width="1" height="3" fill="#808080"/>
<rect x="943" y="363" width="1" height="3" fill="#808080"/>
<rect x="943" y="369" width="1" height="3" fill="#808080"/>
<rect x="943" y="375" width="1" height="3" fill="#808080"/>
<rect x="943" y="381" width="1" height="3" fill="#808080"/>
<rect x="943" y="387" width="1" height="3" fill="#808080"/>
<rect x="943" y="393" width="1" height="3" fill="#808080"/>
<rect x="943" y="399" width="1" height="3" fill="#808080"/>
<rect x="943" y="405" width="1" height="3" fill="#808080"/>
<rect x="943" y="411" width="1" height="3" fill="#808080"/>
<rect x="943" y="417" width="1" height="3" fill="#808080"/>
<rect x="943" y="423" width="1" height="3" fill="#808080"/>
<rect x="943" y="429" width="1" height="3" fill="#808080"/>
<rect x="943" y="435" width="1" height="3" fill="#808080"/>
<rect x="943" y="441" width="1" height="3" fill="#808080"/>
<rect x="943" y="447" width="1" height="3" fill="#808080"/>
<rect x="943" y="453" width="1" height="3" fill="#808080"/>
<rect x="943" y="459" width="1" height="3" fill="#808080"/>
<rect x="943" y="465" width="1" height="3" fill="#808080"/>
<rect x="943" y="471" width="1" height="3" fill="#808080"/>
<rect x="943" y="477" width="1" height="3" fill="#808080"/>
<rect x="943" y="483" width="1" height="3" fill="#808080"/>
<rect x="943" y="489" width="1" height="3" fill="#808080"/>
<rect x="943" y="495" width="1" height="3" fill="#808080"/>
<rect x="943" y="501" width="1" height="3" fill="#808080"/>
<rect x="943" y="507" width="1" height="3" fill="#808080"/>
<rect x="943" y="513" width="1" height="3" fill="#808080"/>
<rect x="943" y="519" width="1" height="3" fill="#808080"/>
<rect x="943" y="525" width="1" height="3" fill="#808080"/>
<rect x="943" y="531" width="1" height="3" fill="#808080"/>
<rect x="943" y="537" width="1" height="3" fill="#808080"/>
<rect x="943" y="543" width="1" height="3" fill="#808080"/>
<rect x="943" y="549" width="1" height="3" fill="#808080"/>
<rect x="943" y="555" width="1" height="3" fill="#808080"/>
<rect x="943" y="561" width="1" height="3" fill="#808080"/>
<rect x="943" y="567" width="1" height="3" fill="#808080"/>
<rect x="943" y="573" width="1" height="3" fill="#808080"/>
<rect x="943" y="579" width="1" height="3" fill="#808080"/>
<rect x="943" y="585" width="1" height="2" fill="#808080"/>
<rect x="1012" y="327" width="1" height="3" fill="#808080"/>
<rect x="1012" y="333" width="1" height="3" fill="#808080"/>
<rect x="1012" y="339" width="1" height="3" fill="#808080"/>
<rect x="1012" y="345" width="1" height="3" fill="#808080"/>
<rect x="1012" y="351" width="1" height="3" fill="#808080"/>
<rect x="1012" y="357" width="1" height="3" fill="#808080"/>
<rect x="1012" y="363" width="1" height="3" fill="#808080"/>
<rect x="1012" y="369" width="1" height="3" fill="#808080"/>
<rect x="1012" y="375" width="1" height="3" fill="#808080"/>
<rect x="1012" y="381" width="1" height="3" fill="#808080"/>
<rect x="1012" y="387" width="1" height="3" fill="#808080"/>
<rect x="1012" y="393" width="1" height="3" fill="#808080"/>
<rect x="1012" y="399" width="1" height="3" fill="#808080"/>
<rect x="1012" y="405" width="1" height="3" fill="#808080"/>
<rect x="1012" y="411" width="1" height="3" fill="#808080"/>
<rect x="1012" y="417" width="1" height="3" fill="#808080"/>
<rect x="1012" y="423" width="1" height="3" fill="#808080"/>
<rect x="1012" y="429" width="1" height="3" fill="#808080"/>
<rect x="1012" y="435" width="1" height="3" fill="#808080"/>
<rect x="1012" y="441" width="1" height="3" fill="#808080"/>
<rect x="1012" y="447" width="1" height="3" fill="#808080"/>
<rect x="1012" y="453" width="1" height="3" fill="#808080"/>
<rect x="1012" y="459" width="1" height="3" fill="#808080"/>
<rect x="1012" y="465" width="1" height="3" fill="#808080"/>
<rect x="1012" y="471" width="1" height="3" fill="#808080"/>
<rect x="1012" y="477" width="1" height="3" fill="#808080"/>
<rect x="1012" y="483" width="1" height="3" fill="#808080"/>
<rect x="1012" y="489" width="1" height="3" fill="#808080"/>
<rect x="1012" y="495" width="1" height="3" fill="#808080"/>
<rect x="1012" y="501" width="1" height="3" fill="#808080"/>
<rect x="1012" y="507" width="1" height="3" fill="#808080"/>
<rect x="1012" y="513" width="1" height="3" fill="#808080"/>
<rect x="1012" y="519" width="1" height="3" fill="#808080"/>
<rect x="1012" y="525" width="1" height="3" fill="#808080"/>
<rect x="1012" y="531" width="1" height="3" fill="#808080"/>
<rect x="1012" y="537" width="1" height="3" fill="#808080"/>
<rect x="1012" y="543" width="1" height="3" fill="#808080"/>
<rect x="1012" y="549" width="1" height="3" fill="#808080"/>
<rect x="1012" y="555" width="1" height="3" fill="#808080"/>
<rect x="1012" y="561" width="1" height="3" fill="#808080"/>
<rect x="1012" y="567" width="1" height="3" fill="#808080"/>
<rect x="1012" y="573" width="1" height="3" fill="#808080"/>
<rect x="1012" y="579" width="1" height="3" fill="#808080"/>
<rect x="1012" y="585" width="1" height="2" fill="#808080"/>
<rect x="1080" y="327" width="1" height="3" fill="#808080"/>
<rect x="1080" y="333" width="1" height="3" fill="#808080"/>
<rect x="1080" y="339" width="1" height="3" fill="#808080"/>
<rect x="1080" y="345" width="1" height="3" fill="#808080"/>
<rect x="1080" y="351" width="1" height="3" fill="#808080"/>
<rect x="1080" y="357" width="1" height="3" fill="#808080"/>
<rect x="1080" y="363" width="1" height="3" fill="#808080"/>
<rect x="1080" y="369" width="1" height="3" fill="#808080"/>
<rect x="1080" y="375" width="1" height="3" fill="#808080"/>
<rect x="1080" y="381" width="1" height="3" fill="#808080"/>
<rect x="1080" y="387" width="1" height="3" fill="#808080"/>
<rect x="1080" y="393" width="1" height="3" fill="#808080"/>
<rect x="1080" y="399" width="1" height="3" fill="#808080"/>
<rect x="1080" y="405" width="1" height="3" fill="#808080"/>
<rect x="1080" y="411" width="1" height="3" fill="#808080"/>
<rect x="1080" y="417" width="1" height="3" fill="#808080"/>
<rect x="1080" y="423" width="1" height="3" fill="#808080"/>
<rect x="1080" y="429" width="1" height="3" fill="#808080"/>
<rect x="1080" y="435" width="1" height="3" fill="#808080"/>
<rect x="1080" y="441" width="1" height="3" fill="#808080"/>
<rect x="1080" y="447" width="1" height="3" fill="#808080"/>
<rect x="1080" y="453" width="1" height="3" fill="#808080"/>
<rect x="1080" y="459" width="1" height="3" fill="#808080"/>
<rect x="1080" y="465" width="1" height="3" fill="#808080"/>
<rect x="1080" y="471" width="1" height="3" fill="#808080"/>
<rect x="1080" y="477" width="1" height="3" fill="#808080"/>
<rect x="1080" y="483" width="1" height="3" fill="#808080"/>
<rect x="1080" y="489" width="1" height="3" fill="#808080"/>
<rect x="1080" y="495" width="1" height="3" fill="#808080"/>
<rect x="1080" y="501" width="1" height="3" fill="#808080"/>
<rect x="1080" y="507" width="1" height="3" fill="#808080"/>
<rect x="1080" y="513" width="1" height="3" fill="#808080"/>
<rect x="1080" y="519" width="1" height="3" fill="#808080"/>
<rect x="1080" y="525" width="1" height="3" fill="#808080"/>
<rect x="1080" y="531" width="1" height="3" fill="#808080"/>
<rect x="1080" y="537" width="1" height="3" fill="#808080"/>
<rect x="1080" y="543" width="1" height="3" fill="#808080"/>
<rect x="1080" y="549" width="1" height="3" fill="#808080"/>
<rect x="1080" y="555" width="1" height="3" fill="#808080"/>
<rect x="1080" y="561" width="1" height="3" fill="#808080"/>
<rect x="1080" y="567" width="1" height="3" fill="#808080"/>
<rect x="1080" y="573" width="1" height="3" fill="#808080"/>
<rect x="1080" y="579" width="1" height="3" fill="#808080"/>
<rect x="1080" y="585" width="1" height="2" fill="#808080"/>
<rect x="1149" y="327" width="1" height="3" fill="#808080"/>
<rect x="1149" y="333" width="1" height="3" fill="#808080"/>
<rect x="1149" y="339" width="1" height="3" fill="#808080"/>
<rect x="1149" y="345" width="1" height="3" fill="#808080"/>
<rect x="1149" y="351" width="1" height="3" fill="#808080"/>
<rect x="1149" y="357" width="1" height="3" fill="#808080"/>
<rect x="1149" y="363" width="1" height="3" fill="#808080"/>
<rect x="1149" y="369" width="1" height="3" fill="#808080"/>
<rect x="1149" y="375" width="1" height="3" fill="#808080"/>
<rect x="1149" y="381" width="1" height="3" fill="#808080"/>
<rect x="1149" y="387" width="1" height="3" fill="#808080"/>
<rect x="1149" y="393" width="1" height="3" fill="#808080"/>
<rect x="1149" y="399" width="1" height="3" fill="#808080"/>
<rect x="1149" y="405" width="1" height="3" fill="#808080"/>
<rect x="1149" y="411" width="1" height="3" fill="#808080"/>
<rect x="1149" y="417" width="1" height="3" fill="#808080"/>
<rect x="1149" y="423" width="1" height="3" fill="#808080"/>
<rect x="1149" y="429" width="1" height="3" fill="#808080"/>
<rect x="1149" y="435" width="1" height="3" fill="#808080"/>
<rect x="1149" y="441" width="1" height="3" fill="#808080"/>
<rect x="1149" y="447" width="1" height="3" fill="#808080"/>
<rect x="1149" y="453" width="1" height="3" fill="#808080"/>
<rect x="1149" y="459" width="1" height="3" fill="#808080"/>
<rect x="1149" y="465" width="1" height="3" fill="#808080"/>
<rect x="1149" y="471" width="1" height="3" fill="#808080"/>
<rect x="1149" y="477" width="1" height="3" fill="#808080"/>
<rect x="1149" y="483" width="1" height="3" fill="#808080"/>
<rect x="1149" y="489" width="1" height="3" fill="#808080"/>
<rect x="1149" y="495" width="1" height="3" fill="#808080"/>
<rect x="1149" y="501" width="1" height="3" fill="#808080"/>
<rect x="1149" y="507" width="1" height="3" fill="#808080"/>
<rect x="1149" y="513" width="1" height="3" fill="#808080"/>
<rect x="1149" y="519" width="1" height="3" fill="#808080"/>
<rect x="1149" y="525" width="1" height="3" fill="#808080"/>
<rect x="1149" y="531" width="1" height="3" fill="#808080"/>
<rect x="1149" y="537" width="1" height="3" fill="#808080"/>
<rect x="1149" y="543" width="1" height="3" fill="#808080"/>
<rect x="1149" y="549" width="1" height="3" fill="#808080"/>
<rect x="1149" y="555" width="1" height="3" fill="#808080"/>
<rect x="1149" y="561" width="1" height="3" fill="#808080"/>
<rect x="1149" y="567" width="1" height="3" fill="#808080"/>
<rect x="1149" y="573" width="1" height="3" fill="#808080"/>
<rect x="1149" y="579" width="1" height="3" fill="#808080"/>
<rect x="1149" y="585" width="1" height="2" fill="#808080"/>
<rect x="1217" y="327" width="1" height="3" fill="#808080"/>
<rect x="1217" y="333" width="1" height="3" fill="#808080"/>
<rect x="1217" y="339" width="1" height="3" fill="#808080"/>
<rect x="1217" y="345" width="1" height="3" fill="#808080"/>
<rect x="1217" y="351" width="1" height="3" fill="#808080"/>
<rect x="1217" y="357" width="1" height="3" fill="#808080"/>
<rect x="1217" y="363" width="1" height="3" fill="#808080"/>
<rect x="1217" y="369" width="1" height="3" fill="#808080"/>
<rect x="1217" y="375" width="1" height="3" fill="#808080"/>
<rect x="1217" y="381" width="1" height="3" fill="#808080"/>
<rect x="1217" y="387" width="1" height="3" fill="#808080"/>
<rect x="1217" y="393" width="1" height="3" fill="#808080"/>
<rect x="1217" y="399" width="1" height="3" fill="#808080"/>
<rect x="1217" y="405" width="1" height="3" fill="#808080"/>
<rect x="1217" y="411" width="1" height="3" fill="#808080"/>
<rect x="1217" y="417" width="1" height="3" fill="#808080"/>
<rect x="1217" y="423" width="1" height="3" fill="#808080"/>
<rect x="1217" y="429" width="1" height="3" fill="#808080"/>
<rect x="1217" y="435" width="1" height="3" fill="#808080"/>
<rect x="1217" y="441" width="1" height="3" fill="#808080"/>
<rect x="1217" y="447" width="1" height="3" fill="#808080"/>
<rect x="1217" y="453" width="1" height="3" fill="#808080"/>
<rect x="1217" y="459" width="1" height="3" fill="#808080"/>
<rect x="1217" y="465" width="1" height="3" fill="#808080"/>
<rect x="1217" y="471" width="1" height="3" fill="#808080"/>
<rect x="1217" y="477" width="1" height="3" fill="#808080"/>
<rect x="1217" y="483" width="1" height="3" fill="#808080"/>
<rect x="1217" y="489" width="1" height="3" fill="#808080"/>
<rect x="1217" y="495" width="1" height="3" fill="#808080"/>
<rect x="1217" y="501" width="1" height="3" fill="#808080"/>
<rect x="1217" y="507" width="1" height="3" fill="#808080"/>
<rect x="1217" y="513" width="1" height="3" fill="#808080"/>
<rect x="1217" y="519" width="1" height="3" fill="#808080"/>
<rect x="1217" y="525" width="1" height="3" fill="#808080"/>
<rect x="1217" y="531" width="1" height="3" fill="#808080"/>
<rect x="1217" y="537" width="1" height="3" fill="#808080"/>
<rect x="1217" y="543" width="1" height="3" fill="#808080"/>
<rect x="1217" y="549" width="1" height="3" fill="#808080"/>
<rect x="1217" y="555" width="1" height="3" fill="#808080"/>
<rect x="1217" y="561" width="1" height="3" fill="#808080"/>
<rect x="1217" y="567" width="1" height="3" fill="#808080"/>
<rect x="1217" y="573" width="1" height="3" fill="#808080"/>
<rect x="1217" y="579" width="1" height="3" fill="#808080"/>
<rect x="1217" y="585" width="1" height="2" fill="#808080"/>
<rect x="1286" y="327" width="1" height="3" fill="#808080"/>
<rect x="1286" y="333" width="1" height="3" fill="#808080"/>
<rect x="1286" y="339" width="1" height="3" fill="#808080"/>
<rect x="1286" y="345" width="1" height="3" fill="#808080"/>
<rect x="1286" y="351" width="1" height="3" fill="#808080"/>
<rect x="1286" y="357" width="1" height="3" fill="#808080"/>
<rect x="1286" y="363" width="1" height="3" fill="#808080"/>
<rect x="1286" y="369" width="1" height="3" fill="#808080"/>
<rect x="1286" y="375" width="1" height="3" fill="#808080"/>
<rect x="1286" y="381" width="1" height="3" fill="#808080"/>
<rect x="1286" y="387" width="1" height="3" fill="#808080"/>
<rect x="1286" y="393" width="1" height="3" fill="#808080"/>
<rect x="1286" y="399" width="1" height="3" fill="#808080"/>
<rect x="1286" y="405" width="1" height="3" fill="#808080"/>
<rect x="1286" y="411" width="1" height="3" fill="#808080"/>
<rect x="1286" y="417" width="1" height="3" fill="#808080"/>
<rect x="1286" y="423" width="1" height="3" fill="#808080"/>
<rect x="1286" y="429" width="1" height="3" fill="#808080"/>
<rect x="1286" y="435" width="1" height="3" fill="#808080"/>
<rect x="1286" y="441" width="1" height="3" fill="#808080"/>
<rect x="1286" y="447" width="1" height="3" fill="#808080"/>
<rect x="1286" y="453" width="1" height="3" fill="#808080"/>
<rect x="1286" y="459" width="1" height="3" fill="#808080"/>
<rect x="1286" y="465" width="1" height="3" fill="#808080"/>
<rect x="1286" y="471" width="1" height="3" fill="#808080"/>
<rect x="1286" y="477" width="1" height="3" fill="#808080"/>
<rect x="1286" y="483" width="1" height="3" fill="#808080"/>
<rect x="1286" y="489" width="1" height="3" fill="#808080"/>
<rect x="1286" y="495" width="1" height="3" fill="#808080"/>
<rect x="1286" y="501" width="1" height="3" fill="#808080"/>
<rect x="1286" y="507" width="1" height="3" fill="#808080"/>
<rect x="1286" y="513" width="1" height="3" fill="#808080"/>
<rect x="1286" y="519" width="1" height="3" fill="#808080"/>
<rect x="1286" y="525" width="1" height="3" fill="#808080"/>
<rect x="1286" y="531" width="1" height="3" fill="#808080"/>
<rect x="1286" y="537" width="1" height="3" fill="#808080"/>
<rect x="1286" y="543" width="1" height="3" fill="#808080"/>
<rect x="1286" y="549" width="1" height="3" fill="#808080"/>
<rect x="1286" y="555" width="1" height="3" fill="#808080"/>
<rect x="1286" y="561" width="1" height="3" fill="#808080"/>
<rect x="1286" y="567" width="1" height="3" fill="#808080"/>
<rect x="1286" y="573" width="1" height="3" fill="#808080"/>
<rect x="1286" y="579" width="1" height="3" fill="#808080"/>
<rect x="1286" y="585" width="1" height="2" fill="#808080"/>
<rect x="731" y="325" width="607" height="1" fill="#c0c0c0"/>
<rect x="731" y="587" width="607" height="1" fill="#c0c0c0"/>
<rect x="738" y="325" width="1" height="270" fill="#c0c0c0"/>
<rect x="1337" y="325" width="1" height="263" fill="#c0c0c0"/>
<rect x="731" y="325" width="8" height="1" fill="#c0c0c0"/>
<text x="730" y="330" text-anchor="end" font-family="Liberation Sans" font-size="13.5" fill="#c8c8c8">6.4V</text>
<rect x="731" y="342" width="8" height="1" fill="#c0c0c0"/>
<text x="730" y="347" text-anchor="end" font-family="Liberation Sans" font-size="13.5" fill="#c8c8c8">6.3V</text>
<rect x="731" y="360" width="8" height="1" fill="#c0c0c0"/>
<text x="730" y="365" text-anchor="end" font-family="Liberation Sans" font-size="13.5" fill="#c8c8c8">6.2V</text>
<rect x="731" y="377" width="8" height="1" fill="#c0c0c0"/>
<text x="730" y="382" text-anchor="end" font-family="Liberation Sans" font-size="13.5" fill="#c8c8c8">6.1V</text>
<rect x="731" y="395" width="8" height="1" fill="#c0c0c0"/>
<text x="730" y="400" text-anchor="end" font-family="Liberation Sans" font-size="13.5" fill="#c8c8c8">6.0V</text>
<rect x="731" y="412" width="8" height="1" fill="#c0c0c0"/>
<text x="730" y="417" text-anchor="end" font-family="Liberation Sans" font-size="13.5" fill="#c8c8c8">5.9V</text>
<rect x="731" y="430" width="8" height="1" fill="#c0c0c0"/>
<text x="730" y="435" text-anchor="end" font-family="Liberation Sans" font-size="13.5" fill="#c8c8c8">5.8V</text>
<rect x="731" y="447" width="8" height="1" fill="#c0c0c0"/>
<text x="730" y="452" text-anchor="end" font-family="Liberation Sans" font-size="13.5" fill="#c8c8c8">5.7V</text>
<rect x="731" y="465" width="8" height="1" fill="#c0c0c0"/>
<text x="730" y="470" text-anchor="end" font-family="Liberation Sans" font-size="13.5" fill="#c8c8c8">5.6V</text>
<rect x="731" y="482" width="8" height="1" fill="#c0c0c0"/>
<text x="730" y="487" text-anchor="end" font-family="Liberation Sans" font-size="13.5" fill="#c8c8c8">5.5V</text>
<rect x="731" y="500" width="8" height="1" fill="#c0c0c0"/>
<text x="730" y="505" text-anchor="end" font-family="Liberation Sans" font-size="13.5" fill="#c8c8c8">5.4V</text>
<rect x="731" y="517" width="8" height="1" fill="#c0c0c0"/>
<text x="730" y="522" text-anchor="end" font-family="Liberation Sans" font-size="13.5" fill="#c8c8c8">5.3V</text>
<rect x="731" y="535" width="8" height="1" fill="#c0c0c0"/>
<text x="730" y="540" text-anchor="end" font-family="Liberation Sans" font-size="13.5" fill="#c8c8c8">5.2V</text>
<rect x="731" y="552" width="8" height="1" fill="#c0c0c0"/>
<text x="730" y="557" text-anchor="end" font-family="Liberation Sans" font-size="13.5" fill="#c8c8c8">5.1V</text>
<rect x="731" y="570" width="8" height="1" fill="#c0c0c0"/>
<text x="730" y="575" text-anchor="end" font-family="Liberation Sans" font-size="13.5" fill="#c8c8c8">5.0V</text>
<rect x="731" y="587" width="8" height="1" fill="#c0c0c0"/>
<text x="730" y="592" text-anchor="end" font-family="Liberation Sans" font-size="13.5" fill="#c8c8c8">4.9V</text>
<rect x="738" y="587" width="1" height="8" fill="#c0c0c0"/>
<text x="738.5" y="608" text-anchor="middle" font-family="Liberation Sans" font-size="13.5" fill="#c8c8c8">0ms</text>
<rect x="806" y="587" width="1" height="8" fill="#c0c0c0"/>
<text x="806.5" y="608" text-anchor="middle" font-family="Liberation Sans" font-size="13.5" fill="#c8c8c8">4ms</text>
<rect x="875" y="587" width="1" height="8" fill="#c0c0c0"/>
<text x="875.5" y="608" text-anchor="middle" font-family="Liberation Sans" font-size="13.5" fill="#c8c8c8">8ms</text>
<rect x="943" y="587" width="1" height="8" fill="#c0c0c0"/>
<text x="943.5" y="608" text-anchor="middle" font-family="Liberation Sans" font-size="13.5" fill="#c8c8c8">12ms</text>
<rect x="1012" y="587" width="1" height="8" fill="#c0c0c0"/>
<text x="1012.5" y="608" text-anchor="middle" font-family="Liberation Sans" font-size="13.5" fill="#c8c8c8">16ms</text>
<rect x="1080" y="587" width="1" height="8" fill="#c0c0c0"/>
<text x="1080.5" y="608" text-anchor="middle" font-family="Liberation Sans" font-size="13.5" fill="#c8c8c8">20ms</text>
<rect x="1149" y="587" width="1" height="8" fill="#c0c0c0"/>
<text x="1149.5" y="608" text-anchor="middle" font-family="Liberation Sans" font-size="13.5" fill="#c8c8c8">24ms</text>
<rect x="1217" y="587" width="1" height="8" fill="#c0c0c0"/>
<text x="1217.5" y="608" text-anchor="middle" font-family="Liberation Sans" font-size="13.5" fill="#c8c8c8">28ms</text>
<rect x="1286" y="587" width="1" height="8" fill="#c0c0c0"/>
<text x="1286.5" y="608" text-anchor="middle" font-family="Liberation Sans" font-size="13.5" fill="#c8c8c8">32ms</text>
<polygon points="739,343 826,343 826,344 828,344 828,345 830,345 830,346 833,346 833,347 997,347 997,346 998,346 998,345 999,345 999,344 1001,344 1001,343 1005,343 1005,342 1011,342 1011,343 1169,343 1169,344 1170,344 1170,345 1172,345 1172,346 1175,346 1175,347 1338,347 1338,574 1191,574 1191,575.5 739,575.5" fill="#00ff00"/>
<path d="M738.00,84.00 C741.67,84.22 751.33,84.98 760.00,85.30 C768.67,85.62 779.00,85.78 790.00,85.90 C801.00,86.02 820.00,85.98 826.00,86.00 M826.00,86.00 C826.25,86.25 826.83,84.67 827.50,87.50 C828.17,90.33 828.83,95.67 830.00,103.00 C831.17,110.33 832.78,119.58 834.50,131.50 C836.22,143.42 838.52,163.42 840.30,174.50 C842.08,185.58 843.70,190.70 845.20,198.00 C846.70,205.30 847.97,212.53 849.30,218.30 C850.63,224.07 851.67,227.70 853.20,232.60 C854.73,237.50 856.42,242.87 858.50,247.70 C860.58,252.53 863.62,258.03 865.70,261.60 C867.78,265.17 868.93,266.80 871.00,269.10 C873.07,271.40 875.43,273.67 878.10,275.40 C880.77,277.13 883.73,278.47 887.00,279.50 C890.27,280.53 893.87,281.17 897.70,281.60 C901.53,282.03 907.95,282.02 910.00,282.10 M910,282.1 L997,282 M997.00,282.00 C997.17,281.33 997.47,281.50 998.00,278.00 C998.53,274.50 998.92,271.03 1000.20,261.00 C1001.48,250.97 1003.82,232.25 1005.70,217.80 C1007.58,203.35 1009.70,185.27 1011.50,174.30 C1013.30,163.33 1014.80,159.22 1016.50,152.00 C1018.20,144.78 1020.15,136.33 1021.70,131.00 C1023.25,125.67 1024.12,123.53 1025.80,120.00 C1027.48,116.47 1029.05,113.53 1031.80,109.80 C1034.55,106.07 1038.82,100.62 1042.30,97.60 C1045.78,94.58 1048.63,93.32 1052.70,91.70 C1056.77,90.08 1062.17,88.80 1066.70,87.90 C1071.23,87.00 1077.70,86.57 1079.90,86.30 M1079.9,86.3 L1168,86.3 M1168.00,86.30 C1168.25,86.55 1168.83,84.97 1169.50,87.80 C1170.17,90.63 1170.83,95.97 1172.00,103.30 C1173.17,110.63 1174.78,119.88 1176.50,131.80 C1178.22,143.72 1180.52,163.72 1182.30,174.80 C1184.08,185.88 1185.70,191.00 1187.20,198.30 C1188.70,205.60 1189.97,212.83 1191.30,218.60 C1192.63,224.37 1193.67,228.00 1195.20,232.90 C1196.73,237.80 1198.42,243.17 1200.50,248.00 C1202.58,252.83 1205.62,258.33 1207.70,261.90 C1209.78,265.47 1210.93,267.10 1213.00,269.40 C1215.07,271.70 1217.43,273.97 1220.10,275.70 C1222.77,277.43 1225.73,278.77 1229.00,279.80 C1232.27,280.83 1235.87,281.47 1239.70,281.90 C1243.53,282.33 1249.95,282.32 1252.00,282.40 M1252.00,282.40 C1258.33,282.37 1275.83,282.33 1290.00,282.20 C1304.17,282.07 1329.17,281.70 1337.00,281.60" fill="none" stroke="#ff0000" stroke-width="1.8" stroke-linejoin="round" stroke-linecap="round" shape-rendering="geometricPrecision"/>
<text x="1006.9" y="39.9" font-family="Liberation Sans" font-size="13" font-weight="bold" fill="#ff0000" textLength="59.1" lengthAdjust="spacingAndGlyphs">V(demod)</text>
<text x="1013.2" y="319.9" font-family="Liberation Sans" font-size="13" font-weight="bold" fill="#00ff00" textLength="47" lengthAdjust="spacingAndGlyphs">V(n006)</text>
</svg></body></html>
